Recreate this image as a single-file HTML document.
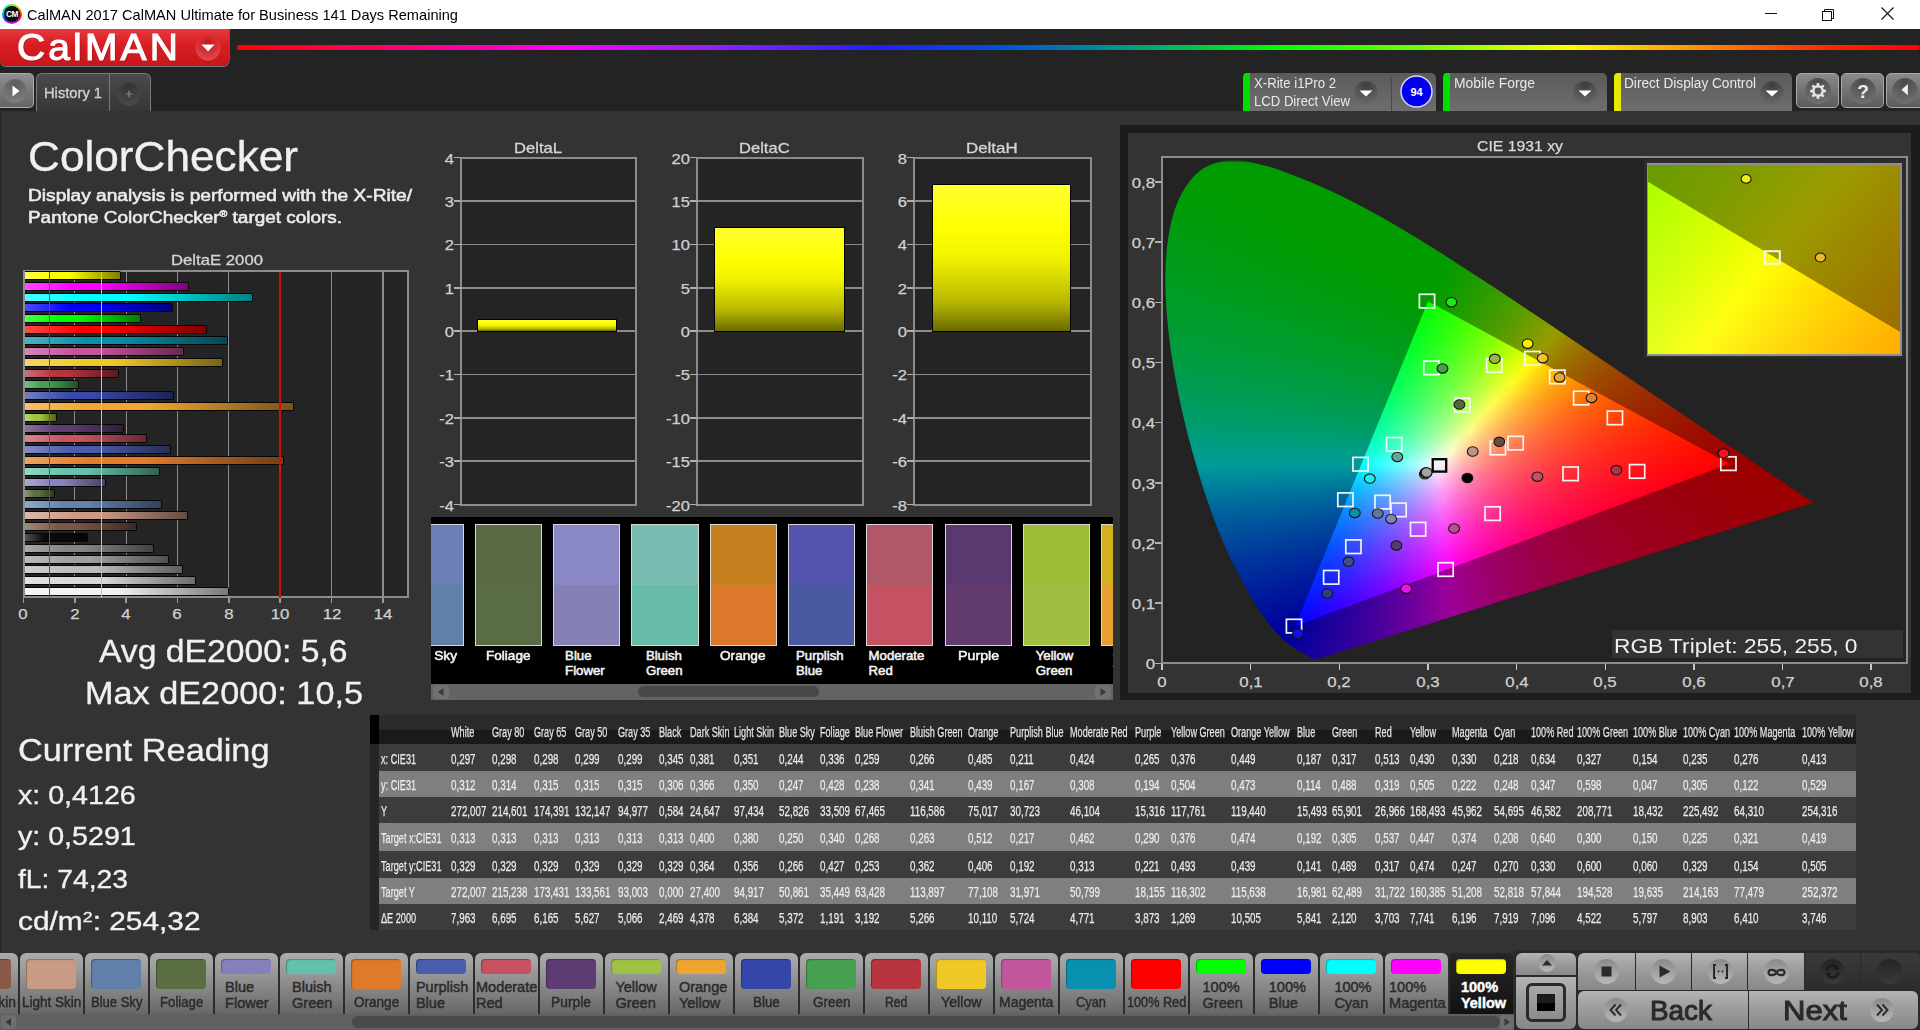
<!DOCTYPE html>
<html><head><meta charset="utf-8"><title>CalMAN</title>
<style>
html,body{margin:0;padding:0;width:1920px;height:1030px;overflow:hidden;background:#333;}
body{position:relative;font-family:"Liberation Sans", sans-serif;}
.a{position:absolute;}
.cs i{position:absolute;left:0;width:745px;display:block;}
.t{position:absolute;white-space:nowrap;line-height:1;transform-origin:0 0;}
</style></head><body>
<div class="a" style="left:0px;top:0px;width:1920px;height:29px;background:#fff"></div>
<div class="a" style="left:2px;top:4px;width:20px;height:20px;border-radius:50%;background:conic-gradient(#60f040 0deg,#ffd000 50deg,#ff2020 95deg,#ff10a0 140deg,#9020ff 190deg,#2040ff 230deg,#00c0ff 275deg,#00f080 320deg,#60f040 360deg)"></div>
<div class="a" style="left:4px;top:6px;width:16px;height:16px;border-radius:50%;background:#0c0c0c"></div>
<svg class="a" style="left:2px;top:4px" width="20" height="20"><text x="10" y="13.3" font-family="Liberation Sans" font-weight="bold" font-size="8.3" fill="#fff" text-anchor="middle" letter-spacing="-0.5">CM</text></svg>
<div class="t" id="title" style="left:27.00px;top:7.25px;font-size:15px;color:#000;transform:scaleX(0.9736);">CalMAN 2017 CalMAN Ultimate for Business 141 Days Remaining</div>
<div class="a" style="left:1765px;top:13px;width:12px;height:1px;background:#111"></div>
<svg class="a" style="left:1818px;top:5px" width="20" height="20"><path d="M6.5 6.5 V4.5 H15.5 V13.5 H13.5" fill="none" stroke="#111" stroke-width="1"/><rect x="4.5" y="6.5" width="9" height="9" fill="none" stroke="#111" stroke-width="1"/></svg>
<svg class="a" style="left:1879px;top:5px" width="18" height="18"><path d="M2.5 2.5 L14.5 14.5 M14.5 2.5 L2.5 14.5" stroke="#111" stroke-width="1.1"/></svg>
<div class="a" style="left:0px;top:29px;width:1920px;height:82px;background:#232323"></div>
<div class="a" style="left:0px;top:29px;width:229px;height:37px;background:linear-gradient(#e43a3e,#d81d22 45%,#c8161b);border-radius:0 0 6px 6px;box-shadow:0 1px 0 #7a7a7a, 1px 0 0 #5a5a5a"></div>
<div class="t" id="logo" style="left:17.00px;top:28.62px;font-size:37.5px;color:#fff;transform:scaleX(1.0405);letter-spacing:3px;-webkit-text-stroke:1.1px #fff;text-shadow:1px 1px 1px rgba(0,0,0,.3)">CalMAN</div>
<svg class="a" style="left:194px;top:34px" width="28" height="28"><defs><radialGradient id="ddg" cx=".5" cy=".3" r=".7"><stop offset="0" stop-color="#c8141a"/><stop offset="1" stop-color="#e04a4e"/></radialGradient></defs><circle cx="14" cy="14" r="12.5" fill="url(#ddg)"/><path d="M7.5 10.5 H20.5 L14 17.5 Z" fill="#fff"/></svg>
<div class="a" style="left:237px;top:45px;width:1683px;height:5px;background:linear-gradient(90deg,#ff0000 0px,#ff0080 180px,#ff00ff 330px,#9020ff 480px,#2020ff 640px,#0050e0 760px,#00a080 900px,#00ff00 1040px,#80ff00 1200px,#ffff00 1330px,#ff9000 1460px,#ff3000 1580px,#ff0000 1683px);border-radius:2px"></div>
<div class="a" style="left:0px;top:72.5px;width:34px;height:35px;background:linear-gradient(#8e8e8e,#646464);border:1.5px solid #acacac;border-left:none;border-radius:0 5px 5px 0;box-sizing:border-box"></div>
<svg class="a" style="left:2px;top:78px" width="26" height="26"><defs><radialGradient id="pbg" cx=".5" cy=".2" r=".8"><stop offset="0" stop-color="#5c5c5c"/><stop offset="1" stop-color="#7e7e7e"/></radialGradient></defs><circle cx="13" cy="13" r="12" fill="url(#pbg)"/><path d="M10.5 7.5 L17.5 13 L10.5 18.5 Z" fill="#fff"/></svg>
<div class="a" style="left:36px;top:73px;width:115px;height:38px;background:linear-gradient(#4a4a4a,#363636);border:1.3px solid #7a7a7a;border-bottom:none;border-radius:6px 6px 0 0;box-sizing:border-box"></div>
<div class="a" style="left:109px;top:74px;width:1.3px;height:37px;background:#7a7a7a"></div>
<div class="t" id="hist" style="left:44.00px;top:85.60px;font-size:14px;color:#cfcfcf;transform:scaleX(1.0501);-webkit-text-stroke:0.35px #cfcfcf">History 1</div>
<svg class="a" style="left:117px;top:82px" width="24" height="24"><defs><radialGradient id="plg" cx=".5" cy=".2" r=".8"><stop offset="0" stop-color="#333"/><stop offset="1" stop-color="#4a4a4a"/></radialGradient></defs><circle cx="12" cy="12" r="11.5" fill="url(#plg)"/><path d="M12 8.5 V15.5 M8.5 12 H15.5" stroke="#8a8a8a" stroke-width="1.2"/></svg>
<div class="a" style="left:1243px;top:73px;width:193px;height:38px;background:linear-gradient(#5a5a5a,#6e6e6e);border-radius:5px 5px 0 0"></div><div class="a" style="left:1243px;top:73px;width:7px;height:38px;background:#00dd00;border-radius:4px 0 0 0"></div>
<div class="t" id="xr1" style="left:1254.00px;top:76.10px;font-size:14px;color:#e8e8e8;transform:scaleX(0.9408);">X-Rite i1Pro 2</div>
<div class="t" id="xr2" style="left:1254.00px;top:93.60px;font-size:14px;color:#e8e8e8;transform:scaleX(0.9372);">LCD Direct View</div>
<div class="a" style="left:1391px;top:77px;width:1px;height:34px;background:#4a4a4a"></div>
<svg class="a" style="left:1400px;top:75px" width="34" height="34"><circle cx="16.5" cy="16.5" r="15.5" fill="#0000ee" stroke="#d8d8f8" stroke-width="1.5"/><text x="16.5" y="20.5" font-family="Liberation Sans" font-weight="bold" font-size="11" fill="#fff" text-anchor="middle">94</text></svg>
<div class="a" style="left:1443px;top:73px;width:164px;height:38px;background:linear-gradient(#5a5a5a,#6e6e6e);border-radius:5px 5px 0 0"></div><div class="a" style="left:1443px;top:73px;width:7px;height:38px;background:#00dd00;border-radius:4px 0 0 0"></div>
<div class="t" id="mf" style="left:1454.00px;top:76.10px;font-size:14px;color:#e8e8e8;transform:scaleX(0.9914);">Mobile Forge</div>
<div class="a" style="left:1614px;top:73px;width:178px;height:38px;background:linear-gradient(#5a5a5a,#6e6e6e);border-radius:5px 5px 0 0"></div><div class="a" style="left:1614px;top:73px;width:7px;height:38px;background:#e8e800;border-radius:4px 0 0 0"></div>
<div class="t" id="ddc" style="left:1624.00px;top:76.10px;font-size:14px;color:#e8e8e8;transform:scaleX(0.9751);">Direct Display Control</div>
<svg class="a" style="left:1353px;top:80px" width="26" height="26"><defs><radialGradient id="ddr1366" cx=".5" cy=".15" r=".85"><stop offset="0" stop-color="#3e3e3e"/><stop offset="1" stop-color="#6a6a6a"/></radialGradient></defs><circle cx="13" cy="13" r="12" fill="url(#ddr1366)"/><path d="M6.5 10.5 H19.5 L13 16.5 Z" fill="#fff"/></svg>
<svg class="a" style="left:1572px;top:80px" width="26" height="26"><defs><radialGradient id="ddr1585" cx=".5" cy=".15" r=".85"><stop offset="0" stop-color="#3e3e3e"/><stop offset="1" stop-color="#6a6a6a"/></radialGradient></defs><circle cx="13" cy="13" r="12" fill="url(#ddr1585)"/><path d="M6.5 10.5 H19.5 L13 16.5 Z" fill="#fff"/></svg>
<svg class="a" style="left:1759px;top:80px" width="26" height="26"><defs><radialGradient id="ddr1772" cx=".5" cy=".15" r=".85"><stop offset="0" stop-color="#3e3e3e"/><stop offset="1" stop-color="#6a6a6a"/></radialGradient></defs><circle cx="13" cy="13" r="12" fill="url(#ddr1772)"/><path d="M6.5 10.5 H19.5 L13 16.5 Z" fill="#fff"/></svg>
<div class="a" style="left:1796px;top:73px;width:43px;height:35px;background:linear-gradient(#8a8a8a,#5c5c5c);border:1.5px solid #a8a8a8;border-radius:5px;box-sizing:border-box"></div><svg class="a" style="left:1803px;top:76px" width="30" height="30"><defs><radialGradient id="sb1796" cx=".5" cy=".15" r=".85"><stop offset="0" stop-color="#4a4a4a"/><stop offset="1" stop-color="#707070"/></radialGradient></defs><circle cx="15" cy="15" r="13" fill="url(#sb1796)"/><g transform="translate(15 15)" fill="#e4e4e4"><circle r="4.7" fill="none" stroke="#e4e4e4" stroke-width="2.6"/><rect x="-1.35" y="-7.9" width="2.7" height="3.2" transform="rotate(0)"/><rect x="-1.35" y="-7.9" width="2.7" height="3.2" transform="rotate(45)"/><rect x="-1.35" y="-7.9" width="2.7" height="3.2" transform="rotate(90)"/><rect x="-1.35" y="-7.9" width="2.7" height="3.2" transform="rotate(135)"/><rect x="-1.35" y="-7.9" width="2.7" height="3.2" transform="rotate(180)"/><rect x="-1.35" y="-7.9" width="2.7" height="3.2" transform="rotate(225)"/><rect x="-1.35" y="-7.9" width="2.7" height="3.2" transform="rotate(270)"/><rect x="-1.35" y="-7.9" width="2.7" height="3.2" transform="rotate(315)"/></g></svg>
<div class="a" style="left:1841px;top:73px;width:43px;height:35px;background:linear-gradient(#8a8a8a,#5c5c5c);border:1.5px solid #a8a8a8;border-radius:5px;box-sizing:border-box"></div><svg class="a" style="left:1848px;top:76px" width="30" height="30"><defs><radialGradient id="sb1841" cx=".5" cy=".15" r=".85"><stop offset="0" stop-color="#4a4a4a"/><stop offset="1" stop-color="#707070"/></radialGradient></defs><circle cx="15" cy="15" r="13" fill="url(#sb1841)"/><text x="15" y="21.5" font-family="Liberation Sans" font-weight="bold" font-size="19" fill="#eee" text-anchor="middle">?</text></svg>
<div class="a" style="left:1886px;top:73px;width:43px;height:35px;background:linear-gradient(#8a8a8a,#5c5c5c);border:1.5px solid #a8a8a8;border-radius:5px;box-sizing:border-box"></div><svg class="a" style="left:1889.5px;top:76px" width="30" height="30"><defs><radialGradient id="sb1886" cx=".5" cy=".15" r=".85"><stop offset="0" stop-color="#4a4a4a"/><stop offset="1" stop-color="#707070"/></radialGradient></defs><circle cx="15" cy="15" r="13" fill="url(#sb1886)"/><path d="M17.9 8 V19.4 L11.5 13.7 Z" fill="#f0f0f0"/></svg>
<div class="a" style="left:0px;top:111px;width:1920px;height:842px;background:#333"></div>
<div class="a" style="left:0px;top:111px;width:1px;height:842px;background:#262626"></div>
<div class="t" id="cc" style="left:28.00px;top:136.00px;font-size:42px;color:#f0f0f0;transform:scaleX(1.0515);-webkit-text-stroke:0.35px #f0f0f0">ColorChecker</div>
<div class="t" id="d1" style="left:28.00px;top:188.00px;font-size:16px;color:#ececec;transform:scaleX(1.1962);-webkit-text-stroke:0.55px #ececec">Display analysis is performed with the X-Rite/</div>
<div class="t" id="d2" style="left:28.00px;top:209.80px;font-size:16px;color:#ececec;transform:scaleX(1.1829);-webkit-text-stroke:0.55px #ececec">Pantone ColorChecker<sup style="font-size:9px;vertical-align:6px">&reg;</sup> target colors.</div>
<div class="t" id="de" style="left:171.00px;top:252.68px;font-size:14.5px;color:#d4d4d4;transform:scaleX(1.1527);-webkit-text-stroke:0.3px #d4d4d4">DeltaE 2000</div>
<div class="a" style="left:23.4px;top:269.5px;width:386.1px;height:328.0px;background:#242424;border:2px solid #8c8c8c;box-sizing:border-box"></div>
<div class="a" style="left:74.16px;top:269.5px;width:1.2px;height:328.0px;background:#8c8c8c"></div>
<div class="a" style="left:125.52px;top:269.5px;width:1.2px;height:328.0px;background:#8c8c8c"></div>
<div class="a" style="left:176.88px;top:269.5px;width:1.2px;height:328.0px;background:#8c8c8c"></div>
<div class="a" style="left:228.24px;top:269.5px;width:1.2px;height:328.0px;background:#8c8c8c"></div>
<div class="a" style="left:330.96px;top:269.5px;width:1.2px;height:328.0px;background:#8c8c8c"></div>
<div class="a" style="left:382.32px;top:269.5px;width:1.2px;height:328.0px;background:#8c8c8c"></div>
<div class="a" style="left:25.4px;top:270.70px;width:95.20px;height:9px;background:linear-gradient(90deg,#ffff4c 0px,#ffff00 29px,#ffff00 43px,#7f7f00 100%);border:1.5px solid #060606;border-left:none;box-sizing:border-box;border-radius:0 2px 2px 0"></div>
<div class="a" style="left:25.4px;top:281.62px;width:163.61px;height:9px;background:linear-gradient(90deg,#ff4cff 0px,#ff00ff 49px,#ff00ff 74px,#7f007f 100%);border:1.5px solid #060606;border-left:none;box-sizing:border-box;border-radius:0 2px 2px 0"></div>
<div class="a" style="left:25.4px;top:292.53px;width:227.63px;height:9px;background:linear-gradient(90deg,#4cffff 0px,#00ffff 60px,#00ffff 103px,#007f7f 100%);border:1.5px solid #060606;border-left:none;box-sizing:border-box;border-radius:0 2px 2px 0"></div>
<div class="a" style="left:25.4px;top:303.45px;width:147.87px;height:9px;background:linear-gradient(90deg,#4c4cff 0px,#0000ff 45px,#0000ff 67px,#00007f 100%);border:1.5px solid #060606;border-left:none;box-sizing:border-box;border-radius:0 2px 2px 0"></div>
<div class="a" style="left:25.4px;top:314.37px;width:115.12px;height:9px;background:linear-gradient(90deg,#4cff4c 0px,#00ff00 35px,#00ff00 52px,#007f00 100%);border:1.5px solid #060606;border-left:none;box-sizing:border-box;border-radius:0 2px 2px 0"></div>
<div class="a" style="left:25.4px;top:325.28px;width:181.23px;height:9px;background:linear-gradient(90deg,#ff4c4c 0px,#ff0000 55px,#ff0000 82px,#7f0000 100%);border:1.5px solid #060606;border-left:none;box-sizing:border-box;border-radius:0 2px 2px 0"></div>
<div class="a" style="left:25.4px;top:336.20px;width:202.36px;height:9px;background:linear-gradient(90deg,#53afc3 0px,#0a8eaa 60px,#0a8eaa 92px,#054755 100%);border:1.5px solid #060606;border-left:none;box-sizing:border-box;border-radius:0 2px 2px 0"></div>
<div class="a" style="left:25.4px;top:347.12px;width:158.11px;height:9px;background:linear-gradient(90deg,#d488b9 0px,#c2569c 48px,#c2569c 72px,#612b4e 100%);border:1.5px solid #060606;border-left:none;box-sizing:border-box;border-radius:0 2px 2px 0"></div>
<div class="a" style="left:25.4px;top:358.04px;width:197.79px;height:9px;background:linear-gradient(90deg,#f4d868 0px,#f0c828 60px,#f0c828 89px,#786414 100%);border:1.5px solid #060606;border-left:none;box-sizing:border-box;border-radius:0 2px 2px 0"></div>
<div class="a" style="left:25.4px;top:368.95px;width:94.09px;height:9px;background:linear-gradient(90deg,#cb7077 0px,#b5343e 29px,#b5343e 43px,#5a1a1f 100%);border:1.5px solid #060606;border-left:none;box-sizing:border-box;border-radius:0 2px 2px 0"></div>
<div class="a" style="left:25.4px;top:379.87px;width:53.44px;height:9px;background:linear-gradient(90deg,#7cbc84 0px,#45a050 16px,#45a050 24px,#225028 100%);border:1.5px solid #060606;border-left:none;box-sizing:border-box;border-radius:0 2px 2px 0"></div>
<div class="a" style="left:25.4px;top:390.79px;width:149.00px;height:9px;background:linear-gradient(90deg,#737ec0 0px,#3848a6 45px,#3848a6 67px,#1c2453 100%);border:1.5px solid #060606;border-left:none;box-sizing:border-box;border-radius:0 2px 2px 0"></div>
<div class="a" style="left:25.4px;top:401.70px;width:268.77px;height:9px;background:linear-gradient(90deg,#f5c06e 0px,#f2a630 60px,#f2a630 121px,#795318 100%);border:1.5px solid #060606;border-left:none;box-sizing:border-box;border-radius:0 2px 2px 0"></div>
<div class="a" style="left:25.4px;top:412.62px;width:31.59px;height:9px;background:linear-gradient(90deg,#bdd477 0px,#a2c23e 10px,#a2c23e 15px,#51611f 100%);border:1.5px solid #060606;border-left:none;box-sizing:border-box;border-radius:0 2px 2px 0"></div>
<div class="a" style="left:25.4px;top:423.54px;width:98.46px;height:9px;background:linear-gradient(90deg,#8f769c 0px,#5f3c72 30px,#5f3c72 45px,#2f1e39 100%);border:1.5px solid #060606;border-left:none;box-sizing:border-box;border-radius:0 2px 2px 0"></div>
<div class="a" style="left:25.4px;top:434.45px;width:121.52px;height:9px;background:linear-gradient(90deg,#db8591 0px,#cc5262 37px,#cc5262 55px,#662931 100%);border:1.5px solid #060606;border-left:none;box-sizing:border-box;border-radius:0 2px 2px 0"></div>
<div class="a" style="left:25.4px;top:445.37px;width:145.99px;height:9px;background:linear-gradient(90deg,#828cc6 0px,#4d5cae 44px,#4d5cae 66px,#262e57 100%);border:1.5px solid #060606;border-left:none;box-sizing:border-box;border-radius:0 2px 2px 0"></div>
<div class="a" style="left:25.4px;top:456.29px;width:258.62px;height:9px;background:linear-gradient(90deg,#eca369 0px,#e57c2a 60px,#e57c2a 117px,#723e15 100%);border:1.5px solid #060606;border-left:none;box-sizing:border-box;border-radius:0 2px 2px 0"></div>
<div class="a" style="left:25.4px;top:467.21px;width:134.23px;height:9px;background:linear-gradient(90deg,#93d4c3 0px,#66c2aa 41px,#66c2aa 61px,#336155 100%);border:1.5px solid #060606;border-left:none;box-sizing:border-box;border-radius:0 2px 2px 0"></div>
<div class="a" style="left:25.4px;top:478.12px;width:80.97px;height:9px;background:linear-gradient(90deg,#aba9d2 0px,#8885c0 25px,#8885c0 37px,#444260 100%);border:1.5px solid #060606;border-left:none;box-sizing:border-box;border-radius:0 2px 2px 0"></div>
<div class="a" style="left:25.4px;top:489.04px;width:29.58px;height:9px;background:linear-gradient(90deg,#8c9a7c 0px,#5b7045 9px,#5b7045 14px,#2d3822 100%);border:1.5px solid #060606;border-left:none;box-sizing:border-box;border-radius:0 2px 2px 0"></div>
<div class="a" style="left:25.4px;top:499.96px;width:136.95px;height:9px;background:linear-gradient(90deg,#91a7c7 0px,#6282b0 41px,#6282b0 62px,#314158 100%);border:1.5px solid #060606;border-left:none;box-sizing:border-box;border-radius:0 2px 2px 0"></div>
<div class="a" style="left:25.4px;top:510.87px;width:162.94px;height:9px;background:linear-gradient(90deg,#dbb9aa 0px,#cc9b86 49px,#cc9b86 74px,#664d43 100%);border:1.5px solid #060606;border-left:none;box-sizing:border-box;border-radius:0 2px 2px 0"></div>
<div class="a" style="left:25.4px;top:521.79px;width:111.43px;height:9px;background:linear-gradient(90deg,#a4887d 0px,#7d5546 34px,#7d5546 51px,#3e2a23 100%);border:1.5px solid #060606;border-left:none;box-sizing:border-box;border-radius:0 2px 2px 0"></div>
<div class="a" style="left:25.4px;top:532.71px;width:62.40px;height:9px;background:linear-gradient(90deg,#535353 0px,#0a0a0a 19px,#0a0a0a 29px,#050505 100%);border:1.5px solid #060606;border-left:none;box-sizing:border-box;border-radius:0 2px 2px 0"></div>
<div class="a" style="left:25.4px;top:543.62px;width:129.09px;height:9px;background:linear-gradient(90deg,#a9a9a9 0px,#858585 39px,#858585 59px,#424242 100%);border:1.5px solid #060606;border-left:none;box-sizing:border-box;border-radius:0 2px 2px 0"></div>
<div class="a" style="left:25.4px;top:554.54px;width:143.50px;height:9px;background:linear-gradient(90deg,#bcbcbc 0px,#a0a0a0 43px,#a0a0a0 65px,#505050 100%);border:1.5px solid #060606;border-left:none;box-sizing:border-box;border-radius:0 2px 2px 0"></div>
<div class="a" style="left:25.4px;top:565.46px;width:157.32px;height:9px;background:linear-gradient(90deg,#d0d0d0 0px,#bdbdbd 47px,#bdbdbd 71px,#5e5e5e 100%);border:1.5px solid #060606;border-left:none;box-sizing:border-box;border-radius:0 2px 2px 0"></div>
<div class="a" style="left:25.4px;top:576.38px;width:170.93px;height:9px;background:linear-gradient(90deg,#e3e3e3 0px,#d8d8d8 52px,#d8d8d8 77px,#6c6c6c 100%);border:1.5px solid #060606;border-left:none;box-sizing:border-box;border-radius:0 2px 2px 0"></div>
<div class="a" style="left:25.4px;top:587.29px;width:203.49px;height:9px;background:linear-gradient(90deg,#f5f5f5 0px,#f2f2f2 60px,#f2f2f2 92px,#797979 100%);border:1.5px solid #060606;border-left:none;box-sizing:border-box;border-radius:0 2px 2px 0"></div>
<div class="a" style="left:48.88px;top:271.5px;width:1.6px;height:326.0px;background:#0a8a0a"></div>
<div class="a" style="left:100.64px;top:271.5px;width:1.6px;height:326.0px;background:#d8d800"></div>
<div class="a" style="left:279.20px;top:271.5px;width:2px;height:326.0px;background:#d01010"></div>
<div class="a" style="left:22.65px;top:597.5px;width:1.5px;height:5px;background:#9a9a9a"></div>
<div class="t" id="t12" style="left:23.40px;top:607.10px;font-size:14px;color:#d0d0d0;transform:scaleX(1.2) translateX(-50%);-webkit-text-stroke:0.25px #d0d0d0">0</div>
<div class="a" style="left:74.01px;top:597.5px;width:1.5px;height:5px;background:#9a9a9a"></div>
<div class="t" id="t13" style="left:74.76px;top:607.10px;font-size:14px;color:#d0d0d0;transform:scaleX(1.2) translateX(-50%);-webkit-text-stroke:0.25px #d0d0d0">2</div>
<div class="a" style="left:125.37px;top:597.5px;width:1.5px;height:5px;background:#9a9a9a"></div>
<div class="t" id="t14" style="left:126.12px;top:607.10px;font-size:14px;color:#d0d0d0;transform:scaleX(1.2) translateX(-50%);-webkit-text-stroke:0.25px #d0d0d0">4</div>
<div class="a" style="left:176.73px;top:597.5px;width:1.5px;height:5px;background:#9a9a9a"></div>
<div class="t" id="t15" style="left:177.48px;top:607.10px;font-size:14px;color:#d0d0d0;transform:scaleX(1.2) translateX(-50%);-webkit-text-stroke:0.25px #d0d0d0">6</div>
<div class="a" style="left:228.09px;top:597.5px;width:1.5px;height:5px;background:#9a9a9a"></div>
<div class="t" id="t16" style="left:228.84px;top:607.10px;font-size:14px;color:#d0d0d0;transform:scaleX(1.2) translateX(-50%);-webkit-text-stroke:0.25px #d0d0d0">8</div>
<div class="a" style="left:279.45px;top:597.5px;width:1.5px;height:5px;background:#9a9a9a"></div>
<div class="t" id="t17" style="left:280.20px;top:607.10px;font-size:14px;color:#d0d0d0;transform:scaleX(1.2) translateX(-50%);-webkit-text-stroke:0.25px #d0d0d0">10</div>
<div class="a" style="left:330.81px;top:597.5px;width:1.5px;height:5px;background:#9a9a9a"></div>
<div class="t" id="t18" style="left:331.56px;top:607.10px;font-size:14px;color:#d0d0d0;transform:scaleX(1.2) translateX(-50%);-webkit-text-stroke:0.25px #d0d0d0">12</div>
<div class="a" style="left:382.17px;top:597.5px;width:1.5px;height:5px;background:#9a9a9a"></div>
<div class="t" id="t19" style="left:382.92px;top:607.10px;font-size:14px;color:#d0d0d0;transform:scaleX(1.2) translateX(-50%);-webkit-text-stroke:0.25px #d0d0d0">14</div>
<div class="t" id="avg" style="left:99.40px;top:635.40px;font-size:32px;color:#f0f0f0;transform:scaleX(1.0532);-webkit-text-stroke:0.35px #f0f0f0">Avg dE2000: 5,6</div>
<div class="t" id="max" style="left:85.00px;top:677.30px;font-size:32px;color:#f0f0f0;transform:scaleX(1.0703);-webkit-text-stroke:0.35px #f0f0f0">Max dE2000: 10,5</div>
<div class="t" id="cr" style="left:17.50px;top:733.60px;font-size:32px;color:#f0f0f0;transform:scaleX(1.0711);-webkit-text-stroke:0.35px #f0f0f0">Current Reading</div>
<div class="t" id="crx" style="left:17.50px;top:783.15px;font-size:25px;color:#f0f0f0;transform:scaleX(1.1443);-webkit-text-stroke:0.35px #f0f0f0">x: 0,4126</div>
<div class="t" id="cry" style="left:17.50px;top:824.45px;font-size:25px;color:#f0f0f0;transform:scaleX(1.1443);-webkit-text-stroke:0.35px #f0f0f0">y: 0,5291</div>
<div class="t" id="crf" style="left:17.50px;top:866.75px;font-size:25px;color:#f0f0f0;transform:scaleX(1.1304);-webkit-text-stroke:0.35px #f0f0f0">fL: 74,23</div>
<div class="t" id="crc" style="left:17.50px;top:908.75px;font-size:25px;color:#f0f0f0;transform:scaleX(1.1937);-webkit-text-stroke:0.35px #f0f0f0">cd/m<span style="font-size:15px;vertical-align:8px">2</span>: 254,32</div>
<div class="t" id="hDeltaL" style="left:513.70px;top:140.68px;font-size:14.5px;color:#d4d4d4;transform:scaleX(1.1450);-webkit-text-stroke:0.3px #d4d4d4">DeltaL</div>
<div class="a" style="left:459.8px;top:156.7px;width:176.8px;height:348.9px;background:#242424;border:2px solid #8c8c8c;box-sizing:border-box"></div>
<div class="a" style="left:460.8px;top:200.31px;width:174.8px;height:1.5px;background:#8c8c8c"></div>
<div class="a" style="left:460.8px;top:243.68px;width:174.8px;height:1.5px;background:#8c8c8c"></div>
<div class="a" style="left:460.8px;top:287.04px;width:174.8px;height:1.5px;background:#8c8c8c"></div>
<div class="a" style="left:460.8px;top:330.40px;width:174.8px;height:1.5px;background:#8c8c8c"></div>
<div class="a" style="left:460.8px;top:373.76px;width:174.8px;height:1.5px;background:#8c8c8c"></div>
<div class="a" style="left:460.8px;top:417.12px;width:174.8px;height:1.5px;background:#8c8c8c"></div>
<div class="a" style="left:460.8px;top:460.49px;width:174.8px;height:1.5px;background:#8c8c8c"></div>
<div class="a" style="left:453.8px;top:156.95px;width:7px;height:1.5px;background:#b0b0b0"></div>
<div class="t" id="t28" style="left:453.80px;top:151.60px;font-size:14px;color:#d0d0d0;transform:scaleX(1.18) translateX(-100%);-webkit-text-stroke:0.25px #d0d0d0">4</div>
<div class="a" style="left:453.8px;top:200.31px;width:7px;height:1.5px;background:#b0b0b0"></div>
<div class="t" id="t29" style="left:453.80px;top:194.96px;font-size:14px;color:#d0d0d0;transform:scaleX(1.18) translateX(-100%);-webkit-text-stroke:0.25px #d0d0d0">3</div>
<div class="a" style="left:453.8px;top:243.68px;width:7px;height:1.5px;background:#b0b0b0"></div>
<div class="t" id="t30" style="left:453.80px;top:238.33px;font-size:14px;color:#d0d0d0;transform:scaleX(1.18) translateX(-100%);-webkit-text-stroke:0.25px #d0d0d0">2</div>
<div class="a" style="left:453.8px;top:287.04px;width:7px;height:1.5px;background:#b0b0b0"></div>
<div class="t" id="t31" style="left:453.80px;top:281.69px;font-size:14px;color:#d0d0d0;transform:scaleX(1.18) translateX(-100%);-webkit-text-stroke:0.25px #d0d0d0">1</div>
<div class="a" style="left:453.8px;top:330.40px;width:7px;height:1.5px;background:#b0b0b0"></div>
<div class="t" id="t32" style="left:453.80px;top:325.05px;font-size:14px;color:#d0d0d0;transform:scaleX(1.18) translateX(-100%);-webkit-text-stroke:0.25px #d0d0d0">0</div>
<div class="a" style="left:453.8px;top:373.76px;width:7px;height:1.5px;background:#b0b0b0"></div>
<div class="t" id="t33" style="left:453.80px;top:368.41px;font-size:14px;color:#d0d0d0;transform:scaleX(1.18) translateX(-100%);-webkit-text-stroke:0.25px #d0d0d0">-1</div>
<div class="a" style="left:453.8px;top:417.12px;width:7px;height:1.5px;background:#b0b0b0"></div>
<div class="t" id="t34" style="left:453.80px;top:411.78px;font-size:14px;color:#d0d0d0;transform:scaleX(1.18) translateX(-100%);-webkit-text-stroke:0.25px #d0d0d0">-2</div>
<div class="a" style="left:453.8px;top:460.49px;width:7px;height:1.5px;background:#b0b0b0"></div>
<div class="t" id="t35" style="left:453.80px;top:455.14px;font-size:14px;color:#d0d0d0;transform:scaleX(1.18) translateX(-100%);-webkit-text-stroke:0.25px #d0d0d0">-3</div>
<div class="a" style="left:453.8px;top:503.85px;width:7px;height:1.5px;background:#b0b0b0"></div>
<div class="t" id="t36" style="left:453.80px;top:498.50px;font-size:14px;color:#d0d0d0;transform:scaleX(1.18) translateX(-100%);-webkit-text-stroke:0.25px #d0d0d0">-4</div>
<div class="a" style="left:477.0px;top:319.3px;width:140.0px;height:12.8px;background:linear-gradient(#ffff30,#ffff00 30%,#f2f200 50%,#b8b800 80%,#6a6a00);border:1px solid #000;box-sizing:border-box"></div>
<div class="t" id="hDeltaC" style="left:738.50px;top:140.68px;font-size:14.5px;color:#d4d4d4;transform:scaleX(1.1415);-webkit-text-stroke:0.3px #d4d4d4">DeltaC</div>
<div class="a" style="left:695.6px;top:156.7px;width:168.4px;height:348.9px;background:#242424;border:2px solid #8c8c8c;box-sizing:border-box"></div>
<div class="a" style="left:696.6px;top:200.31px;width:166.4px;height:1.5px;background:#8c8c8c"></div>
<div class="a" style="left:696.6px;top:243.68px;width:166.4px;height:1.5px;background:#8c8c8c"></div>
<div class="a" style="left:696.6px;top:287.04px;width:166.4px;height:1.5px;background:#8c8c8c"></div>
<div class="a" style="left:696.6px;top:330.40px;width:166.4px;height:1.5px;background:#8c8c8c"></div>
<div class="a" style="left:696.6px;top:373.76px;width:166.4px;height:1.5px;background:#8c8c8c"></div>
<div class="a" style="left:696.6px;top:417.12px;width:166.4px;height:1.5px;background:#8c8c8c"></div>
<div class="a" style="left:696.6px;top:460.49px;width:166.4px;height:1.5px;background:#8c8c8c"></div>
<div class="a" style="left:689.6px;top:156.95px;width:7px;height:1.5px;background:#b0b0b0"></div>
<div class="t" id="t38" style="left:689.60px;top:151.60px;font-size:14px;color:#d0d0d0;transform:scaleX(1.18) translateX(-100%);-webkit-text-stroke:0.25px #d0d0d0">20</div>
<div class="a" style="left:689.6px;top:200.31px;width:7px;height:1.5px;background:#b0b0b0"></div>
<div class="t" id="t39" style="left:689.60px;top:194.96px;font-size:14px;color:#d0d0d0;transform:scaleX(1.18) translateX(-100%);-webkit-text-stroke:0.25px #d0d0d0">15</div>
<div class="a" style="left:689.6px;top:243.68px;width:7px;height:1.5px;background:#b0b0b0"></div>
<div class="t" id="t40" style="left:689.60px;top:238.33px;font-size:14px;color:#d0d0d0;transform:scaleX(1.18) translateX(-100%);-webkit-text-stroke:0.25px #d0d0d0">10</div>
<div class="a" style="left:689.6px;top:287.04px;width:7px;height:1.5px;background:#b0b0b0"></div>
<div class="t" id="t41" style="left:689.60px;top:281.69px;font-size:14px;color:#d0d0d0;transform:scaleX(1.18) translateX(-100%);-webkit-text-stroke:0.25px #d0d0d0">5</div>
<div class="a" style="left:689.6px;top:330.40px;width:7px;height:1.5px;background:#b0b0b0"></div>
<div class="t" id="t42" style="left:689.60px;top:325.05px;font-size:14px;color:#d0d0d0;transform:scaleX(1.18) translateX(-100%);-webkit-text-stroke:0.25px #d0d0d0">0</div>
<div class="a" style="left:689.6px;top:373.76px;width:7px;height:1.5px;background:#b0b0b0"></div>
<div class="t" id="t43" style="left:689.60px;top:368.41px;font-size:14px;color:#d0d0d0;transform:scaleX(1.18) translateX(-100%);-webkit-text-stroke:0.25px #d0d0d0">-5</div>
<div class="a" style="left:689.6px;top:417.12px;width:7px;height:1.5px;background:#b0b0b0"></div>
<div class="t" id="t44" style="left:689.60px;top:411.78px;font-size:14px;color:#d0d0d0;transform:scaleX(1.18) translateX(-100%);-webkit-text-stroke:0.25px #d0d0d0">-10</div>
<div class="a" style="left:689.6px;top:460.49px;width:7px;height:1.5px;background:#b0b0b0"></div>
<div class="t" id="t45" style="left:689.60px;top:455.14px;font-size:14px;color:#d0d0d0;transform:scaleX(1.18) translateX(-100%);-webkit-text-stroke:0.25px #d0d0d0">-15</div>
<div class="a" style="left:689.6px;top:503.85px;width:7px;height:1.5px;background:#b0b0b0"></div>
<div class="t" id="t46" style="left:689.60px;top:498.50px;font-size:14px;color:#d0d0d0;transform:scaleX(1.18) translateX(-100%);-webkit-text-stroke:0.25px #d0d0d0">-20</div>
<div class="a" style="left:714.0px;top:226.8px;width:131.4px;height:105.3px;background:linear-gradient(#ffff30,#ffff00 30%,#f2f200 50%,#b8b800 80%,#6a6a00);border:1px solid #000;box-sizing:border-box"></div>
<div class="t" id="hDeltaH" style="left:965.50px;top:140.68px;font-size:14.5px;color:#d4d4d4;transform:scaleX(1.1640);-webkit-text-stroke:0.3px #d4d4d4">DeltaH</div>
<div class="a" style="left:913.4px;top:156.7px;width:178.6px;height:348.9px;background:#242424;border:2px solid #8c8c8c;box-sizing:border-box"></div>
<div class="a" style="left:914.4px;top:200.31px;width:176.6px;height:1.5px;background:#8c8c8c"></div>
<div class="a" style="left:914.4px;top:243.68px;width:176.6px;height:1.5px;background:#8c8c8c"></div>
<div class="a" style="left:914.4px;top:287.04px;width:176.6px;height:1.5px;background:#8c8c8c"></div>
<div class="a" style="left:914.4px;top:330.40px;width:176.6px;height:1.5px;background:#8c8c8c"></div>
<div class="a" style="left:914.4px;top:373.76px;width:176.6px;height:1.5px;background:#8c8c8c"></div>
<div class="a" style="left:914.4px;top:417.12px;width:176.6px;height:1.5px;background:#8c8c8c"></div>
<div class="a" style="left:914.4px;top:460.49px;width:176.6px;height:1.5px;background:#8c8c8c"></div>
<div class="a" style="left:907.4px;top:156.95px;width:7px;height:1.5px;background:#b0b0b0"></div>
<div class="t" id="t48" style="left:907.40px;top:151.60px;font-size:14px;color:#d0d0d0;transform:scaleX(1.18) translateX(-100%);-webkit-text-stroke:0.25px #d0d0d0">8</div>
<div class="a" style="left:907.4px;top:200.31px;width:7px;height:1.5px;background:#b0b0b0"></div>
<div class="t" id="t49" style="left:907.40px;top:194.96px;font-size:14px;color:#d0d0d0;transform:scaleX(1.18) translateX(-100%);-webkit-text-stroke:0.25px #d0d0d0">6</div>
<div class="a" style="left:907.4px;top:243.68px;width:7px;height:1.5px;background:#b0b0b0"></div>
<div class="t" id="t50" style="left:907.40px;top:238.33px;font-size:14px;color:#d0d0d0;transform:scaleX(1.18) translateX(-100%);-webkit-text-stroke:0.25px #d0d0d0">4</div>
<div class="a" style="left:907.4px;top:287.04px;width:7px;height:1.5px;background:#b0b0b0"></div>
<div class="t" id="t51" style="left:907.40px;top:281.69px;font-size:14px;color:#d0d0d0;transform:scaleX(1.18) translateX(-100%);-webkit-text-stroke:0.25px #d0d0d0">2</div>
<div class="a" style="left:907.4px;top:330.40px;width:7px;height:1.5px;background:#b0b0b0"></div>
<div class="t" id="t52" style="left:907.40px;top:325.05px;font-size:14px;color:#d0d0d0;transform:scaleX(1.18) translateX(-100%);-webkit-text-stroke:0.25px #d0d0d0">0</div>
<div class="a" style="left:907.4px;top:373.76px;width:7px;height:1.5px;background:#b0b0b0"></div>
<div class="t" id="t53" style="left:907.40px;top:368.41px;font-size:14px;color:#d0d0d0;transform:scaleX(1.18) translateX(-100%);-webkit-text-stroke:0.25px #d0d0d0">-2</div>
<div class="a" style="left:907.4px;top:417.12px;width:7px;height:1.5px;background:#b0b0b0"></div>
<div class="t" id="t54" style="left:907.40px;top:411.78px;font-size:14px;color:#d0d0d0;transform:scaleX(1.18) translateX(-100%);-webkit-text-stroke:0.25px #d0d0d0">-4</div>
<div class="a" style="left:907.4px;top:460.49px;width:7px;height:1.5px;background:#b0b0b0"></div>
<div class="t" id="t55" style="left:907.40px;top:455.14px;font-size:14px;color:#d0d0d0;transform:scaleX(1.18) translateX(-100%);-webkit-text-stroke:0.25px #d0d0d0">-6</div>
<div class="a" style="left:907.4px;top:503.85px;width:7px;height:1.5px;background:#b0b0b0"></div>
<div class="t" id="t56" style="left:907.40px;top:498.50px;font-size:14px;color:#d0d0d0;transform:scaleX(1.18) translateX(-100%);-webkit-text-stroke:0.25px #d0d0d0">-8</div>
<div class="a" style="left:931.9px;top:184.0px;width:138.7px;height:148.1px;background:linear-gradient(#ffff30,#ffff00 30%,#f2f200 50%,#b8b800 80%,#6a6a00);border:1px solid #000;box-sizing:border-box"></div>
<div class="a" style="left:431px;top:517.3px;width:682px;height:166.5px;background:#000;overflow:hidden"><div class="a" style="left:-34.6px;top:6.5px;width:67.3px;height:122px;border:1.5px solid #d8d8d8;box-sizing:border-box;background:linear-gradient(#6a80b4 50%,#6080a8 50%)"></div>
<div class="t" id="swl0" style="left:-28.00px;top:131.48px;font-size:13.2px;color:#f4f4f4;transform:scaleX(1.0375);-webkit-text-stroke:0.55px #f4f4f4">Blue Sky</div>
<div class="a" style="left:43.7px;top:6.5px;width:67.3px;height:122px;border:1.5px solid #d8d8d8;box-sizing:border-box;background:linear-gradient(#5a6a44 50%,#5a6c44 50%)"></div>
<div class="t" id="swl1" style="left:55.05px;top:131.48px;font-size:13.2px;color:#f4f4f4;transform:scaleX(1.0285);-webkit-text-stroke:0.55px #f4f4f4">Foliage</div>
<div class="a" style="left:122.0px;top:6.5px;width:67.3px;height:122px;border:1.5px solid #d8d8d8;box-sizing:border-box;background:linear-gradient(#8a88c4 50%,#8580b4 50%)"></div>
<div class="t" id="t59" style="left:134.10px;top:131.48px;font-size:13.2px;color:#f4f4f4;-webkit-text-stroke:0.55px #f4f4f4">Blue</div>
<div class="t" id="t60" style="left:134.10px;top:146.48px;font-size:13.2px;color:#f4f4f4;-webkit-text-stroke:0.55px #f4f4f4">Flower</div>
<div class="a" style="left:200.3px;top:6.5px;width:67.3px;height:122px;border:1.5px solid #d8d8d8;box-sizing:border-box;background:linear-gradient(#78bcb2 50%,#66bca8 50%)"></div>
<div class="t" id="t61" style="left:214.90px;top:131.48px;font-size:13.2px;color:#f4f4f4;-webkit-text-stroke:0.55px #f4f4f4">Bluish</div>
<div class="t" id="t62" style="left:214.90px;top:146.48px;font-size:13.2px;color:#f4f4f4;-webkit-text-stroke:0.55px #f4f4f4">Green</div>
<div class="a" style="left:278.6px;top:6.5px;width:67.3px;height:122px;border:1.5px solid #d8d8d8;box-sizing:border-box;background:linear-gradient(#c4801e 50%,#dc782c 50%)"></div>
<div class="t" id="swl4" style="left:289.45px;top:131.48px;font-size:13.2px;color:#f4f4f4;transform:scaleX(1.0341);-webkit-text-stroke:0.55px #f4f4f4">Orange</div>
<div class="a" style="left:356.9px;top:6.5px;width:67.3px;height:122px;border:1.5px solid #d8d8d8;box-sizing:border-box;background:linear-gradient(#5254b0 50%,#4a5aa2 50%)"></div>
<div class="t" id="t64" style="left:365.00px;top:131.48px;font-size:13.2px;color:#f4f4f4;-webkit-text-stroke:0.55px #f4f4f4">Purplish</div>
<div class="t" id="t65" style="left:365.00px;top:146.48px;font-size:13.2px;color:#f4f4f4;-webkit-text-stroke:0.55px #f4f4f4">Blue</div>
<div class="a" style="left:435.2px;top:6.5px;width:67.3px;height:122px;border:1.5px solid #d8d8d8;box-sizing:border-box;background:linear-gradient(#b05868 50%,#c45262 50%)"></div>
<div class="t" id="t66" style="left:437.60px;top:131.48px;font-size:13.2px;color:#f4f4f4;-webkit-text-stroke:0.55px #f4f4f4">Moderate</div>
<div class="t" id="t67" style="left:437.60px;top:146.48px;font-size:13.2px;color:#f4f4f4;-webkit-text-stroke:0.55px #f4f4f4">Red</div>
<div class="a" style="left:513.5px;top:6.5px;width:67.3px;height:122px;border:1.5px solid #d8d8d8;box-sizing:border-box;background:linear-gradient(#5a3870 50%,#623c6e 50%)"></div>
<div class="t" id="swl7" style="left:526.50px;top:131.48px;font-size:13.2px;color:#f4f4f4;transform:scaleX(1.0807);-webkit-text-stroke:0.55px #f4f4f4">Purple</div>
<div class="a" style="left:591.8px;top:6.5px;width:67.3px;height:122px;border:1.5px solid #d8d8d8;box-sizing:border-box;background:linear-gradient(#9cbc38 50%,#a0be40 50%)"></div>
<div class="t" id="t69" style="left:604.75px;top:131.48px;font-size:13.2px;color:#f4f4f4;-webkit-text-stroke:0.55px #f4f4f4">Yellow</div>
<div class="t" id="t70" style="left:604.75px;top:146.48px;font-size:13.2px;color:#f4f4f4;-webkit-text-stroke:0.55px #f4f4f4">Green</div>
<div class="a" style="left:670.1px;top:6.5px;width:67.3px;height:122px;border:1.5px solid #d8d8d8;box-sizing:border-box;background:linear-gradient(#d4b020 50%,#e8a030 50%)"></div>
<div class="t" id="t71" style="left:681.70px;top:131.48px;font-size:13.2px;color:#f4f4f4;-webkit-text-stroke:0.55px #f4f4f4">Orange</div>
<div class="t" id="t72" style="left:681.70px;top:146.48px;font-size:13.2px;color:#f4f4f4;-webkit-text-stroke:0.55px #f4f4f4">Yellow</div></div>
<div class="a" style="left:431px;top:683.5px;width:682px;height:16.5px;background:#636363"></div>
<div class="a" style="left:433px;top:685px;width:16px;height:14px;background:#707070;border-radius:3px"></div>
<svg class="a" style="left:433px;top:685px" width="16" height="14"><path d="M10.5 3 V11 L5 7 Z" fill="#3a3a3a"/></svg>
<div class="a" style="left:638px;top:686px;width:181px;height:11px;background:#484848;border-radius:5.5px"></div>
<div class="a" style="left:1095px;top:685px;width:16px;height:14px;background:#707070;border-radius:3px"></div>
<svg class="a" style="left:1095px;top:685px" width="16" height="14"><path d="M5.5 3 V11 L11 7 Z" fill="#3a3a3a"/></svg>
<div class="a" style="left:1120px;top:125px;width:800px;height:575px;background:#1c1c1c"></div>
<div class="a" style="left:1128px;top:132.5px;width:783px;height:560.5px;background:#333"></div>
<div class="t" id="ciet" style="left:1476.60px;top:139.18px;font-size:14.5px;color:#d8d8d8;transform:scaleX(1.0886);-webkit-text-stroke:0.25px #d8d8d8">CIE 1931 xy</div>
<div class="a" style="left:1161px;top:156.3px;width:747px;height:508.2px;background:#232323;border:2px solid #8c8c8c;box-sizing:border-box"></div>
<div class="a cs" style="left:1162px;top:158px;width:745px;height:505px;filter:blur(1px);clip-path:path('M154.3 501.4C154.3 501.4 154.2 501.4 154.1 501.5C154.0 501.5 153.8 501.5 153.6 501.5C153.5 501.5 153.3 501.5 153.0 501.5C152.7 501.5 152.3 501.4 152.0 501.3C151.6 501.2 151.3 501.1 151.0 500.9C150.6 500.7 150.2 500.5 149.7 500.2C149.2 500.0 148.6 499.6 148.0 499.2C147.3 498.8 146.6 498.4 145.7 497.8C144.9 497.3 144.0 496.8 142.8 496.1C141.7 495.4 140.3 494.6 138.8 493.7C137.3 492.9 135.7 491.9 133.9 490.7C132.0 489.5 130.0 488.3 127.7 486.5C125.4 484.8 123.1 483.2 120.1 480.4C117.2 477.6 113.8 474.3 110.0 469.6C106.2 464.9 102.0 459.7 97.2 452.2C92.3 444.7 87.0 436.0 80.9 424.5C74.9 413.1 67.7 399.9 60.9 383.6C54.1 367.3 46.9 348.1 40.2 326.9C33.6 305.6 26.3 280.5 20.8 256.0C15.3 231.6 10.2 204.7 7.3 180.4C4.4 156.1 2.6 131.6 3.5 110.3C4.3 89.1 7.2 68.7 12.3 52.9C17.5 37.2 25.6 24.1 34.5 15.7C43.4 7.4 54.7 4.0 65.9 2.6C77.0 1.2 89.4 4.4 101.2 7.2C113.1 10.0 125.5 14.9 137.1 19.4C148.8 23.9 159.9 28.9 171.0 34.0C182.1 39.2 192.8 44.7 203.6 50.5C214.3 56.2 225.0 62.3 235.6 68.5C246.3 74.7 256.8 81.2 267.4 87.8C277.9 94.3 288.5 101.1 299.0 107.9C309.6 114.7 320.2 121.6 330.8 128.6C341.3 135.5 351.8 142.6 362.3 149.6C372.8 156.6 383.4 163.6 393.7 170.6C404.1 177.5 414.4 184.5 424.5 191.3C434.6 198.2 444.6 205.0 454.4 211.6C464.1 218.2 473.7 224.7 483.0 230.9C492.3 237.2 501.4 243.3 509.9 249.1C518.5 254.9 526.8 260.6 534.5 265.8C542.2 271.0 549.2 275.7 555.9 280.2C562.6 284.8 568.9 289.1 574.7 292.9C580.4 296.8 585.6 300.2 590.3 303.4C595.0 306.6 599.1 309.4 602.9 312.0C606.7 314.6 610.0 316.8 613.0 318.9C616.1 320.9 618.7 322.6 621.1 324.3C623.5 325.9 625.6 327.3 627.6 328.7C629.6 330.0 631.4 331.2 633.0 332.3C634.6 333.5 635.7 334.2 637.4 335.4C639.2 336.5 642.0 338.4 643.6 339.5C645.3 340.6 646.1 341.2 647.2 341.9C648.3 342.7 649.5 343.5 650.2 344.0C650.9 344.4 651.2 344.6 651.3 344.7Z')"><i style="top:3px;height:3px;background:linear-gradient(90deg,#009c00 58px,#009c00 71px,#009c00 83px)"></i><i style="top:6px;height:3px;background:linear-gradient(90deg,#009c00 51px,#009c00 65px,#009c00 78px,#009c00 92px,#009c00 105px)"></i><i style="top:9px;height:3px;background:linear-gradient(90deg,#009c00 44px,#009c00 58px,#009c00 72px,#009c00 86px,#009c00 100px,#009c00 114px)"></i><i style="top:12px;height:3px;background:linear-gradient(90deg,#009c00 37px,#009c00 51px,#009c00 65px,#009c00 80px,#009c00 94px,#009c00 108px,#009c00 123px)"></i><i style="top:15px;height:3px;background:linear-gradient(90deg,#009c00 31px,#009c00 45px,#009c00 60px,#009c00 74px,#009c00 88px,#009c00 103px,#009c00 117px,#009c00 132px)"></i><i style="top:18px;height:3px;background:linear-gradient(90deg,#009c01 29px,#009c00 43px,#009c00 57px,#009c00 71px,#009c00 85px,#009c00 99px,#009c00 113px,#009c00 126px,#009c00 140px)"></i><i style="top:21px;height:3px;background:linear-gradient(90deg,#009c02 27px,#009c00 41px,#009c00 54px,#009c00 67px,#009c00 81px,#009c00 94px,#009c00 107px,#009c00 121px,#009c00 134px,#009c00 147px)"></i><i style="top:24px;height:3px;background:linear-gradient(90deg,#009c03 26px,#009c01 40px,#009c00 54px,#009c00 69px,#009c00 83px,#009c00 97px,#009c00 111px,#009c00 126px,#009c00 140px,#009c00 154px)"></i><i style="top:27px;height:3px;background:linear-gradient(90deg,#009c03 24px,#009c02 38px,#009c00 51px,#009c00 65px,#009c00 79px,#009c00 93px,#009c00 106px,#009c00 120px,#009c00 134px,#009c00 147px,#009c00 161px)"></i><i style="top:30px;height:3px;background:linear-gradient(90deg,#009c04 22px,#009c03 37px,#009c01 51px,#009c00 66px,#009c00 81px,#009c00 95px,#009c00 110px,#009c00 124px,#009c00 139px,#009c00 154px,#009c00 168px)"></i><i style="top:33px;height:3px;background:linear-gradient(90deg,#009c05 20px,#009c04 34px,#009c02 48px,#009c00 62px,#009c00 77px,#009c00 91px,#009c00 105px,#009c00 119px,#009c00 133px,#009c00 147px,#009c00 161px,#009c00 175px)"></i><i style="top:36px;height:3px;background:linear-gradient(90deg,#009c06 19px,#009c05 32px,#009c03 46px,#009c01 59px,#009c00 73px,#009c00 86px,#009c00 100px,#009c00 113px,#009c00 127px,#009c00 140px,#009c00 154px,#009c00 167px,#009c00 181px)"></i><i style="top:39px;height:3px;background:linear-gradient(90deg,#009c07 17px,#009c05 31px,#009c04 45px,#009c02 59px,#009c00 73px,#009c00 88px,#009c00 102px,#009c00 116px,#009c00 130px,#009c00 144px,#009c00 158px,#009c00 173px,#009c00 187px)"></i><i style="top:42px;height:3px;background:linear-gradient(90deg,#009c08 15px,#009c06 29px,#009c05 42px,#009c03 56px,#009c01 70px,#009c00 83px,#009c00 97px,#009c00 111px,#009c00 124px,#009c00 138px,#009c00 152px,#009c00 165px,#009c00 179px,#009c00 193px)"></i><i style="top:45px;height:3px;background:linear-gradient(90deg,#009c09 13px,#009c07 27px,#009c06 42px,#009c04 56px,#009c02 70px,#009c00 85px,#009c00 99px,#009c00 113px,#009c00 127px,#009c00 142px,#009c00 156px,#009c00 170px,#009c00 184px,#009c00 199px)"></i><i style="top:48px;height:3px;background:linear-gradient(90deg,#009c0a 11px,#009c08 25px,#009c07 39px,#009c05 53px,#009c03 67px,#009c02 80px,#009c00 94px,#009c00 108px,#009c00 122px,#009c00 136px,#009c00 149px,#009c00 163px,#009c00 177px,#009c00 191px,#009c00 205px)"></i><i style="top:51px;height:3px;background:linear-gradient(90deg,#009c0b 10px,#009c09 24px,#009c08 38px,#009c06 53px,#009c04 67px,#009c02 81px,#009c00 96px,#009c00 110px,#009c00 124px,#009c00 139px,#009c00 153px,#009c00 167px,#009c00 182px,#009c00 196px,#009c00 210px)"></i><i style="top:54px;height:3px;background:linear-gradient(90deg,#009c0c 9px,#009c0a 23px,#009c09 36px,#009c07 50px,#009c05 64px,#009c03 78px,#009c02 92px,#009c00 105px,#009c00 119px,#009c00 133px,#009c00 147px,#009c00 160px,#009c00 174px,#009c00 188px,#009c00 202px,#009c00 216px)"></i><i style="top:57px;height:3px;background:linear-gradient(90deg,#009c0d 8px,#009c0b 23px,#009c09 37px,#009c08 51px,#009c06 65px,#009c04 79px,#009c02 93px,#009c00 108px,#009c00 122px,#009c00 136px,#009c00 150px,#009c00 164px,#009c00 178px,#009c00 193px,#009c00 207px,#009c00 221px)"></i><i style="top:60px;height:3px;background:linear-gradient(90deg,#009c0d 8px,#009c0c 22px,#009c0a 35px,#009c09 49px,#009c07 63px,#009c05 76px,#009c03 90px,#009c01 103px,#009c00 117px,#009c00 131px,#009c00 144px,#009c00 158px,#009c00 172px,#009c00 185px,#009c00 199px,#009c00 213px,#009c00 226px)"></i><i style="top:63px;height:3px;background:linear-gradient(90deg,#009c0e 8px,#009c0d 22px,#009c0b 36px,#009c09 50px,#009c08 64px,#009c06 78px,#009c04 92px,#009c02 106px,#009c00 120px,#009c00 134px,#009c00 148px,#009c00 162px,#009c00 176px,#009c00 190px,#009c00 204px,#009c00 218px,#009c00 232px)"></i><i style="top:66px;height:3px;background:linear-gradient(90deg,#009c0f 7px,#009c0e 21px,#009c0c 36px,#009c0a 50px,#009c08 65px,#009c06 79px,#009c04 93px,#009c02 108px,#009c00 122px,#009c00 136px,#009c00 151px,#009c00 165px,#009c00 179px,#009c00 194px,#009c00 208px,#009c00 222px,#009c00 237px)"></i><i style="top:69px;height:3px;background:linear-gradient(90deg,#009c10 7px,#009c0e 20px,#009c0d 34px,#009c0b 48px,#009c09 62px,#009c08 76px,#009c06 90px,#009c04 103px,#009c02 117px,#009c00 131px,#009c00 145px,#009c00 159px,#009c00 173px,#009c00 187px,#009c00 200px,#009c00 214px,#009c00 228px,#009c00 242px)"></i><i style="top:72px;height:3px;background:linear-gradient(90deg,#009c11 6px,#009c0f 20px,#009c0e 34px,#009c0c 49px,#009c0a 63px,#009c08 77px,#009c06 91px,#009c04 105px,#009c02 119px,#009c00 134px,#009c00 148px,#009c00 162px,#009c00 176px,#009c00 190px,#009c00 204px,#009c00 219px,#009c00 233px,#009c00 247px)"></i><i style="top:75px;height:3px;background:linear-gradient(90deg,#009c12 6px,#009c10 19px,#009c0f 33px,#009c0d 47px,#009c0b 60px,#009c09 74px,#009c08 88px,#009c06 101px,#009c04 115px,#009c02 129px,#009c00 142px,#009c00 156px,#009c00 170px,#009c00 183px,#009c00 197px,#009c00 211px,#009c00 224px,#009c00 238px,#009c00 252px)"></i><i style="top:78px;height:3px;background:linear-gradient(90deg,#009c13 5px,#009c11 19px,#009c0f 33px,#009c0e 47px,#009c0c 61px,#009c0a 75px,#009c08 89px,#009c06 103px,#009c04 117px,#009c02 131px,#009c00 145px,#009c00 159px,#009c00 173px,#009c00 187px,#009c00 201px,#009c00 215px,#009c00 229px,#009c00 243px,#009c00 257px)"></i><i style="top:81px;height:3px;background:linear-gradient(90deg,#009c14 5px,#009c12 19px,#009c10 33px,#009c0f 48px,#009c0d 62px,#009c0b 76px,#009c09 90px,#009c07 105px,#009c05 119px,#009c03 133px,#009c01 147px,#009c00 162px,#009c00 176px,#009c00 190px,#009c00 205px,#009c00 219px,#009c00 233px,#009c00 247px,#009c00 262px)"></i><i style="top:84px;height:3px;background:linear-gradient(90deg,#009c15 4px,#009c13 18px,#009c11 32px,#009c10 46px,#009c0e 60px,#009c0c 73px,#009c0a 87px,#009c08 101px,#009c07 115px,#009c05 129px,#009c02 142px,#009c00 156px,#009c00 170px,#009c00 184px,#009c00 198px,#009c00 211px,#009c00 225px,#009c00 239px,#009c00 253px,#009c00 267px)"></i><i style="top:87px;height:3px;background:linear-gradient(90deg,#009c16 4px,#009c14 18px,#009c12 32px,#009c11 46px,#009c0f 60px,#009c0d 74px,#009c0b 88px,#009c09 102px,#009c07 117px,#009c05 131px,#009c03 145px,#009c01 159px,#009c00 173px,#009c00 187px,#009c00 201px,#009c00 215px,#009c00 229px,#009c00 243px,#009c00 257px,#009c00 272px)"></i><i style="top:90px;height:3px;background:linear-gradient(90deg,#009c17 3px,#009c15 18px,#009c13 32px,#009c11 46px,#009c10 61px,#009c0e 75px,#009c0c 90px,#009c0a 104px,#009c08 118px,#009c06 133px,#009c04 147px,#009c01 161px,#009c00 176px,#009c00 190px,#009c00 204px,#009c00 219px,#009c00 233px,#009c00 248px,#009c00 262px,#009c00 276px)"></i><i style="top:93px;height:3px;background:linear-gradient(90deg,#009c18 3px,#009c16 17px,#009c14 31px,#009c13 45px,#009c11 59px,#009c0f 72px,#009c0d 86px,#009c0b 100px,#009c09 114px,#009c07 128px,#009c05 142px,#009c03 156px,#009c01 170px,#009c00 184px,#009c00 198px,#009c00 211px,#009c00 225px,#009c00 239px,#009c00 253px,#009c00 267px,#009c00 281px)"></i><i style="top:96px;height:3px;background:linear-gradient(90deg,#009c19 2px,#009c17 17px,#009c15 31px,#009c13 45px,#009c12 59px,#009c10 73px,#009c0e 87px,#009c0c 102px,#009c0a 116px,#009c08 130px,#009c06 144px,#009c04 158px,#009c01 172px,#009c00 187px,#009c00 201px,#009c00 215px,#009c00 229px,#009c00 243px,#009c00 257px,#009c00 272px,#019c00 286px)"></i><i style="top:99px;height:3px;background:linear-gradient(90deg,#009c1a 2px,#009c18 16px,#009c16 29px,#009c15 43px,#009c13 57px,#009c11 71px,#009c0f 84px,#009c0d 98px,#009c0b 112px,#009c09 126px,#009c07 139px,#009c05 153px,#009c03 167px,#009c01 181px,#009c00 194px,#009c00 208px,#009c00 222px,#009c00 235px,#009c00 249px,#009c00 263px,#009c00 277px,#059c00 290px)"></i><i style="top:102px;height:3px;background:linear-gradient(90deg,#009c1b 2px,#009c19 15px,#009c17 29px,#009c16 43px,#009c14 57px,#009c12 71px,#009c10 85px,#009c0e 99px,#009c0c 113px,#009c0a 127px,#009c08 141px,#009c06 155px,#009c04 169px,#009c01 183px,#009c00 197px,#009c00 211px,#009c00 225px,#009c00 239px,#009c00 253px,#009c00 267px,#009c00 281px,#099c00 295px)"></i><i style="top:105px;height:3px;background:linear-gradient(90deg,#009c1c 1px,#009c1a 15px,#009c18 30px,#009c16 44px,#009c15 58px,#009c13 72px,#009c11 86px,#009c0f 101px,#009c0d 115px,#009c0b 129px,#009c09 143px,#009c07 158px,#009c04 172px,#009c02 186px,#009c00 200px,#009c00 214px,#009c00 229px,#009c00 243px,#009c00 257px,#009c00 271px,#039c00 286px,#0e9c00 300px)"></i><i style="top:108px;height:3px;background:linear-gradient(90deg,#009c1d 1px,#009c1b 14px,#009c19 28px,#009c18 42px,#009c16 56px,#009c14 70px,#009c12 83px,#009c10 97px,#009c0e 111px,#009c0c 125px,#009c0a 139px,#009c08 153px,#009c06 166px,#009c04 180px,#009c02 194px,#009c00 208px,#009c00 222px,#009c00 235px,#009c00 249px,#009c00 263px,#009c00 277px,#089c00 291px,#129c00 305px)"></i><i style="top:111px;height:3px;background:linear-gradient(90deg,#009c1e 1px,#009c1c 15px,#009c1a 29px,#009c19 43px,#009c17 57px,#009c15 71px,#009c13 85px,#009c11 99px,#009c0f 113px,#009c0d 127px,#009c0b 141px,#009c09 155px,#009c07 169px,#009c04 183px,#009c02 197px,#009c00 211px,#009c00 225px,#009c00 239px,#009c00 253px,#009c00 267px,#029c00 281px,#0c9c00 295px,#179c00 309px)"></i><i style="top:114px;height:3px;background:linear-gradient(90deg,#009c1f 1px,#009c1d 15px,#009c1b 29px,#009c1a 43px,#009c18 58px,#009c16 72px,#009c14 86px,#009c12 100px,#009c10 115px,#009c0e 129px,#009c0c 143px,#009c0a 157px,#009c07 171px,#009c05 186px,#009c03 200px,#009c00 214px,#009c00 228px,#009c00 243px,#009c00 257px,#009c00 271px,#069c00 285px,#109c00 299px,#1b9c00 314px)"></i><i style="top:117px;height:3px;background:linear-gradient(90deg,#009c20 1px,#009c1e 15px,#009c1c 29px,#009c1b 42px,#009c19 56px,#009c17 70px,#009c15 84px,#009c13 98px,#009c11 111px,#009c0f 125px,#009c0d 139px,#009c0b 153px,#009c09 167px,#009c07 180px,#009c05 194px,#009c02 208px,#009c00 222px,#009c00 236px,#009c00 249px,#009c00 263px,#019c00 277px,#0b9c00 291px,#159c00 305px,#209c00 318px)"></i><i style="top:120px;height:3px;background:linear-gradient(90deg,#009c21 1px,#009c1f 15px,#009c1d 29px,#009c1c 43px,#009c1a 57px,#009c18 71px,#009c16 85px,#009c14 99px,#009c12 113px,#009c10 127px,#009c0e 141px,#009c0c 155px,#009c0a 169px,#009c07 183px,#009c05 197px,#009c03 211px,#009c00 225px,#009c00 239px,#009c00 253px,#009c00 267px,#049c00 281px,#0f9c00 295px,#1a9c00 309px,#259c00 323px)"></i><i style="top:123px;height:3px;background:linear-gradient(90deg,#009c22 1px,#009c20 15px,#009c1e 30px,#009c1d 44px,#009c1b 58px,#009c19 72px,#009c17 86px,#009c15 101px,#009c13 115px,#009c11 129px,#009c0f 143px,#009c0d 157px,#009c0a 171px,#009c08 186px,#009c06 200px,#009c03 214px,#009c01 228px,#009c00 242px,#009c00 257px,#009c00 271px,#089c00 285px,#139c00 299px,#1f9c00 313px,#2b9c00 328px)"></i><i style="top:126px;height:3px;background:linear-gradient(90deg,#009c23 1px,#009c21 15px,#009c20 29px,#009c1e 43px,#009c1c 57px,#009c1a 70px,#009c18 84px,#009c17 98px,#009c15 112px,#009c13 125px,#009c11 139px,#009c0e 153px,#009c0c 167px,#009c0a 181px,#009c08 194px,#009c05 208px,#009c03 222px,#009c00 236px,#009c00 249px,#009c00 263px,#039c00 277px,#0e9c00 291px,#199c00 305px,#249c00 318px,#309c00 332px)"></i><i style="top:129px;height:3px;background:linear-gradient(90deg,#009c24 2px,#009c22 16px,#009c21 29px,#009c1f 43px,#009c1d 57px,#009c1b 71px,#009c19 85px,#009c18 99px,#009c16 113px,#009c13 127px,#009c11 141px,#009c0f 155px,#009c0d 169px,#009c0b 183px,#009c08 197px,#009c06 211px,#009c03 225px,#009c01 239px,#009c00 253px,#009c00 267px,#079c00 281px,#129c00 295px,#1e9c00 309px,#2a9c00 323px,#369c00 337px)"></i><i style="top:132px;height:3px;background:linear-gradient(90deg,#009c25 2px,#009c23 16px,#009c22 30px,#009c20 44px,#009c1e 58px,#009c1c 72px,#009c1a 87px,#009c18 101px,#009c16 115px,#009c14 129px,#009c12 143px,#009c10 157px,#009c0e 171px,#009c0b 186px,#009c09 200px,#009c06 214px,#009c04 228px,#009c01 242px,#009c00 256px,#009c00 270px,#0b9c00 285px,#179c00 299px,#239c00 313px,#2f9c00 327px,#3c9c00 341px)"></i><i style="top:135px;height:3px;background:linear-gradient(90deg,#009c26 2px,#009c24 16px,#009c23 29px,#009c21 43px,#009c1f 57px,#009c1e 71px,#009c1c 84px,#009c1a 98px,#009c18 112px,#009c16 126px,#009c14 139px,#009c12 153px,#009c10 167px,#009c0d 181px,#009c0b 194px,#009c09 208px,#009c06 222px,#009c03 236px,#009c01 249px,#009c00 263px,#069c00 277px,#119c00 291px,#1d9c00 304px,#299c00 318px,#359c00 332px,#429c00 346px)"></i><i style="top:138px;height:3px;background:linear-gradient(90deg,#009c27 2px,#009c26 16px,#009c24 30px,#009c22 44px,#009c20 58px,#009c1f 72px,#009c1d 86px,#009c1b 100px,#009c19 113px,#009c17 127px,#009c15 141px,#009c13 155px,#009c10 169px,#009c0e 183px,#009c0c 197px,#009c09 211px,#009c07 225px,#009c04 239px,#009c01 253px,#009c00 267px,#0a9c00 281px,#169c00 294px,#219c00 308px,#2e9c00 322px,#3b9c00 336px,#489c00 350px)"></i><i style="top:141px;height:3px;background:linear-gradient(90deg,#009c28 2px,#009c27 16px,#009c25 30px,#009c23 45px,#009c22 59px,#009c20 73px,#009c1e 87px,#009c1c 101px,#009c1a 115px,#009c18 129px,#009c16 143px,#009c14 157px,#009c11 171px,#009c0f 186px,#009c0c 200px,#009c0a 214px,#009c07 228px,#009c05 242px,#009c02 256px,#039c00 270px,#0e9c00 284px,#1a9c00 298px,#269c00 312px,#339c00 326px,#409c00 341px,#4e9c00 355px)"></i><i style="top:144px;height:3px;background:linear-gradient(90deg,#009c2a 2px,#009c28 17px,#009c26 31px,#009c24 45px,#009c23 59px,#009c21 74px,#009c1f 88px,#009c1d 102px,#009c1b 117px,#009c19 131px,#009c17 145px,#009c14 159px,#009c12 174px,#009c10 188px,#009c0d 202px,#009c0b 216px,#009c08 231px,#009c05 245px,#009c02 259px,#009c01 265px,#049c00 270px,#079c00 274px,#129c00 288px,#1f9c00 302px,#2b9c00 316px,#399c00 331px,#479c00 345px,#559c00 359px)"></i><i style="top:147px;height:3px;background:linear-gradient(90deg,#009c2b 3px,#009c29 16px,#009c27 30px,#009c26 44px,#009c24 58px,#009c22 72px,#009c20 86px,#009c1f 100px,#009c1d 114px,#009c1b 128px,#009c18 141px,#009c16 155px,#009c14 169px,#009c12 183px,#009c0f 197px,#009c0d 211px,#009c0a 225px,#009c08 239px,#009c05 253px,#009c02 264px,#029c02 266px,#099c00 276px,#0d9c00 280px,#199c00 294px,#259c00 308px,#329c00 322px,#409c00 336px,#4e9c00 350px,#5c9c00 364px)"></i><i style="top:150px;height:3px;background:linear-gradient(90deg,#009c2c 3px,#009c2a 17px,#009c29 31px,#009c27 45px,#009c25 59px,#009c23 73px,#009c21 87px,#009c20 101px,#009c1e 115px,#009c1c 129px,#009c19 143px,#009c17 157px,#009c15 171px,#009c13 185px,#009c10 200px,#009c0e 214px,#009c0b 228px,#009c08 242px,#009c05 256px,#009c04 263px,#069c02 270px,#0f9c00 281px,#129c00 284px,#1e9c00 298px,#2b9c00 312px,#389c00 326px,#469c00 340px,#549c00 354px,#639c00 368px)"></i><i style="top:153px;height:3px;background:linear-gradient(90deg,#009c2d 3px,#009c2c 17px,#009c2a 31px,#009c28 46px,#009c26 60px,#009c25 74px,#009c23 88px,#009c21 102px,#009c1f 117px,#009c1d 131px,#009c1a 145px,#009c18 159px,#009c16 174px,#009c13 188px,#009c11 202px,#009c0e 216px,#009c0c 230px,#009c09 245px,#009c06 259px,#009c05 261px,#159c00 287px,#169c00 287px,#229c00 302px,#309c00 316px,#3e9c00 330px,#4c9c00 344px,#5b9c00 358px,#6b9c00 373px)"></i><i style="top:156px;height:3px;background:linear-gradient(90deg,#009c2e 3px,#009c2d 17px,#009c2b 31px,#009c2a 45px,#009c28 58px,#009c26 72px,#009c24 86px,#009c22 100px,#009c20 114px,#009c1e 128px,#009c1c 142px,#009c1a 155px,#009c18 169px,#009c16 183px,#009c13 197px,#009c11 211px,#009c0e 225px,#009c0b 239px,#009c09 252px,#009c07 260px,#059c06 266px,#1c9c00 292px,#1d9c00 294px,#2a9c00 308px,#379c00 322px,#459c00 336px,#549c00 349px,#639c00 363px,#739c00 377px)"></i><i style="top:159px;height:3px;background:linear-gradient(90deg,#009c30 3px,#009c2e 17px,#009c2c 31px,#009c2b 45px,#009c29 59px,#009c27 73px,#009c25 87px,#009c23 101px,#009c21 115px,#009c1f 129px,#009c1d 143px,#009c1b 157px,#009c19 171px,#009c16 185px,#009c14 199px,#009c12 213px,#009c0f 227px,#009c0c 241px,#009c09 255px,#009c09 259px,#229c00 298px,#229c00 298px,#2f9c00 312px,#3d9c00 326px,#4b9c00 340px,#5a9c00 354px,#6a9c00 368px,#7b9c00 382px)"></i><i style="top:162px;height:3px;background:linear-gradient(90deg,#009c31 3px,#009c2f 18px,#009c2e 32px,#009c2c 46px,#009c2a 60px,#009c28 74px,#009c27 88px,#009c25 103px,#009c23 117px,#009c21 131px,#009c1e 145px,#009c1c 159px,#009c1a 173px,#009c17 188px,#009c15 202px,#009c12 216px,#009c10 230px,#009c0d 244px,#009c0a 258px,#019c0a 259px,#279c01 301px,#299c00 303px,#349c00 315px,#439c00 329px,#529c00 344px,#629c00 358px,#729c00 372px,#849c00 386px)"></i><i style="top:165px;height:3px;background:linear-gradient(90deg,#009c32 4px,#009c31 17px,#009c2f 31px,#009c2d 45px,#009c2c 59px,#009c2a 73px,#009c28 86px,#009c26 100px,#009c24 114px,#009c22 128px,#009c20 142px,#009c1e 156px,#009c1c 169px,#009c1a 183px,#009c17 197px,#009c15 211px,#009c12 225px,#009c0f 239px,#009c0d 252px,#009c0c 256px,#2f9c00 308px,#309c00 309px,#3c9c00 321px,#4b9c00 335px,#5a9c00 349px,#6a9c00 363px,#7b9c00 377px,#8d9c00 391px)"></i><i style="top:168px;height:3px;background:linear-gradient(90deg,#009c34 4px,#009c32 18px,#009c30 32px,#009c2f 46px,#009c2d 60px,#009c2b 74px,#009c29 88px,#009c28 102px,#009c26 116px,#009c24 129px,#009c21 143px,#009c1f 157px,#009c1d 171px,#009c1b 185px,#009c18 199px,#009c16 213px,#009c13 227px,#009c10 241px,#009c0e 255px,#009c0d 255px,#349c01 311px,#379c00 315px,#429c00 325px,#519c00 339px,#619c00 353px,#729c00 367px,#849c00 381px,#969c00 395px)"></i><i style="top:171px;height:3px;background:linear-gradient(90deg,#009c35 4px,#009c33 18px,#009c32 32px,#009c30 46px,#009c2e 60px,#009c2d 75px,#009c2b 89px,#009c29 103px,#009c27 117px,#009c25 131px,#009c23 145px,#009c20 159px,#009c1e 173px,#009c1c 188px,#009c19 202px,#009c17 216px,#009c14 230px,#009c11 244px,#009c0f 254px,#049c0e 258px,#399c01 315px,#3f9c00 320px,#489c00 329px,#589c00 343px,#699c00 357px,#7a9c00 371px,#8c9c00 385px,#9c9700 400px)"></i><i style="top:174px;height:3px;background:linear-gradient(90deg,#009c36 4px,#009c35 18px,#009c33 32px,#009c32 45px,#009c30 59px,#009c2e 73px,#009c2c 87px,#009c2b 101px,#009c29 114px,#009c27 128px,#009c25 142px,#009c22 156px,#009c20 170px,#009c1e 183px,#009c1c 197px,#009c19 211px,#009c17 225px,#009c14 238px,#009c11 252px,#009c11 253px,#429c01 321px,#479c00 326px,#519c00 335px,#619c00 349px,#729c00 363px,#849c00 376px,#969c00 390px,#9c8e00 404px)"></i><i style="top:177px;height:3px;background:linear-gradient(90deg,#009c38 4px,#009c36 18px,#009c35 32px,#009c33 46px,#009c31 60px,#009c30 74px,#009c2e 88px,#009c2c 102px,#009c2a 116px,#009c28 130px,#009c26 144px,#009c24 158px,#009c21 171px,#009c1f 185px,#009c1d 199px,#009c1a 213px,#009c18 227px,#009c15 241px,#009c13 252px,#039c12 255px,#489c02 325px,#509c00 331px,#589c00 339px,#699c00 353px,#7a9c00 367px,#8d9c00 381px,#9c9700 395px,#9c8600 408px)"></i><i style="top:180px;height:3px;background:linear-gradient(90deg,#009c39 4px,#009c38 19px,#009c36 33px,#009c34 47px,#009c33 61px,#009c31 75px,#009c2f 89px,#009c2d 103px,#009c2b 117px,#009c29 131px,#009c27 145px,#009c25 159px,#009c23 173px,#009c20 188px,#009c1e 202px,#009c1b 216px,#009c19 230px,#009c16 244px,#009c15 250px,#079c13 258px,#589c00 337px,#5f9c00 342px,#719c00 357px,#839c00 371px,#969c00 385px,#9c8e00 399px,#9c7e00 413px)"></i><i style="top:183px;height:3px;background:linear-gradient(90deg,#009c3b 5px,#009c39 19px,#009c37 33px,#009c36 48px,#009c34 62px,#009c32 76px,#009c30 90px,#009c2f 105px,#009c2d 119px,#009c2b 133px,#009c28 147px,#009c26 161px,#009c24 176px,#009c21 190px,#009c1f 204px,#009c1c 218px,#009c1a 233px,#009c17 247px,#009c16 249px,#629c00 342px,#669c00 346px,#799c00 360px,#8c9c00 375px,#9c9700 389px,#9c8500 403px,#9c7700 417px)"></i><i style="top:186px;height:3px;background:linear-gradient(90deg,#009c3c 6px,#009c3b 19px,#009c39 33px,#009c37 47px,#009c36 61px,#009c34 75px,#009c32 89px,#009c30 103px,#009c2e 117px,#009c2c 130px,#009c2a 144px,#009c28 158px,#009c26 172px,#009c24 186px,#009c21 200px,#009c1f 214px,#009c1c 228px,#009c1a 241px,#009c18 248px,#079c17 255px,#6b9c00 348px,#719c00 352px,#849c00 366px,#979c00 380px,#9c8d00 394px,#9c7d00 408px,#9c7000 422px)"></i><i style="top:189px;height:3px;background:linear-gradient(90deg,#009c3e 6px,#009c3c 20px,#009c3a 34px,#009c39 48px,#009c37 62px,#009c35 76px,#009c34 90px,#009c32 104px,#009c30 118px,#009c2e 132px,#009c2c 146px,#009c2a 160px,#009c27 174px,#009c25 188px,#009c23 202px,#009c20 216px,#009c1d 230px,#009c1b 244px,#009c1a 247px,#769c00 353px,#799c00 356px,#8d9c00 370px,#9c9600 384px,#9c8400 398px,#9c7600 412px,#9c6900 426px)"></i><i style="top:192px;height:3px;background:linear-gradient(90deg,#009c3f 7px,#009c3e 21px,#009c3c 35px,#009c3a 49px,#009c39 63px,#009c37 77px,#009c35 91px,#009c33 106px,#009c31 120px,#009c2f 134px,#009c2d 148px,#009c2b 162px,#009c29 176px,#009c26 190px,#009c24 205px,#009c21 219px,#009c1f 233px,#009c1c 245px,#019c1c 247px,#819c00 359px,#829c00 360px,#969c00 374px,#9c8d00 388px,#9c7d00 402px,#9c6f00 417px,#9c6300 431px)"></i><i style="top:195px;height:3px;background:linear-gradient(90deg,#009c41 7px,#009c3f 21px,#009c3e 35px,#009c3c 49px,#009c3a 62px,#009c39 76px,#009c37 90px,#009c35 104px,#009c33 118px,#009c31 131px,#009c2f 145px,#009c2d 159px,#009c2b 173px,#009c29 187px,#009c26 200px,#009c24 214px,#009c21 228px,#009c1f 242px,#009c1e 244px,#8c9c00 365px,#8e9c00 366px,#9c9500 380px,#9c8300 394px,#9c7400 407px,#9c6800 421px,#9c5e00 435px)"></i><i style="top:198px;height:3px;background:linear-gradient(90deg,#009c42 8px,#009c41 22px,#009c3f 36px,#009c3e 49px,#009c3c 63px,#009c3a 77px,#009c39 91px,#009c37 105px,#009c35 119px,#009c33 133px,#009c31 147px,#009c2f 161px,#009c2c 175px,#009c2a 189px,#009c28 203px,#009c25 217px,#009c23 231px,#009c20 243px,#019c20 245px,#989c00 370px,#989c00 370px,#9c8c00 384px,#9c7b00 398px,#9c6e00 412px,#9c6200 426px,#9c5800 440px)"></i><i style="top:201px;height:3px;background:linear-gradient(90deg,#009c44 8px,#009c42 22px,#009c41 36px,#009c3f 50px,#009c3e 64px,#009c3c 79px,#009c3a 93px,#009c38 107px,#009c36 121px,#009c34 135px,#009c32 149px,#009c30 163px,#009c2e 177px,#009c2c 191px,#009c29 205px,#009c27 219px,#009c24 233px,#009c22 242px,#059c21 247px,#9c9601 374px,#9c9300 376px,#9c8300 388px,#9c7400 402px,#9c6700 416px,#9c5c00 430px,#9c5300 444px)"></i><i style="top:204px;height:3px;background:linear-gradient(90deg,#009c45 9px,#009c44 23px,#009c42 37px,#009c41 51px,#009c3f 65px,#009c3d 80px,#009c3c 94px,#009c3a 108px,#009c38 122px,#009c36 136px,#009c34 151px,#009c32 165px,#009c2f 179px,#009c2d 193px,#009c2b 207px,#009c28 221px,#009c25 236px,#009c24 241px,#9c8d01 377px,#9c8800 381px,#9c7c00 392px,#9c6d00 406px,#9c6100 420px,#9c5700 434px,#9c4e00 448px)"></i><i style="top:207px;height:3px;background:linear-gradient(90deg,#009c47 9px,#009c46 23px,#009c44 37px,#009c43 51px,#009c41 65px,#009c3f 79px,#009c3e 92px,#009c3c 106px,#009c3a 120px,#009c38 134px,#009c36 148px,#009c34 162px,#009c32 176px,#009c30 189px,#009c2d 203px,#009c2b 217px,#009c28 231px,#009c27 239px,#069c26 245px,#9c8101 384px,#9c7e00 387px,#9c7200 397px,#9c6600 411px,#9c5b00 425px,#9c5200 439px,#9c4a00 453px)"></i><i style="top:210px;height:3px;background:linear-gradient(90deg,#009c49 10px,#009c47 24px,#009c46 38px,#009c44 52px,#009c43 66px,#009c41 80px,#009c3f 94px,#009c3e 108px,#009c3c 122px,#009c3a 136px,#009c38 150px,#009c36 164px,#009c34 178px,#009c31 192px,#009c2f 206px,#009c2c 220px,#009c2a 234px,#009c29 238px,#9c7a01 387px,#9c7400 392px,#9c6c00 401px,#9c6000 415px,#9c5600 429px,#9c4d00 443px,#9c4600 457px)"></i><i style="top:213px;height:3px;background:linear-gradient(90deg,#009c4b 10px,#009c49 24px,#009c48 39px,#009c46 53px,#009c45 67px,#009c43 81px,#009c41 95px,#009c3f 109px,#009c3e 123px,#009c3c 137px,#009c3a 151px,#009c37 166px,#009c35 180px,#009c33 194px,#009c31 208px,#009c2e 222px,#009c2b 236px,#009c2b 237px,#9c7302 391px,#9c6c00 398px,#9c6500 405px,#9c5a00 419px,#9c5100 433px,#9c4900 448px,#9c4100 462px)"></i><i style="top:216px;height:3px;background:linear-gradient(90deg,#009c4c 11px,#009c4b 25px,#009c4a 39px,#009c48 52px,#009c47 66px,#009c45 80px,#009c43 94px,#009c42 107px,#009c40 121px,#009c3e 135px,#009c3c 149px,#009c3a 163px,#009c38 176px,#009c36 190px,#009c33 204px,#009c31 218px,#009c2e 232px,#009c2e 236px,#9c6a02 397px,#9c6400 404px,#9c5e00 411px,#9c5400 425px,#9c4c00 439px,#9c4400 452px,#9c3e00 466px)"></i><i style="top:219px;height:3px;background:linear-gradient(90deg,#009c4e 11px,#009c4d 25px,#009c4b 39px,#009c4a 53px,#009c48 67px,#009c47 81px,#009c45 95px,#009c43 109px,#009c42 123px,#009c40 137px,#009c3e 151px,#009c3c 164px,#009c3a 178px,#009c37 192px,#009c35 206px,#009c33 220px,#009c30 234px,#009c30 234px,#9c5d00 409px,#9c5900 415px,#9c4f00 429px,#9c4700 443px,#9c4000 457px,#9c3a00 471px)"></i><i style="top:222px;height:3px;background:linear-gradient(90deg,#009c50 12px,#009c4f 26px,#009c4d 40px,#009c4c 54px,#009c4a 68px,#009c49 82px,#009c47 96px,#009c45 110px,#009c43 124px,#009c42 138px,#009c40 152px,#009c3e 166px,#009c3b 180px,#009c39 194px,#009c37 208px,#009c34 222px,#009c32 233px,#039c32 236px,#9c5600 415px,#9c5300 419px,#9c4b00 433px,#9c4300 447px,#9c3c00 461px,#9c3600 475px)"></i><i style="top:225px;height:3px;background:linear-gradient(90deg,#009c52 13px,#009c51 27px,#009c4f 41px,#009c4e 55px,#009c4c 69px,#009c4b 83px,#009c49 97px,#009c47 112px,#009c45 126px,#009c44 140px,#009c42 154px,#009c40 168px,#009c3d 182px,#009c3b 196px,#009c39 211px,#009c36 225px,#009c35 232px,#079c34 239px,#9c5000 420px,#9c4f00 423px,#9c4600 437px,#9c3f00 451px,#9c3900 465px,#9c3300 479px)"></i><i style="top:228px;height:3px;background:linear-gradient(90deg,#009c54 13px,#009c53 27px,#009c51 41px,#009c50 55px,#009c4e 68px,#009c4d 82px,#009c4b 96px,#009c4a 110px,#009c48 124px,#009c46 138px,#009c44 152px,#009c42 165px,#009c40 179px,#009c3e 193px,#009c3c 207px,#009c39 221px,#009c38 231px,#049c37 235px,#9c4a00 426px,#9c4900 428px,#9c4100 442px,#9c3b00 456px,#9c3500 470px,#9c3000 484px)"></i><i style="top:231px;height:3px;background:linear-gradient(90deg,#009c56 14px,#009c55 28px,#009c53 42px,#009c52 55px,#009c50 69px,#009c4f 83px,#009c4d 97px,#009c4c 111px,#009c4a 125px,#009c48 139px,#009c46 153px,#009c44 167px,#009c42 181px,#009c40 195px,#009c3e 209px,#009c3b 223px,#009c3a 229px,#089c39 237px,#9c4500 431px,#9c4500 432px,#9c3d00 446px,#9c3700 460px,#9c3200 474px,#9c2d00 488px)"></i><i style="top:234px;height:3px;background:linear-gradient(90deg,#009c58 14px,#009c57 28px,#009c55 42px,#009c54 56px,#009c52 70px,#009c51 85px,#009c4f 99px,#009c4e 113px,#009c4c 127px,#009c4a 141px,#009c48 155px,#009c46 169px,#009c44 183px,#009c42 197px,#009c40 211px,#009c3e 225px,#009c3d 228px,#9c4000 436px,#9c4000 437px,#9c3a00 451px,#9c3400 465px,#9c2e00 479px,#9c2a00 493px)"></i><i style="top:237px;height:3px;background:linear-gradient(90deg,#009c5a 15px,#009c59 29px,#009c57 43px,#009c56 57px,#009c55 71px,#009c53 86px,#009c52 100px,#009c50 114px,#009c4e 128px,#009c4c 142px,#009c4b 157px,#009c49 171px,#009c47 185px,#009c44 199px,#009c42 213px,#009c40 227px,#019c40 228px,#9c3c00 440px,#9c3b00 443px,#9c3600 455px,#9c3000 469px,#9c2b00 483px,#9c2700 497px)"></i><i style="top:240px;height:3px;background:linear-gradient(90deg,#009c5c 15px,#009c5b 29px,#009c5a 43px,#009c58 57px,#009c57 71px,#009c56 85px,#009c54 99px,#009c53 113px,#009c51 126px,#009c4f 140px,#009c4d 154px,#009c4c 168px,#009c4a 182px,#009c48 196px,#009c45 210px,#009c43 224px,#009c43 226px,#9c3800 446px,#9c3700 448px,#9c3200 460px,#9c2d00 474px,#9c2800 488px,#9c2400 502px)"></i><i style="top:243px;height:3px;background:linear-gradient(90deg,#009c5e 16px,#009c5d 30px,#009c5c 44px,#009c5b 58px,#009c59 72px,#009c58 86px,#009c56 100px,#009c55 114px,#009c53 128px,#009c52 142px,#009c50 156px,#009c4e 170px,#009c4c 184px,#009c4a 198px,#009c48 212px,#009c46 225px,#029c45 226px,#9c3401 450px,#9c3300 454px,#9c2f00 464px,#9c2a00 478px,#9c2600 492px,#9c2200 506px)"></i><i style="top:246px;height:3px;background:linear-gradient(90deg,#009c61 16px,#009c5f 30px,#009c5e 45px,#009c5d 59px,#009c5c 73px,#009c5a 87px,#009c59 101px,#009c57 115px,#009c56 129px,#009c54 143px,#009c52 158px,#009c50 172px,#009c4e 186px,#009c4c 200px,#009c4a 214px,#009c49 223px,#069c48 228px,#9c3101 454px,#9c2f00 459px,#9c2c00 468px,#9c2700 482px,#9c2300 496px,#9c1f00 511px)"></i><i style="top:249px;height:3px;background:linear-gradient(90deg,#009c63 17px,#009c62 31px,#009c61 45px,#009c5f 58px,#009c5e 72px,#009c5d 86px,#009c5b 100px,#009c5a 114px,#009c58 128px,#009c57 141px,#009c55 155px,#009c53 169px,#009c52 183px,#009c50 197px,#009c4e 211px,#009c4c 222px,#039c4b 224px,#9c2d01 460px,#9c2b00 465px,#9c2800 473px,#9c2400 487px,#9c2000 501px,#9c1d00 515px)"></i><i style="top:252px;height:3px;background:linear-gradient(90deg,#009c65 17px,#009c64 31px,#009c63 45px,#009c62 59px,#009c61 73px,#009c5f 87px,#009c5e 101px,#009c5c 115px,#009c5b 129px,#009c59 143px,#009c58 157px,#009c56 171px,#009c54 185px,#009c52 199px,#009c50 213px,#009c4f 221px,#079c4e 227px,#9c2a01 464px,#9c2800 470px,#9c2600 478px,#9c2200 492px,#9c1e00 505px,#9c1a00 519px)"></i><i style="top:255px;height:3px;background:linear-gradient(90deg,#009c68 18px,#009c67 32px,#009c65 46px,#009c64 60px,#009c63 74px,#009c62 88px,#009c60 102px,#009c5f 116px,#009c5e 130px,#009c5c 144px,#009c5a 158px,#009c59 173px,#009c57 187px,#009c55 201px,#009c53 215px,#009c52 220px,#9c2500 476px,#9c2300 482px,#9c1f00 496px,#9c1b00 510px,#9c1800 524px)"></i><i style="top:258px;height:3px;background:linear-gradient(90deg,#009c6a 19px,#009c69 33px,#009c68 47px,#009c67 61px,#009c66 75px,#009c64 90px,#009c63 104px,#009c62 118px,#009c60 132px,#009c5f 146px,#009c5d 160px,#009c5c 174px,#009c5a 189px,#009c58 203px,#009c56 217px,#009c56 218px,#9c2200 481px,#9c2000 486px,#9c1d00 500px,#9c1900 514px,#9c1600 528px)"></i><i style="top:261px;height:3px;background:linear-gradient(90deg,#009c6d 20px,#009c6c 33px,#009c6b 47px,#009c6a 61px,#009c68 75px,#009c67 89px,#009c66 103px,#009c65 117px,#009c63 131px,#009c62 144px,#009c61 158px,#009c5f 172px,#009c5d 186px,#009c5c 200px,#009c5a 214px,#009c59 217px,#9c1f00 487px,#9c1e00 491px,#9c1a00 505px,#9c1700 519px,#9c1400 533px)"></i><i style="top:264px;height:3px;background:linear-gradient(90deg,#009c6f 20px,#009c6e 34px,#009c6d 48px,#009c6c 62px,#009c6b 76px,#009c6a 90px,#009c69 104px,#009c68 118px,#009c66 132px,#009c65 146px,#009c63 160px,#009c62 174px,#009c60 188px,#009c5f 202px,#009c5d 216px,#009c5d 216px,#9c1c00 493px,#9c1b00 495px,#9c1800 509px,#9c1500 523px,#9c1200 537px)"></i><i style="top:267px;height:3px;background:linear-gradient(90deg,#009c72 21px,#009c71 35px,#009c70 49px,#009c6f 63px,#009c6e 77px,#009c6d 92px,#009c6c 106px,#009c6b 120px,#009c69 134px,#009c68 148px,#009c67 162px,#009c65 176px,#009c64 190px,#009c62 204px,#009c61 215px,#049c60 218px,#9c1900 498px,#9c1900 499px,#9c1600 513px,#9c1300 527px,#9c1000 542px)"></i><i style="top:270px;height:3px;background:linear-gradient(90deg,#009c75 22px,#009c74 36px,#009c73 50px,#009c72 65px,#009c71 79px,#009c70 93px,#009c6f 107px,#009c6e 121px,#009c6c 135px,#009c6b 150px,#009c6a 164px,#009c68 178px,#009c67 192px,#009c65 206px,#009c64 214px,#099c64 220px,#9c1700 503px,#9c1700 504px,#9c1400 518px,#9c1100 532px,#9c0e00 546px)"></i><i style="top:273px;height:3px;background:linear-gradient(90deg,#009c77 23px,#009c77 37px,#009c76 51px,#009c75 65px,#009c74 78px,#009c73 92px,#009c72 106px,#009c71 120px,#009c70 134px,#009c6f 148px,#009c6d 162px,#009c6c 176px,#009c6b 189px,#009c69 203px,#009c68 212px,#079c68 217px,#9c1400 509px,#9c1400 509px,#9c1100 523px,#9c0f00 537px,#9c0d00 550px)"></i><i style="top:276px;height:3px;background:linear-gradient(90deg,#009c7a 24px,#009c79 38px,#009c79 52px,#009c78 66px,#009c77 80px,#009c76 94px,#009c75 108px,#009c74 122px,#009c73 136px,#009c72 150px,#009c71 163px,#009c70 177px,#009c6e 191px,#009c6d 205px,#009c6c 211px,#9c1200 513px,#9c1200 515px,#9c0f00 527px,#9c0d00 541px,#9c0b00 555px)"></i><i style="top:279px;height:3px;background:linear-gradient(90deg,#009c7d 25px,#009c7d 39px,#009c7c 53px,#009c7b 67px,#009c7a 81px,#009c79 95px,#009c79 109px,#009c78 123px,#009c77 137px,#009c76 151px,#009c75 165px,#009c73 179px,#009c72 193px,#009c71 207px,#009c71 210px,#9c1000 517px,#9c1000 520px,#9c0e00 531px,#9c0b00 545px,#9c0900 559px)"></i><i style="top:282px;height:3px;background:linear-gradient(90deg,#009c80 25px,#009c80 40px,#009c7f 54px,#009c7e 68px,#009c7e 82px,#009c7d 96px,#009c7c 110px,#009c7b 125px,#009c7a 139px,#009c79 153px,#009c78 167px,#009c77 181px,#009c76 195px,#009c75 209px,#019c75 210px,#9c0e01 521px,#9c0d00 526px,#9c0c00 535px,#9c0a00 550px,#9c0800 564px)"></i><i style="top:285px;height:3px;background:linear-gradient(90deg,#009c83 26px,#009c83 40px,#009c82 54px,#009c82 68px,#009c81 82px,#009c80 96px,#009c80 110px,#009c7f 123px,#009c7e 137px,#009c7d 151px,#009c7c 165px,#009c7b 179px,#009c7a 193px,#009c79 207px,#009c79 207px,#9c0c01 526px,#9c0b00 532px,#9c0a00 540px,#9c0800 554px,#9c0600 568px)"></i><i style="top:288px;height:3px;background:linear-gradient(90deg,#009c87 27px,#009c86 41px,#009c86 55px,#009c85 69px,#009c85 83px,#009c84 97px,#009c83 111px,#009c83 125px,#009c82 139px,#009c81 153px,#009c80 167px,#009c80 181px,#009c7f 195px,#009c7e 206px,#049c7e 209px,#9c0a01 531px,#9c0900 537px,#9c0800 545px,#9c0600 559px,#9c0400 573px)"></i><i style="top:291px;height:3px;background:linear-gradient(90deg,#009c8a 28px,#009c8a 42px,#009c89 56px,#009c89 70px,#009c88 84px,#009c88 98px,#009c87 112px,#009c87 126px,#009c86 140px,#009c85 155px,#009c85 169px,#009c84 183px,#009c83 197px,#009c83 205px,#099c82 211px,#9c0901 535px,#9c0800 543px,#9c0700 549px,#9c0500 563px,#9c0300 577px)"></i><i style="top:294px;height:3px;background:linear-gradient(90deg,#009c8d 29px,#009c8d 43px,#009c8d 57px,#009c8c 71px,#009c8c 85px,#009c8c 100px,#009c8b 114px,#009c8b 128px,#009c8a 142px,#009c8a 156px,#009c89 170px,#009c89 185px,#009c88 199px,#009c88 204px,#9c0600 548px,#9c0500 553px,#9c0300 567px,#9c0200 581px)"></i><i style="top:297px;height:3px;background:linear-gradient(90deg,#009c91 29px,#009c91 43px,#009c90 57px,#009c90 71px,#009c90 85px,#009c90 99px,#009c8f 113px,#009c8f 127px,#009c8f 141px,#009c8e 155px,#009c8e 169px,#009c8d 183px,#009c8d 196px,#009c8d 202px,#0c9c8d 210px,#9c0400 554px,#9c0300 558px,#9c0200 572px,#9c0000 586px)"></i><i style="top:300px;height:3px;background:linear-gradient(90deg,#009c95 30px,#009c94 44px,#009c94 58px,#009c94 72px,#009c94 86px,#009c94 100px,#009c94 114px,#009c93 128px,#009c93 142px,#009c93 156px,#009c93 170px,#009c92 184px,#009c92 198px,#009c92 201px,#9c0200 559px,#9c0200 562px,#9c0000 576px,#9c0000 590px)"></i><i style="top:303px;height:3px;background:linear-gradient(90deg,#009c98 31px,#009c98 45px,#009c98 59px,#009c98 73px,#009c98 87px,#009c98 102px,#009c98 116px,#009c98 130px,#009c98 144px,#009c98 158px,#009c98 172px,#009c98 186px,#009c98 200px,#009c98 200px,#9c0100 565px,#9c0000 567px,#9c0000 581px,#9c0000 595px)"></i><i style="top:306px;height:3px;background:linear-gradient(90deg,#009b9c 32px,#009b9c 46px,#009b9c 60px,#009b9c 73px,#009b9c 87px,#009a9c 101px,#009a9c 115px,#009a9c 129px,#009a9c 143px,#009a9c 156px,#009a9c 170px,#009a9c 184px,#009a9c 198px,#009a9c 199px,#9c0101 558px,#9c0001 563px,#9c0000 572px,#9c0000 585px,#9c0000 599px)"></i><i style="top:309px;height:3px;background:linear-gradient(90deg,#00979c 33px,#00979c 47px,#00979c 61px,#00969c 75px,#00969c 88px,#00969c 102px,#00969c 116px,#00969c 130px,#00959c 144px,#00959c 158px,#00959c 172px,#00949c 186px,#00949c 198px,#04949c 200px,#9c0103 548px,#9c0002 555px,#9c0002 562px,#9c0000 576px,#9c0000 590px,#9c0000 604px)"></i><i style="top:312px;height:3px;background:linear-gradient(90deg,#00939c 34px,#00939c 48px,#00929c 62px,#00929c 76px,#00929c 90px,#00929c 104px,#00919c 118px,#00919c 132px,#00909c 146px,#00909c 160px,#00909c 174px,#008f9c 188px,#008f9c 196px,#088f9c 202px,#9c0004 547px,#9c0003 552px,#9c0002 566px,#9c0000 580px,#9c0000 594px,#9c0000 608px)"></i><i style="top:315px;height:3px;background:linear-gradient(90deg,#008f9c 34px,#008f9c 49px,#008f9c 63px,#008e9c 77px,#008e9c 91px,#008d9c 105px,#008d9c 119px,#008c9c 133px,#008c9c 147px,#008b9c 161px,#008b9c 175px,#008a9c 190px,#008a9c 195px,#9c0006 539px,#9c0005 542px,#9c0004 556px,#9c0002 570px,#9c0000 584px,#9c0000 598px,#9c0000 613px)"></i><i style="top:318px;height:3px;background:linear-gradient(90deg,#008c9c 35px,#008b9c 49px,#008b9c 63px,#008a9c 77px,#008a9c 91px,#00899c 104px,#00889c 118px,#00889c 132px,#00879c 146px,#00879c 160px,#00869c 174px,#00859c 188px,#00859c 194px,#0b849c 201px,#9c0008 531px,#9c0007 534px,#9c0005 548px,#9c0004 562px,#9c0002 575px,#9c0000 589px,#9c0000 603px,#9c0000 617px)"></i><i style="top:321px;height:3px;background:linear-gradient(90deg,#00889c 36px,#00879c 50px,#00879c 64px,#00869c 78px,#00869c 92px,#00859c 106px,#00849c 120px,#00839c 134px,#00839c 148px,#00829c 161px,#00819c 175px,#00809c 189px,#00809c 193px,#9c000a 523px,#9c0009 524px,#9c0007 538px,#9c0005 552px,#9c0004 566px,#9c0002 580px,#9c0000 594px,#9c0000 608px,#9c0000 621px)"></i><i style="top:324px;height:3px;background:linear-gradient(90deg,#00849c 37px,#00849c 51px,#00839c 65px,#00829c 79px,#00829c 93px,#00819c 107px,#00809c 121px,#007f9c 135px,#007e9c 149px,#007d9c 163px,#007c9c 177px,#007b9c 191px,#007b9c 191px,#9c000c 514px,#9c000b 515px,#9c0009 528px,#9c0007 542px,#9c0006 556px,#9c0004 570px,#9c0002 584px,#9c0001 598px,#9c0000 612px,#9c0000 626px)"></i><i style="top:327px;height:3px;background:linear-gradient(90deg,#00819c 38px,#00809c 52px,#007f9c 66px,#007f9c 80px,#007e9c 94px,#007d9c 108px,#007c9c 122px,#007b9c 137px,#007a9c 151px,#00799c 165px,#00789c 179px,#00779c 190px,#04769c 193px,#9c000e 503px,#9c000e 507px,#9c000c 517px,#9c000a 532px,#9c0007 546px,#9c0006 560px,#9c0004 574px,#9c0002 588px,#9c0001 602px,#9c0000 616px,#9c0000 630px)"></i><i style="top:330px;height:3px;background:linear-gradient(90deg,#007d9c 39px,#007d9c 53px,#007c9c 67px,#007b9c 81px,#007a9c 94px,#00799c 108px,#00789c 122px,#00779c 136px,#00769c 150px,#00759c 164px,#00739c 177px,#00729c 189px,#03729c 191px,#9c0010 496px,#9c0010 499px,#9c000e 510px,#9c000b 524px,#9c0009 538px,#9c0007 552px,#9c0005 565px,#9c0004 579px,#9c0002 593px,#9c0001 607px,#9c0000 621px,#9c0000 635px)"></i><i style="top:333px;height:3px;background:linear-gradient(90deg,#007a9c 40px,#00799c 54px,#00789c 68px,#00779c 82px,#00769c 96px,#00759c 110px,#00749c 124px,#00739c 138px,#00729c 151px,#00709c 165px,#006f9c 179px,#006e9c 188px,#086d9c 193px,#9c0113 486px,#9c0012 491px,#9c0010 500px,#9c000e 514px,#9c000b 528px,#9c0009 542px,#9c0007 556px,#9c0006 570px,#9c0004 583px,#9c0002 597px,#9c0001 611px,#9c0000 625px,#9c0000 639px)"></i><i style="top:336px;height:3px;background:linear-gradient(90deg,#00769c 41px,#00769c 55px,#00759c 69px,#00749c 83px,#00729c 97px,#00719c 111px,#00709c 125px,#006f9c 139px,#006d9c 153px,#006c9c 167px,#006a9c 181px,#006a9c 187px,#9c0116 475px,#9c0014 483px,#9c0013 490px,#9c0010 504px,#9c000e 518px,#9c000b 532px,#9c0009 546px,#9c0007 560px,#9c0006 574px,#9c0004 588px,#9c0002 602px,#9c0001 616px,#9c0000 630px,#9c0000 644px)"></i><i style="top:339px;height:3px;background:linear-gradient(90deg,#00739c 42px,#00729c 56px,#00719c 70px,#00709c 84px,#006f9c 99px,#006d9c 113px,#006c9c 127px,#006b9c 141px,#00699c 155px,#00689c 169px,#00669c 183px,#00669c 185px,#9c0017 475px,#9c0016 479px,#9c0013 493px,#9c0010 507px,#9c000e 521px,#9c000b 535px,#9c0009 549px,#9c0008 564px,#9c0006 578px,#9c0004 592px,#9c0003 606px,#9c0001 620px,#9c0000 634px,#9c0000 648px)"></i><i style="top:342px;height:3px;background:linear-gradient(90deg,#00709c 43px,#006f9c 57px,#006e9c 71px,#006c9c 85px,#006b9c 99px,#006a9c 113px,#00699c 126px,#00679c 140px,#00669c 154px,#00649c 168px,#00629c 182px,#00629c 184px,#9c011b 459px,#9c0019 467px,#9c0018 473px,#9c0015 486px,#9c0012 500px,#9c0010 514px,#9c000d 528px,#9c000b 542px,#9c0009 556px,#9c0007 569px,#9c0006 583px,#9c0004 597px,#9c0003 611px,#9c0001 625px,#9c0000 639px,#9c0000 653px)"></i><i style="top:345px;height:3px;background:linear-gradient(90deg,#006d9c 44px,#006b9c 58px,#006a9c 73px,#00699c 87px,#00689c 101px,#00669c 115px,#00659c 129px,#00639c 143px,#00619c 157px,#00609c 171px,#005e9c 183px,#035e9c 185px,#9c011e 452px,#9c001c 459px,#9c001a 466px,#9c0017 480px,#9c0014 494px,#9c0011 508px,#9c000f 522px,#9c000d 536px,#9c000a 550px,#9c0009 564px,#9c0007 578px,#9c0005 593px,#9c0004 607px,#9c0002 621px,#9c0001 635px,#9c0000 649px)"></i><i style="top:348px;height:3px;background:linear-gradient(90deg,#00699c 45px,#00689c 60px,#00679c 74px,#00669c 88px,#00649c 102px,#00639c 116px,#00619c 130px,#005f9c 144px,#005e9c 159px,#005c9c 173px,#005a9c 182px,#075a9c 187px,#9c001f 451px,#9c001d 455px,#9c001a 470px,#9c0017 484px,#9c0014 498px,#9c0011 512px,#9c000f 526px,#9c000d 540px,#9c000b 554px,#9c0009 569px,#9c0007 583px,#9c0005 597px,#9c0004 611px,#9c0002 625px,#9c0001 639px)"></i><i style="top:351px;height:3px;background:linear-gradient(90deg,#00669c 47px,#00659c 60px,#00649c 74px,#00629c 88px,#00619c 102px,#005f9c 116px,#005e9c 130px,#005c9c 144px,#005a9c 158px,#00589c 172px,#00579c 180px,#06569c 185px,#9c0124 435px,#9c0022 443px,#9c0020 449px,#9c001c 463px,#9c0019 477px,#9c0016 491px,#9c0013 505px,#9c0011 519px,#9c000e 533px,#9c000c 546px,#9c000a 560px,#9c0008 574px,#9c0007 588px,#9c0005 602px,#9c0004 616px,#9c0002 630px)"></i><i style="top:354px;height:3px;background:linear-gradient(90deg,#00639c 48px,#00629c 62px,#00609c 76px,#005f9c 90px,#005d9c 104px,#005c9c 117px,#005a9c 131px,#00589c 145px,#00569c 159px,#00549c 173px,#00539c 179px,#9c0025 435px,#9c0023 439px,#9c0020 453px,#9c001c 467px,#9c0019 481px,#9c0016 495px,#9c0013 509px,#9c0011 522px,#9c000e 536px,#9c000c 550px,#9c000a 564px,#9c0008 578px,#9c0007 592px,#9c0005 606px,#9c0004 620px)"></i><i style="top:357px;height:3px;background:linear-gradient(90deg,#00609c 49px,#005f9c 63px,#005d9c 77px,#005c9c 91px,#005a9c 105px,#00589c 119px,#00579c 133px,#00559c 147px,#00539c 161px,#00519c 175px,#00509c 178px,#9c0028 427px,#9c0027 428px,#9c0023 442px,#9c001f 456px,#9c001c 470px,#9c0019 484px,#9c0016 498px,#9c0013 512px,#9c0011 526px,#9c000e 540px,#9c000c 555px,#9c000a 569px,#9c0009 583px,#9c0007 597px,#9c0005 611px)"></i><i style="top:360px;height:3px;background:linear-gradient(90deg,#005d9c 50px,#005c9c 64px,#005a9c 78px,#00599c 92px,#00579c 106px,#00559c 121px,#00539c 135px,#00519c 149px,#004f9c 163px,#004d9c 177px,#004d9c 177px,#9c002c 417px,#9c002b 418px,#9c0027 432px,#9c0023 446px,#9c001f 460px,#9c001c 474px,#9c0018 488px,#9c0016 502px,#9c0013 516px,#9c0011 530px,#9c000e 545px,#9c000c 559px,#9c000a 573px,#9c0008 587px,#9c0007 601px)"></i><i style="top:363px;height:3px;background:linear-gradient(90deg,#005a9c 51px,#00599c 65px,#00579c 79px,#00569c 93px,#00549c 106px,#00529c 120px,#00509c 134px,#004e9c 148px,#004c9c 162px,#004a9c 175px,#004a9c 176px,#9c002f 410px,#9c002f 411px,#9c002a 425px,#9c0025 439px,#9c0022 453px,#9c001e 467px,#9c001b 481px,#9c0018 495px,#9c0015 508px,#9c0012 522px,#9c0010 536px,#9c000e 550px,#9c000c 564px,#9c000a 578px,#9c0008 592px)"></i><i style="top:366px;height:3px;background:linear-gradient(90deg,#00579c 52px,#00569c 66px,#00549c 80px,#00529c 94px,#00519c 108px,#004f9c 122px,#004d9c 136px,#004b9c 150px,#00489c 164px,#00479c 174px,#04469c 178px,#9c0034 401px,#9c0033 402px,#9c002e 415px,#9c0029 429px,#9c0025 443px,#9c0021 457px,#9c001e 471px,#9c001b 484px,#9c0018 498px,#9c0015 512px,#9c0012 526px,#9c0010 540px,#9c000e 554px,#9c000c 568px,#9c000a 582px)"></i><i style="top:369px;height:3px;background:linear-gradient(90deg,#00549c 53px,#00539c 67px,#00519c 81px,#004f9c 95px,#004d9c 109px,#004b9c 123px,#00499c 137px,#00479c 151px,#00459c 165px,#00449c 173px,#07429c 179px,#9c0139 390px,#9c0037 394px,#9c0033 404px,#9c002e 418px,#9c0029 432px,#9c0025 446px,#9c0021 460px,#9c001d 474px,#9c001a 488px,#9c0017 502px,#9c0015 516px,#9c0012 531px,#9c0010 545px,#9c000e 559px,#9c000c 573px)"></i><i style="top:372px;height:3px;background:linear-gradient(90deg,#00529c 54px,#00509c 68px,#004e9c 82px,#004c9c 97px,#004a9c 111px,#00489c 125px,#00469c 139px,#00449c 153px,#00419c 167px,#00419c 172px,#9c013f 379px,#9c003c 386px,#9c0038 393px,#9c0032 408px,#9c002d 422px,#9c0029 436px,#9c0024 450px,#9c0021 464px,#9c001d 478px,#9c001a 492px,#9c0017 507px,#9c0015 521px,#9c0012 535px,#9c0010 549px,#9c000e 563px)"></i><i style="top:375px;height:3px;background:linear-gradient(90deg,#004f9c 55px,#004d9c 69px,#004b9c 83px,#00499c 97px,#00479c 111px,#00459c 125px,#00439c 138px,#00419c 152px,#003f9c 166px,#003e9c 171px,#9c0143 374px,#9c0040 378px,#9c003c 387px,#9c0036 401px,#9c0030 415px,#9c002b 429px,#9c0027 443px,#9c0023 457px,#9c0020 471px,#9c001c 484px,#9c0019 498px,#9c0017 512px,#9c0014 526px,#9c0012 540px,#9c0010 554px)"></i><i style="top:378px;height:3px;background:linear-gradient(90deg,#004c9c 56px,#004a9c 70px,#00489c 84px,#00479c 98px,#00449c 112px,#00429c 126px,#00409c 140px,#003e9c 154px,#003b9c 168px,#003b9c 169px,#9c0249 363px,#9c0045 370px,#9c0042 377px,#9c003b 391px,#9c0035 405px,#9c0030 419px,#9c002b 433px,#9c0027 447px,#9c0023 460px,#9c001f 474px,#9c001c 488px,#9c0019 502px,#9c0017 516px,#9c0014 530px,#9c0012 544px)"></i><i style="top:381px;height:3px;background:linear-gradient(90deg,#00499c 57px,#00489c 72px,#00469c 86px,#00449c 100px,#00429c 114px,#003f9c 128px,#003d9c 142px,#003b9c 156px,#00389c 168px,#02389c 170px,#9c004a 362px,#9c0048 366px,#9c0041 380px,#9c003a 394px,#9c0034 408px,#9c002f 422px,#9c002a 436px,#9c0026 450px,#9c0022 464px,#9c001f 478px,#9c001c 492px,#9c0019 506px,#9c0016 521px,#9c0014 535px)"></i><i style="top:384px;height:3px;background:linear-gradient(90deg,#00479c 59px,#00459c 73px,#00439c 87px,#00419c 101px,#003f9c 115px,#003c9c 129px,#003a9c 144px,#00379c 158px,#00369c 167px,#05359c 172px,#9c0050 354px,#9c004f 356px,#9c0047 370px,#9c0040 384px,#9c0039 398px,#9c0034 412px,#9c002e 426px,#9c002a 440px,#9c0026 454px,#9c0022 469px,#9c001f 483px,#9c001c 497px,#9c0019 511px,#9c0016 525px)"></i><i style="top:387px;height:3px;background:linear-gradient(90deg,#00449c 60px,#00429c 74px,#00409c 88px,#003e9c 102px,#003c9c 115px,#003a9c 129px,#00379c 143px,#00359c 157px,#00339c 166px,#05329c 171px,#9c0056 346px,#9c0054 350px,#9c004b 364px,#9c0043 378px,#9c003d 391px,#9c0037 405px,#9c0032 419px,#9c002d 433px,#9c0029 447px,#9c0025 460px,#9c0021 474px,#9c001e 488px,#9c001b 502px,#9c0018 516px)"></i><i style="top:390px;height:3px;background:linear-gradient(90deg,#00419c 62px,#003f9c 76px,#003d9c 90px,#003b9c 103px,#00399c 117px,#00379c 131px,#00349c 145px,#00329c 159px,#00319c 164px,#9c005d 338px,#9c005c 339px,#9c0052 353px,#9c004a 367px,#9c0042 381px,#9c003c 395px,#9c0036 409px,#9c0031 423px,#9c002c 437px,#9c0028 450px,#9c0024 464px,#9c0021 478px,#9c001e 492px,#9c001b 506px)"></i><i style="top:393px;height:3px;background:linear-gradient(90deg,#003f9c 63px,#003d9c 77px,#003b9c 91px,#00389c 105px,#00369c 119px,#00349c 133px,#00319c 147px,#002f9c 161px,#002e9c 163px,#9c0065 329px,#9c0064 330px,#9c005a 343px,#9c0051 357px,#9c0049 371px,#9c0041 385px,#9c003b 399px,#9c0035 413px,#9c0030 427px,#9c002c 441px,#9c0028 455px,#9c0024 469px,#9c0021 483px,#9c001d 496px)"></i><i style="top:396px;height:3px;background:linear-gradient(90deg,#003c9c 65px,#003a9c 79px,#00389c 93px,#00369c 107px,#00339c 121px,#00319c 135px,#002e9c 149px,#002c9c 162px,#012b9c 163px,#9c0170 318px,#9c006c 322px,#9c0063 332px,#9c0058 346px,#9c004f 360px,#9c0047 374px,#9c0040 388px,#9c003a 403px,#9c0035 417px,#9c0030 431px,#9c002b 445px,#9c0027 459px,#9c0023 473px,#9c0020 487px)"></i><i style="top:399px;height:3px;background:linear-gradient(90deg,#003a9c 66px,#00379c 80px,#00359c 95px,#00339c 109px,#00309c 123px,#002e9c 137px,#002b9c 151px,#00299c 161px,#05289c 165px,#9c027c 307px,#9c0074 314px,#9c006d 321px,#9c0061 336px,#9c0057 350px,#9c004e 364px,#9c0046 378px,#9c003f 392px,#9c0039 407px,#9c0034 421px,#9c002f 435px,#9c002a 449px,#9c0027 463px,#9c0023 477px)"></i><i style="top:402px;height:3px;background:linear-gradient(90deg,#00379c 68px,#00359c 81px,#00339c 95px,#00309c 109px,#002e9c 123px,#002b9c 137px,#00299c 150px,#00279c 159px,#05269c 164px,#9c0182 302px,#9c007e 306px,#9c0073 316px,#9c0066 330px,#9c005c 344px,#9c0052 358px,#9c004a 371px,#9c0043 385px,#9c003d 399px,#9c0037 413px,#9c0032 427px,#9c002e 440px,#9c002a 454px,#9c0026 468px)"></i><i style="top:405px;height:3px;background:linear-gradient(90deg,#00349c 69px,#00329c 83px,#00309c 97px,#002e9c 111px,#002b9c 125px,#00299c 139px,#00269c 153px,#00259c 158px,#9c0291 292px,#9c0088 298px,#9c007f 305px,#9c0070 319px,#9c0064 333px,#9c005a 347px,#9c0051 361px,#9c0049 375px,#9c0042 389px,#9c003c 403px,#9c0036 417px,#9c0032 431px,#9c002d 445px,#9c0029 458px)"></i><i style="top:408px;height:3px;background:linear-gradient(90deg,#00329c 71px,#00309c 85px,#002d9c 99px,#002b9c 113px,#00299c 127px,#00269c 141px,#00239c 155px,#00239c 157px,#9c0093 290px,#9c008d 295px,#9c007c 309px,#9c006e 323px,#9c0062 337px,#9c0058 351px,#9c004f 365px,#9c0048 379px,#9c0041 393px,#9c003b 407px,#9c0036 421px,#9c0031 435px,#9c002c 449px)"></i><i style="top:411px;height:3px;background:linear-gradient(90deg,#00309c 72px,#002d9c 86px,#002b9c 100px,#00289c 114px,#00269c 129px,#00239c 143px,#00219c 156px,#01209c 157px,#98009c 282px,#9b009c 284px,#9c0089 298px,#9c0079 312px,#9c006b 326px,#9c0060 340px,#9c0056 355px,#9c004e 369px,#9c0046 383px,#9c0040 397px,#9c003a 411px,#9c0035 425px,#9c0030 439px)"></i><i style="top:414px;height:3px;background:linear-gradient(90deg,#002d9c 74px,#002b9c 88px,#00289c 102px,#00269c 116px,#00239c 131px,#00209c 145px,#001e9c 155px,#041e9c 159px,#8a009c 273px,#8c009c 274px,#9c0098 287px,#9c0085 302px,#9c0076 316px,#9c0069 330px,#9c005e 344px,#9c0054 359px,#9c004c 373px,#9c0045 387px,#9c003e 401px,#9c0039 416px,#9c0034 430px)"></i><i style="top:417px;height:3px;background:linear-gradient(90deg,#002b9c 75px,#00289c 89px,#00269c 103px,#00249c 116px,#00219c 130px,#001e9c 144px,#001c9c 153px,#041b9c 158px,#80009c 266px,#83009c 268px,#97009c 282px,#9c008c 296px,#9c007c 310px,#9c006f 324px,#9c0063 337px,#9c005a 351px,#9c0051 365px,#9c0049 379px,#9c0043 393px,#9c003d 407px,#9c0038 420px)"></i><i style="top:420px;height:3px;background:linear-gradient(90deg,#00289c 76px,#00269c 90px,#00249c 104px,#00219c 118px,#001e9c 132px,#001c9c 146px,#001a9c 152px,#07199c 160px,#75009c 258px,#75009c 258px,#88009c 271px,#9c009b 285px,#9c0089 299px,#9c0079 313px,#9c006c 327px,#9c0061 341px,#9c0058 355px,#9c004f 369px,#9c0048 383px,#9c0042 397px,#9c003c 411px)"></i><i style="top:423px;height:3px;background:linear-gradient(90deg,#00269c 78px,#00249c 92px,#00219c 106px,#001f9c 120px,#001c9c 134px,#00199c 148px,#00189c 151px,#67019c 247px,#6b009c 250px,#79009c 261px,#8c009c 275px,#9c0097 289px,#9c0085 303px,#9c0076 317px,#9c006a 331px,#9c005f 345px,#9c0056 359px,#9c004e 373px,#9c0047 387px,#9c0040 401px)"></i><i style="top:426px;height:3px;background:linear-gradient(90deg,#00249c 80px,#00219c 94px,#001f9c 108px,#001c9c 122px,#00199c 136px,#00179c 150px,#01169c 151px,#5a029c 236px,#61009c 242px,#6b009c 250px,#7e009c 264px,#91009c 278px,#9c0092 292px,#9c0081 307px,#9c0073 321px,#9c0067 335px,#9c005d 349px,#9c0054 363px,#9c004c 378px,#9c0045 392px)"></i><i style="top:429px;height:3px;background:linear-gradient(90deg,#00219c 81px,#001f9c 96px,#001c9c 110px,#001a9c 124px,#00179c 139px,#00159c 148px,#04149c 153px,#58009c 234px,#5e009c 239px,#70009c 253px,#82009c 268px,#96009c 282px,#9c008e 296px,#9c007d 311px,#9c0070 325px,#9c0064 339px,#9c005a 354px,#9c0052 368px,#9c004a 382px)"></i><i style="top:432px;height:3px;background:linear-gradient(90deg,#001f9c 83px,#001d9c 97px,#001a9c 111px,#00179c 125px,#00159c 138px,#00139c 147px,#04129c 152px,#4a019c 221px,#4f009c 226px,#59009c 235px,#6a009c 249px,#7c009c 262px,#8e009c 276px,#9c0096 290px,#9c0085 304px,#9c0077 318px,#9c006b 331px,#9c0061 345px,#9c0058 359px,#9c0050 373px)"></i><i style="top:435px;height:3px;background:linear-gradient(90deg,#001d9c 85px,#001a9c 99px,#00189c 113px,#00159c 127px,#00129c 141px,#00119c 146px,#3e029c 210px,#47009c 218px,#4d009c 224px,#5d009c 238px,#6e009c 252px,#80009c 266px,#93009c 280px,#9c0092 294px,#9c0081 308px,#9c0074 321px,#9c0068 335px,#9c005e 349px,#9c0056 363px)"></i><i style="top:438px;height:3px;background:linear-gradient(90deg,#001b9c 87px,#00189c 101px,#00159c 115px,#00139c 129px,#00109c 143px,#000f9c 145px,#3f009c 210px,#42009c 213px,#51009c 227px,#62009c 241px,#73009c 255px,#85009c 269px,#97009c 283px,#9c008d 298px,#9c007e 312px,#9c0071 326px,#9c0066 340px,#9c005c 354px)"></i><i style="top:441px;height:3px;background:linear-gradient(90deg,#00189c 88px,#00169c 103px,#00139c 117px,#00109c 131px,#000e9c 144px,#020d9c 145px,#37009c 202px,#37009c 202px,#46009c 216px,#56009c 231px,#66009c 245px,#77009c 259px,#89009c 273px,#9c009b 287px,#9c0089 302px,#9c007a 316px,#9c006e 330px,#9c0063 344px)"></i><i style="top:444px;height:3px;background:linear-gradient(90deg,#00169c 90px,#00139c 105px,#00119c 119px,#000e9c 133px,#000c9c 142px,#050b9c 148px,#2c019c 191px,#2f009c 194px,#3b009c 205px,#4a009c 220px,#5a009c 234px,#6b009c 248px,#7c009c 263px,#8f009c 277px,#9c0095 292px,#9c0085 306px,#9c0076 320px,#9c006b 335px)"></i><i style="top:447px;height:3px;background:linear-gradient(90deg,#00149c 92px,#00119c 106px,#000f9c 119px,#000c9c 133px,#000a9c 141px,#05099c 147px,#28009c 186px,#2a009c 188px,#38009c 202px,#46009c 215px,#55009c 229px,#64009c 243px,#75009c 257px,#86009c 270px,#97009c 284px,#9c008e 298px,#9c007f 311px,#9c0073 325px)"></i><i style="top:450px;height:3px;background:linear-gradient(90deg,#00129c 94px,#000f9c 108px,#000c9c 122px,#000a9c 135px,#00099c 140px,#21009c 177px,#21009c 178px,#2e009c 191px,#3c009c 205px,#4a009c 219px,#59009c 232px,#69009c 246px,#79009c 260px,#8a009c 274px,#9c009b 288px,#9c008a 302px,#9c007c 316px)"></i><i style="top:453px;height:3px;background:linear-gradient(90deg,#00109c 96px,#000d9c 110px,#000a9c 124px,#00079c 138px,#00079c 139px,#17019c 166px,#1b009c 170px,#24009c 180px,#32009c 194px,#3f009c 208px,#4e009c 222px,#5d009c 236px,#6d009c 250px,#7e009c 264px,#8f009c 278px,#9c0096 292px,#9c0086 306px)"></i><i style="top:456px;height:3px;background:linear-gradient(90deg,#000d9c 98px,#000b9c 112px,#00089c 126px,#00059c 137px,#03059c 141px,#0f029c 155px,#15009c 162px,#1b009c 169px,#28009c 183px,#35009c 197px,#44009c 212px,#52009c 226px,#62009c 240px,#72009c 254px,#83009c 268px,#95009c 282px,#9c0090 297px)"></i><i style="top:459px;height:3px;background:linear-gradient(90deg,#000b9c 100px,#00089c 115px,#00059c 129px,#00049c 136px,#06029c 143px,#0f009c 154px,#12009c 158px,#1f009c 172px,#2c009c 187px,#3a009c 201px,#48009c 215px,#57009c 230px,#67009c 244px,#77009c 258px,#88009c 273px,#9b009c 287px)"></i><i style="top:462px;height:3px;background:linear-gradient(90deg,#00099c 103px,#00069c 116px,#00049c 129px,#00029c 135px,#06019c 143px,#09009c 146px,#12009c 156px,#1d009c 170px,#2a009c 183px,#36009c 197px,#43009c 210px,#51009c 224px,#5f009c 237px,#6e009c 251px,#7e009c 264px,#8e009c 278px)"></i><i style="top:465px;height:3px;background:linear-gradient(90deg,#00079c 105px,#00049c 118px,#00019c 132px,#00019c 134px,#03009c 138px,#0a009c 146px,#15009c 159px,#21009c 173px,#2d009c 186px,#3a009c 200px,#47009c 214px,#55009c 227px,#64009c 241px,#73009c 254px,#83009c 268px)"></i><i style="top:468px;height:3px;background:linear-gradient(90deg,#00059c 107px,#00029c 121px,#02009c 134px,#0d009c 148px,#18009c 162px,#24009c 176px,#31009c 190px,#3e009c 203px,#4b009c 217px,#59009c 231px,#68009c 245px,#78009c 259px)"></i><i style="top:471px;height:3px;background:linear-gradient(90deg,#00029c 110px,#00009c 124px,#05009c 138px,#10009c 152px,#1c009c 165px,#28009c 179px,#35009c 193px,#42009c 207px,#50009c 221px,#5e009c 235px,#6d009c 249px)"></i><i style="top:474px;height:3px;background:linear-gradient(90deg,#00009c 113px,#00009c 127px,#08009c 141px,#14009c 155px,#20009c 169px,#2c009c 183px,#39009c 197px,#46009c 211px,#54009c 225px,#63009c 239px)"></i><i style="top:477px;height:3px;background:linear-gradient(90deg,#00009c 115px,#01009c 130px,#0c009c 144px,#18009c 158px,#24009c 173px,#30009c 187px,#3d009c 201px,#4b009c 216px,#59009c 230px)"></i><i style="top:480px;height:3px;background:linear-gradient(90deg,#00009c 118px,#04009c 133px,#10009c 148px,#1b009c 162px,#28009c 177px,#35009c 191px,#42009c 206px,#50009c 220px)"></i><i style="top:483px;height:3px;background:linear-gradient(90deg,#00009c 122px,#08009c 137px,#14009c 152px,#20009c 167px,#2d009c 181px,#3a009c 196px,#47009c 211px)"></i><i style="top:486px;height:3px;background:linear-gradient(90deg,#01009c 126px,#0c009c 141px,#18009c 156px,#25009c 171px,#32009c 186px,#3f009c 201px)"></i><i style="top:489px;height:3px;background:linear-gradient(90deg,#05009c 131px,#11009c 146px,#1d009c 161px,#2a009c 177px,#37009c 192px)"></i><i style="top:492px;height:3px;background:linear-gradient(90deg,#09009c 135px,#16009c 151px,#22009c 167px,#2f009c 182px)"></i><i style="top:495px;height:3px;background:linear-gradient(90deg,#0e009c 141px,#1b009c 157px,#28009c 173px)"></i><i style="top:498px;height:3px;background:linear-gradient(90deg,#13009c 145px,#21009c 163px)"></i></div>
<div class="a cs" style="left:1162px;top:158px;width:745px;height:505px;filter:blur(1px);clip-path:path('M567.4 305.8 L266.0 143.3 L133.0 468.3Z')"><i style="top:144px;height:3px;background:linear-gradient(90deg,#00ff03 262px,#0aff00 273px)"></i><i style="top:147px;height:3px;background:linear-gradient(90deg,#00ff05 261px,#08ff02 270px,#14ff00 279px)"></i><i style="top:150px;height:3px;background:linear-gradient(90deg,#00ff08 260px,#0cff03 272px,#1dff00 284px)"></i><i style="top:153px;height:3px;background:linear-gradient(90deg,#00ff0a 258px,#0aff06 269px,#18ff03 279px,#27ff00 290px)"></i><i style="top:156px;height:3px;background:linear-gradient(90deg,#00ff0d 257px,#0dff08 270px,#1fff04 283px,#32ff00 295px)"></i><i style="top:159px;height:3px;background:linear-gradient(90deg,#00ff0f 256px,#0bff0b 267px,#1bff07 278px,#2bff03 290px,#3cff00 301px)"></i><i style="top:162px;height:3px;background:linear-gradient(90deg,#00ff12 255px,#0aff0e 265px,#19ff0b 275px,#28ff07 286px,#38ff03 296px,#48ff00 306px)"></i><i style="top:165px;height:3px;background:linear-gradient(90deg,#00ff14 253px,#0cff10 265px,#1dff0c 277px,#2eff08 289px,#41ff03 300px,#53ff00 312px)"></i><i style="top:168px;height:3px;background:linear-gradient(90deg,#00ff17 252px,#0bff13 263px,#1bff10 274px,#2bff0c 285px,#3cff07 296px,#4eff03 307px,#60ff00 318px)"></i><i style="top:171px;height:3px;background:linear-gradient(90deg,#00ff1a 251px,#0aff16 261px,#19ff13 272px,#29ff0f 282px,#39ff0b 292px,#4aff07 303px,#5bff03 313px,#6cff00 323px)"></i><i style="top:174px;height:3px;background:linear-gradient(90deg,#00ff1d 250px,#0cff19 261px,#1dff15 272px,#2eff11 284px,#40ff0d 295px,#53ff08 306px,#66ff03 317px,#7aff00 329px)"></i><i style="top:177px;height:3px;background:linear-gradient(90deg,#00ff20 249px,#0bff1c 259px,#1bff18 270px,#2cff14 281px,#3dff10 291px,#4fff0c 302px,#61ff08 313px,#74ff03 324px,#88ff00 334px)"></i><i style="top:180px;height:3px;background:linear-gradient(90deg,#00ff23 247px,#0dff1f 259px,#1eff1b 270px,#30ff16 282px,#43ff12 294px,#57ff0d 305px,#6bff09 317px,#81ff04 328px,#97ff00 340px)"></i><i style="top:183px;height:3px;background:linear-gradient(90deg,#00ff26 246px,#0cff22 257px,#1dff1e 268px,#2eff1a 279px,#40ff16 290px,#53ff12 301px,#67ff0d 312px,#7bff08 323px,#90ff04 334px,#a6ff00 345px)"></i><i style="top:186px;height:3px;background:linear-gradient(90deg,#00ff29 245px,#0bff25 255px,#1cff21 266px,#2dff1e 277px,#3eff1a 287px,#51ff16 298px,#63ff11 309px,#77ff0d 319px,#8bff08 330px,#a0ff04 340px,#b6ff00 351px)"></i><i style="top:189px;height:3px;background:linear-gradient(90deg,#00ff2c 244px,#0dff28 255px,#1eff24 266px,#31ff20 278px,#44ff1c 289px,#58ff17 300px,#6cff13 311px,#82ff0e 323px,#98ff09 334px,#afff04 345px,#c8ff00 356px)"></i><i style="top:192px;height:3px;background:linear-gradient(90deg,#00ff2f 242px,#0cff2b 253px,#1dff28 264px,#2fff24 275px,#42ff20 286px,#55ff1c 297px,#69ff17 308px,#7eff13 319px,#93ff0e 329px,#aaff09 340px,#c1ff04 351px,#daff00 362px)"></i><i style="top:195px;height:3px;background:linear-gradient(90deg,#00ff32 241px,#0dff2f 253px,#20ff2b 264px,#33ff26 276px,#47ff22 287px,#5cff1e 299px,#71ff19 310px,#88ff14 322px,#9fff0f 333px,#b8ff0a 345px,#d2ff04 356px,#edff00 368px)"></i><i style="top:198px;height:3px;background:linear-gradient(90deg,#00ff36 240px,#0dff32 251px,#1fff2e 262px,#31ff2a 273px,#45ff26 284px,#59ff22 295px,#6eff1d 307px,#84ff19 318px,#9bff14 329px,#b3ff0f 340px,#cbff0a 351px,#e5ff04 362px,#fffd00 373px)"></i><i style="top:201px;height:3px;background:linear-gradient(90deg,#00ff39 239px,#0cff36 250px,#1eff32 260px,#30ff2e 271px,#43ff2a 282px,#57ff26 293px,#6cff22 303px,#81ff1d 314px,#97ff19 325px,#aeff14 336px,#c7ff0f 346px,#e0ff0a 357px,#faff04 368px,#ffea00 379px)"></i><i style="top:204px;height:3px;background:linear-gradient(90deg,#00ff3d 238px,#0dff39 249px,#20ff35 260px,#34ff31 271px,#48ff2d 283px,#5dff29 294px,#73ff24 305px,#8aff20 317px,#a2ff1b 328px,#bbff15 339px,#d6ff10 350px,#f1ff0a 362px,#fff104 373px,#ffd800 384px)"></i><i style="top:207px;height:3px;background:linear-gradient(90deg,#00ff40 236px,#0dff3d 247px,#1fff39 258px,#33ff35 269px,#46ff31 280px,#5bff2d 291px,#71ff29 302px,#87ff24 313px,#9fff20 324px,#b7ff1b 335px,#d1ff15 346px,#ecff10 357px,#fff60a 368px,#ffde04 379px,#ffc800 390px)"></i><i style="top:210px;height:3px;background:linear-gradient(90deg,#00ff44 235px,#0dff41 246px,#1fff3d 256px,#32ff39 267px,#45ff35 278px,#5aff31 289px,#6fff2d 299px,#85ff29 310px,#9cff24 321px,#b4ff20 331px,#cdff1b 342px,#e8ff16 353px,#fffb10 363px,#ffe209 374px,#ffcc04 385px,#ffba00 395px)"></i><i style="top:213px;height:3px;background:linear-gradient(90deg,#00ff48 234px,#0eff44 245px,#21ff41 256px,#35ff3d 267px,#4aff39 278px,#5fff34 290px,#76ff30 301px,#8eff2c 312px,#a6ff27 323px,#c0ff22 334px,#dbff1d 345px,#f8ff17 356px,#ffea10 368px,#ffd209 379px,#ffbe04 390px,#ffac00 401px)"></i><i style="top:216px;height:3px;background:linear-gradient(90deg,#00ff4c 233px,#0dff48 243px,#20ff45 254px,#34ff41 265px,#48ff3d 276px,#5eff39 287px,#74ff35 298px,#8bff30 309px,#a4ff2c 320px,#bdff27 330px,#d8ff22 341px,#f4ff1d 352px,#ffee16 363px,#ffd60f 374px,#ffc109 385px,#ffb003 396px,#ffa000 407px)"></i><i style="top:219px;height:3px;background:linear-gradient(90deg,#00ff50 231px,#0eff4c 243px,#22ff48 254px,#37ff45 265px,#4dff41 277px,#63ff3c 288px,#7bff38 299px,#94ff33 310px,#aeff2f 322px,#c9ff2a 333px,#e6ff24 344px,#fffa1e 356px,#ffdf16 367px,#ffc80f 378px,#ffb409 390px,#ffa303 401px,#ff9500 412px)"></i><i style="top:222px;height:3px;background:linear-gradient(90deg,#00ff54 230px,#0eff50 241px,#22ff4d 252px,#36ff49 263px,#4cff45 274px,#62ff41 285px,#79ff3d 296px,#92ff38 307px,#abff34 318px,#c6ff2f 329px,#e2ff2a 340px,#fffe24 352px,#ffe21c 363px,#ffcb14 374px,#ffb70e 385px,#ffa608 396px,#ff9703 407px,#ff8a00 418px)"></i><i style="top:225px;height:3px;background:linear-gradient(90deg,#00ff58 229px,#0eff55 240px,#21ff51 251px,#36ff4e 261px,#4bff4a 272px,#61ff46 283px,#78ff42 294px,#90ff3e 305px,#a9ff39 315px,#c4ff34 326px,#e0ff30 337px,#fdff2a 348px,#ffe521 358px,#ffce19 369px,#ffba13 380px,#ffa90d 391px,#ff9907 402px,#ff8c03 412px,#ff8000 423px)"></i><i style="top:228px;height:3px;background:linear-gradient(90deg,#00ff5c 228px,#0eff59 239px,#23ff55 250px,#38ff52 261px,#4fff4e 272px,#66ff4a 284px,#7fff45 295px,#98ff41 306px,#b3ff3c 317px,#d0ff38 328px,#edff33 339px,#fff22b 351px,#ffd721 362px,#ffc119 373px,#ffae13 384px,#ff9e0d 395px,#ff8f08 406px,#ff8203 418px,#ff7700 429px)"></i><i style="top:231px;height:3px;background:linear-gradient(90deg,#00ff60 226px,#0eff5d 237px,#23ff5a 248px,#38ff56 259px,#4eff53 270px,#65ff4f 281px,#7dff4b 292px,#97ff46 303px,#b1ff42 314px,#cdff3d 325px,#ebff38 336px,#fff531 347px,#ffda27 358px,#ffc31f 369px,#ffb018 380px,#ff9f11 391px,#ff910c 402px,#ff8407 413px,#ff7903 423px,#ff6f00 434px)"></i><i style="top:234px;height:3px;background:linear-gradient(90deg,#00ff65 225px,#0eff62 236px,#22ff5e 247px,#37ff5b 257px,#4dff58 268px,#64ff54 279px,#7cff50 290px,#96ff4c 300px,#b0ff48 311px,#ccff43 322px,#e9ff3e 333px,#fff738 343px,#ffdc2d 354px,#ffc524 365px,#ffb21c 376px,#ffa116 386px,#ff9210 397px,#ff860b 408px,#ff7a07 418px,#ff7003 429px,#ff6700 440px)"></i><i style="top:237px;height:3px;background:linear-gradient(90deg,#00ff69 224px,#0fff66 235px,#24ff63 246px,#3aff60 257px,#51ff5c 268px,#6aff58 279px,#83ff54 290px,#9eff50 302px,#baff4b 313px,#d7ff47 324px,#f6ff42 335px,#ffe938 346px,#ffcf2d 357px,#ffb924 368px,#ffa71d 379px,#ff9716 390px,#ff8910 401px,#ff7d0b 412px,#ff7207 423px,#ff6803 434px,#ff5f00 446px)"></i><i style="top:240px;height:3px;background:linear-gradient(90deg,#00ff6e 223px,#0fff6b 234px,#24ff68 245px,#3aff65 255px,#51ff61 266px,#69ff5d 277px,#82ff5a 288px,#9dff56 299px,#b8ff51 310px,#d6ff4d 321px,#f5ff48 332px,#ffeb3e 342px,#ffd133 353px,#ffbb29 364px,#ffa821 375px,#ff981b 386px,#ff8a15 397px,#ff7e0f 408px,#ff730b 418px,#ff6906 429px,#ff6003 440px,#ff5800 451px)"></i><i style="top:243px;height:3px;background:linear-gradient(90deg,#00ff73 222px,#10ff70 233px,#26ff6d 244px,#3dff69 255px,#55ff66 266px,#6eff62 278px,#89ff5e 289px,#a5ff5a 300px,#c2ff56 311px,#e1ff51 322px,#fffc4b 334px,#ffde3e 345px,#ffc533 356px,#ffb029 367px,#ff9e21 378px,#ff8f1b 389px,#ff8115 401px,#ff760f 412px,#ff6b0b 423px,#ff6206 434px,#ff5903 445px,#ff5200 457px)"></i><i style="top:246px;height:3px;background:linear-gradient(90deg,#00ff78 220px,#0fff75 231px,#25ff72 242px,#3cff6f 253px,#54ff6b 264px,#6dff68 275px,#88ff64 286px,#a4ff60 297px,#c1ff5c 308px,#e0ff58 319px,#fffd52 330px,#ffdf44 341px,#ffc639 352px,#ffb12f 363px,#ff9f26 374px,#ff901f 385px,#ff8219 396px,#ff7613 407px,#ff6c0e 418px,#ff620a 429px,#ff5a06 440px,#ff5202 451px,#ff4b00 462px)"></i><i style="top:249px;height:3px;background:linear-gradient(90deg,#00ff7d 219px,#0fff7a 230px,#25ff77 241px,#3cff74 252px,#54ff71 262px,#6dff6e 273px,#87ff6a 284px,#a3ff66 295px,#c0ff62 306px,#dfff5e 316px,#fffe59 327px,#ffe04b 338px,#ffc73e 349px,#ffb234 360px,#ffa02b 370px,#ff9124 381px,#ff831d 392px,#ff7717 403px,#ff6c12 414px,#ff630e 425px,#ff5b09 435px,#ff5306 446px,#ff4c02 457px,#ff4500 468px)"></i><i style="top:252px;height:3px;background:linear-gradient(90deg,#00ff82 218px,#10ff80 229px,#27ff7d 240px,#3fff79 251px,#58ff76 262px,#72ff73 273px,#8eff6f 285px,#abff6b 296px,#caff67 307px,#ebff63 318px,#fff159 329px,#ffd44b 340px,#ffbc3e 351px,#ffa834 362px,#ff972b 373px,#ff8824 384px,#ff7b1d 396px,#ff7017 407px,#ff6512 418px,#ff5c0e 429px,#ff5409 440px,#ff4d06 451px,#ff4602 462px,#ff4000 473px)"></i><i style="top:255px;height:3px;background:linear-gradient(90deg,#00ff88 217px,#10ff85 228px,#27ff82 239px,#3eff7f 249px,#58ff7c 260px,#72ff79 271px,#8eff75 282px,#abff72 293px,#caff6e 304px,#eaff6a 315px,#fff260 326px,#ffd551 337px,#ffbd44 348px,#ffa93a 359px,#ff9730 370px,#ff8928 381px,#ff7b22 391px,#ff701b 402px,#ff6616 413px,#ff5d11 424px,#ff540d 435px,#ff4d09 446px,#ff4605 457px,#ff4002 468px,#ff3b00 479px)"></i><i style="top:258px;height:3px;background:linear-gradient(90deg,#00ff8d 215px,#11ff8b 227px,#28ff88 238px,#41ff85 249px,#5cff82 260px,#77ff7e 271px,#94ff7b 283px,#b3ff77 294px,#d4ff73 305px,#f6ff6f 316px,#ffe660 328px,#ffca51 339px,#ffb344 350px,#ff9f3a 361px,#ff8f30 372px,#ff8028 384px,#ff7422 395px,#ff691b 406px,#ff5f16 417px,#ff5611 428px,#ff4e0d 440px,#ff4709 451px,#ff4105 462px,#ff3b02 473px,#ff3600 484px)"></i><i style="top:261px;height:3px;background:linear-gradient(90deg,#00ff93 214px,#11ff90 225px,#28ff8e 236px,#41ff8b 247px,#5bff88 258px,#77ff85 269px,#94ff82 280px,#b3ff7e 291px,#d3ff7a 302px,#f6ff77 314px,#ffe667 325px,#ffca57 336px,#ffb34a 347px,#ffa03f 358px,#ff8f35 369px,#ff812d 380px,#ff7426 391px,#ff6920 402px,#ff5f1a 413px,#ff5715 424px,#ff4f10 435px,#ff480c 446px,#ff4109 457px,#ff3b05 468px,#ff3602 479px,#ff3100 490px)"></i><i style="top:264px;height:3px;background:linear-gradient(90deg,#00ff99 213px,#10ff96 224px,#28ff94 235px,#41ff91 246px,#5bff8e 256px,#77ff8c 267px,#94ff88 278px,#b3ff85 289px,#d3ff82 300px,#f6ff7e 311px,#ffe76e 322px,#ffcb5e 333px,#ffb350 343px,#ffa044 354px,#ff8f3a 365px,#ff8132 376px,#ff742a 387px,#ff6924 398px,#ff5f1e 409px,#ff5719 420px,#ff4f14 430px,#ff4810 441px,#ff410c 452px,#ff3b08 463px,#ff3605 474px,#ff3102 485px,#ff2c00 496px)"></i><i style="top:267px;height:3px;background:linear-gradient(90deg,#00ff9f 212px,#11ff9d 223px,#2aff9a 234px,#44ff97 245px,#5fff95 256px,#7cff92 267px,#9bff8f 279px,#bbff8c 290px,#deff88 301px,#fffc83 312px,#ffdb6e 323px,#ffc05e 334px,#ffaa50 345px,#ff9744 356px,#ff873a 368px,#ff7932 379px,#ff6d2a 390px,#ff6324 401px,#ff591e 412px,#ff5119 423px,#ff4914 434px,#ff4210 446px,#ff3c0c 457px,#ff3608 468px,#ff3105 479px,#ff2c02 490px,#ff2800 501px)"></i><i style="top:270px;height:3px;background:linear-gradient(90deg,#00ffa5 211px,#11ffa3 221px,#2affa1 232px,#44ff9e 243px,#5fff9c 254px,#7cff99 265px,#9bff96 276px,#bbff93 287px,#deff90 298px,#fffc8b 309px,#ffdb75 320px,#ffc064 331px,#ffaa56 342px,#ff974a 353px,#ff873f 364px,#ff7936 375px,#ff6d2f 386px,#ff6228 397px,#ff5922 408px,#ff511c 419px,#ff4917 430px,#ff4213 441px,#ff3c0f 452px,#ff360b 463px,#ff3108 474px,#ff2c05 485px,#ff2802 496px,#ff2400 507px)"></i><i style="top:273px;height:3px;background:linear-gradient(90deg,#00ffac 209px,#11ffaa 220px,#2affa7 231px,#44ffa5 242px,#5fffa3 253px,#7cffa0 263px,#9bff9e 274px,#bbff9b 285px,#deff98 296px,#fffc93 307px,#ffdb7c 318px,#ffc06b 328px,#ffaa5c 339px,#ff974f 350px,#ff8744 361px,#ff793b 372px,#ff6d33 382px,#ff622c 393px,#ff5925 404px,#ff5020 415px,#ff491b 426px,#ff4216 437px,#ff3c12 447px,#ff360e 458px,#ff310b 469px,#ff2c08 480px,#ff2805 491px,#ff2402 501px,#ff2000 512px)"></i><i style="top:276px;height:3px;background:linear-gradient(90deg,#00ffb2 208px,#12ffb0 219px,#2cffae 230px,#47ffac 241px,#64ffaa 252px,#82ffa7 263px,#a2ffa5 274px,#c4ffa2 286px,#e9ff9f 297px,#ffef93 308px,#ffd07c 319px,#ffb66a 330px,#ffa15c 341px,#ff8f4f 352px,#ff7f44 363px,#ff723b 374px,#ff6633 385px,#ff5c2c 396px,#ff5325 407px,#ff4b20 418px,#ff441b 429px,#ff3d16 440px,#ff3712 451px,#ff320e 463px,#ff2d0b 474px,#ff2808 485px,#ff2405 496px,#ff2002 507px,#ff1c00 518px)"></i><i style="top:279px;height:3px;background:linear-gradient(90deg,#00ffb9 207px,#12ffb7 218px,#2cffb5 229px,#47ffb3 240px,#64ffb1 251px,#82ffaf 261px,#a3ffad 272px,#c5ffaa 283px,#e9ffa8 294px,#ffef9a 305px,#ffcf84 316px,#ffb571 327px,#ffa061 338px,#ff8e54 349px,#ff7f49 360px,#ff7140 371px,#ff6637 382px,#ff5c30 392px,#ff5329 403px,#ff4a23 414px,#ff431e 425px,#ff3d19 436px,#ff3715 447px,#ff3111 458px,#ff2c0e 469px,#ff280a 480px,#ff2307 491px,#ff2004 502px,#ff1c02 513px,#ff1900 523px)"></i><i style="top:282px;height:3px;background:linear-gradient(90deg,#00ffc0 206px,#13ffbe 217px,#2effbd 228px,#4affbb 239px,#68ffb9 250px,#88ffb7 261px,#aaffb5 273px,#ceffb2 284px,#f5ffb0 295px,#ffe39a 306px,#ffc583 317px,#ffac71 328px,#ff9861 339px,#ff8654 351px,#ff7749 362px,#ff6b40 373px,#ff6037 384px,#ff5630 395px,#ff4d29 406px,#ff4523 417px,#ff3e1e 429px,#ff3819 440px,#ff3215 451px,#ff2d11 462px,#ff280e 473px,#ff240a 484px,#ff2007 496px,#ff1c04 507px,#ff1802 518px,#ff1500 529px)"></i><i style="top:285px;height:3px;background:linear-gradient(90deg,#00ffc7 204px,#13ffc6 215px,#2effc4 226px,#4affc3 237px,#68ffc1 248px,#88ffbf 259px,#abffbd 270px,#cfffbb 281px,#f6ffb9 292px,#ffe2a2 303px,#ffc48b 314px,#ffab77 325px,#ff9767 336px,#ff865a 347px,#ff774e 358px,#ff6a44 369px,#ff5f3c 380px,#ff5534 391px,#ff4d2d 402px,#ff4527 414px,#ff3e22 425px,#ff371d 436px,#ff3218 447px,#ff2d14 458px,#ff2810 469px,#ff230d 480px,#ff1f0a 491px,#ff1c07 502px,#ff1804 513px,#ff1502 524px,#ff1200 535px)"></i><i style="top:288px;height:3px;background:linear-gradient(90deg,#00ffcf 203px,#13ffce 214px,#2effcc 225px,#4affcb 236px,#69ffc9 247px,#89ffc8 258px,#abffc6 268px,#d0ffc4 279px,#f7ffc2 290px,#ffe1aa 301px,#ffc392 312px,#ffaa7e 323px,#ff966d 334px,#ff855f 344px,#ff7653 355px,#ff6949 366px,#ff5e40 377px,#ff5538 388px,#ff4c31 399px,#ff442b 410px,#ff3d25 421px,#ff3720 431px,#ff311b 442px,#ff2c17 453px,#ff2713 464px,#ff2310 475px,#ff1f0d 486px,#ff1b0a 497px,#ff1807 508px,#ff1404 518px,#ff1102 529px,#ff0f00 540px)"></i><i style="top:291px;height:3px;background:linear-gradient(90deg,#00ffd7 202px,#14ffd6 213px,#30ffd4 224px,#4effd3 235px,#6dffd2 246px,#8fffd1 257px,#b3ffcf 268px,#daffce 280px,#fffbc9 291px,#ffd7aa 302px,#ffb992 313px,#ffa27e 324px,#ff8e6d 335px,#ff7d5f 346px,#ff6f53 357px,#ff6349 368px,#ff5840 379px,#ff4f38 390px,#ff4731 402px,#ff3f2b 413px,#ff3825 424px,#ff3220 435px,#ff2d1b 446px,#ff2817 457px,#ff2313 468px,#ff1f10 479px,#ff1b0d 490px,#ff180a 501px,#ff1407 512px,#ff1104 524px,#ff0e02 535px,#ff0c00 546px)"></i><i style="top:294px;height:3px;background:linear-gradient(90deg,#00ffdf 201px,#14ffde 212px,#30ffdd 223px,#4effdc 234px,#6effdb 245px,#90ffda 255px,#b4ffd9 266px,#dbffd7 277px,#fffad2 288px,#ffd5b2 299px,#ffb899 310px,#ffa184 321px,#ff8d73 332px,#ff7d64 343px,#ff6e58 354px,#ff624e 365px,#ff5844 376px,#ff4e3c 387px,#ff4635 398px,#ff3f2e 409px,#ff3829 420px,#ff3223 431px,#ff2c1f 442px,#ff271a 453px,#ff2316 464px,#ff1f13 475px,#ff1b0f 486px,#ff170c 496px,#ff1409 507px,#ff1106 518px,#ff0e04 529px,#ff0b02 540px,#ff0900 551px)"></i><i style="top:297px;height:3px;background:linear-gradient(90deg,#00ffe7 199px,#14ffe6 211px,#32ffe6 222px,#51ffe5 233px,#73ffe4 244px,#96ffe3 255px,#bcffe3 266px,#e5ffe2 278px,#ffeed2 289px,#ffcbb2 300px,#ffaf99 311px,#ff9884 322px,#ff8573 333px,#ff7564 345px,#ff6858 356px,#ff5c4e 367px,#ff5244 378px,#ff493c 389px,#ff4135 400px,#ff3a2e 412px,#ff3329 423px,#ff2e23 434px,#ff281f 445px,#ff231a 456px,#ff1f16 467px,#ff1b13 479px,#ff170f 490px,#ff140c 501px,#ff1109 512px,#ff0e06 523px,#ff0b04 535px,#ff0802 546px,#ff0600 557px)"></i><i style="top:300px;height:3px;background:linear-gradient(90deg,#00fff0 198px,#14ffef 209px,#32ffef 220px,#52ffee 231px,#73ffee 242px,#97ffed 253px,#beffed 264px,#e7ffec 275px,#ffecdb 287px,#ffc9ba 298px,#ffaea0 309px,#ff978a 320px,#ff8479 331px,#ff746a 342px,#ff675d 353px,#ff5b52 364px,#ff5149 375px,#ff4840 386px,#ff4039 397px,#ff3932 408px,#ff332c 419px,#ff2d27 430px,#ff2822 441px,#ff231d 452px,#ff1f19 463px,#ff1a15 474px,#ff1712 485px,#ff130f 496px,#ff100c 507px,#ff0d09 518px,#ff0a06 529px,#ff0804 540px,#ff0502 551px,#ff0300 562px)"></i><i style="top:303px;height:3px;background:linear-gradient(90deg,#00fff9 197px,#15fff9 208px,#32fff8 219px,#52fff8 230px,#74fff8 241px,#98fff8 252px,#bffff8 262px,#e9fff8 273px,#ffeae3 284px,#ffc8c2 295px,#ffaca7 306px,#ff9691 317px,#ff837f 328px,#ff736f 339px,#ff6662 350px,#ff5a57 361px,#ff504d 372px,#ff4744 382px,#ff3f3d 393px,#ff3836 404px,#ff3230 415px,#ff2c2a 426px,#ff2725 437px,#ff2220 448px,#ff1e1c 459px,#ff1a18 470px,#ff1615 481px,#ff1311 492px,#ff100e 503px,#ff0d0b 513px,#ff0a09 524px,#ff0706 535px,#ff0504 546px,#ff0302 557px,#ff0100 568px)"></i><i style="top:306px;height:3px;background:linear-gradient(90deg,#00fcff 196px,#15fcff 207px,#33fcff 218px,#53fcff 228px,#75fbff 239px,#99fbff 250px,#c0fbff 261px,#e9fbff 272px,#ffe6ea 283px,#ffc3c7 294px,#ffa8ac 305px,#ff9295 316px,#ff8083 326px,#ff7073 337px,#ff6366 348px,#ff585a 359px,#ff4e50 370px,#ff4547 381px,#ff3d3f 392px,#ff3638 403px,#ff3032 413px,#ff2a2c 424px,#ff2527 435px,#ff2122 446px,#ff1c1e 457px,#ff181a 468px,#ff1516 479px,#ff1113 490px,#ff0e10 501px,#ff0b0d 511px,#ff090a 522px,#ff0608 533px,#ff0405 544px,#ff0203 555px,#ff0001 566px)"></i><i style="top:309px;height:3px;background:linear-gradient(90deg,#00f3ff 195px,#15f3ff 206px,#32f2ff 217px,#52f2ff 228px,#74f1ff 239px,#98f1ff 250px,#bef0ff 261px,#e8efff 272px,#ffddec 283px,#ffbbc9 294px,#ffa1ad 305px,#ff8c97 316px,#ff7a84 327px,#ff6b74 338px,#ff5e67 349px,#ff535b 360px,#ff4951 371px,#ff4148 382px,#ff3940 393px,#ff3339 404px,#ff2d33 415px,#ff272d 426px,#ff2228 437px,#ff1e23 448px,#ff191f 459px,#ff161b 470px,#ff1217 481px,#ff0f14 492px,#ff0c10 503px,#ff090d 514px,#ff060b 525px,#ff0408 536px,#ff0206 547px,#ff0003 558px)"></i><i style="top:312px;height:3px;background:linear-gradient(90deg,#00eaff 193px,#15eaff 204px,#32e9ff 216px,#52e8ff 227px,#73e7ff 238px,#97e6ff 249px,#bde6ff 260px,#e6e5ff 271px,#ffd4ed 282px,#ffb4ca 294px,#ff9aae 305px,#ff8598 316px,#ff7485 327px,#ff6575 338px,#ff5968 349px,#ff4e5c 360px,#ff4552 372px,#ff3d49 383px,#ff3541 394px,#ff2f3a 405px,#ff2933 416px,#ff242e 427px,#ff1f28 438px,#ff1b24 450px,#ff161f 461px,#ff131b 472px,#ff0f18 483px,#ff0c14 494px,#ff0911 505px,#ff070e 516px,#ff040b 528px,#ff0209 539px,#ff0006 550px)"></i><i style="top:315px;height:3px;background:linear-gradient(90deg,#00e2ff 192px,#14e1ff 203px,#30e0ff 214px,#4edfff 225px,#6edeff 236px,#90ddff 247px,#b5dcff 258px,#dcdaff 269px,#ffd4f9 280px,#ffb4d5 290px,#ff9ab8 301px,#ff85a0 312px,#ff748d 323px,#ff657c 334px,#ff596e 345px,#ff4e62 356px,#ff4558 367px,#ff3d4e 378px,#ff3546 389px,#ff2f3f 400px,#ff2938 411px,#ff2432 422px,#ff1f2d 433px,#ff1a28 443px,#ff1623 454px,#ff131f 465px,#ff0f1b 476px,#ff0c17 487px,#ff0914 498px,#ff0711 509px,#ff040e 520px,#ff020b 531px,#ff0009 542px)"></i><i style="top:318px;height:3px;background:linear-gradient(90deg,#00daff 191px,#14d9ff 202px,#30d7ff 213px,#4ed6ff 224px,#6ed5ff 235px,#90d3ff 246px,#b4d2ff 257px,#dad0ff 268px,#ffcbfa 279px,#ffacd6 290px,#ff93b9 301px,#ff7fa1 313px,#ff6e8e 324px,#ff607d 335px,#ff546f 346px,#ff4a63 357px,#ff4158 368px,#ff394f 379px,#ff3247 390px,#ff2b3f 401px,#ff2639 412px,#ff2033 423px,#ff1c2d 434px,#ff1728 445px,#ff1424 456px,#ff101f 467px,#ff0d1b 478px,#ff0a18 490px,#ff0715 501px,#ff0411 512px,#ff020f 523px,#ff000c 534px)"></i><i style="top:321px;height:3px;background:linear-gradient(90deg,#00d2ff 190px,#13d0ff 200px,#2ecfff 211px,#4bceff 222px,#69ccff 233px,#8acbff 244px,#acc9ff 255px,#d1c7ff 266px,#f8c5ff 276px,#fface1 287px,#ff93c3 298px,#ff7faa 309px,#ff6e96 320px,#ff6085 331px,#ff5476 341px,#ff4a69 352px,#ff415e 363px,#ff3955 374px,#ff324c 385px,#ff2b44 396px,#ff263d 406px,#ff2037 417px,#ff1c31 428px,#ff172c 439px,#ff1427 450px,#ff1023 461px,#ff0d1f 472px,#ff0a1b 482px,#ff0718 493px,#ff0415 504px,#ff0212 515px,#ff000f 526px)"></i><i style="top:324px;height:3px;background:linear-gradient(90deg,#00caff 188px,#13c9ff 199px,#2ec7ff 210px,#4ac5ff 221px,#69c4ff 232px,#89c2ff 243px,#abc0ff 254px,#d0beff 265px,#f6bbff 276px,#ffa4e2 287px,#ff8cc4 298px,#ff78ab 309px,#ff6897 320px,#ff5b85 331px,#ff4f77 342px,#ff456a 353px,#ff3c5f 364px,#ff3455 375px,#ff2e4c 386px,#ff2845 397px,#ff223e 408px,#ff1d38 419px,#ff1932 430px,#ff142d 441px,#ff1128 452px,#ff0d23 463px,#ff0a1f 474px,#ff071c 485px,#ff0418 496px,#ff0215 507px,#ff0012 518px)"></i><i style="top:327px;height:3px;background:linear-gradient(90deg,#00c3ff 187px,#13c1ff 198px,#2ebfff 209px,#4abdff 221px,#69bbff 232px,#89b9ff 243px,#abb7ff 254px,#cfb5ff 265px,#f6b2ff 276px,#ff9ce3 287px,#ff85c4 298px,#ff72ac 310px,#ff6297 321px,#ff5586 332px,#ff4a77 343px,#ff406b 354px,#ff385f 365px,#ff3056 376px,#ff2a4d 387px,#ff2445 399px,#ff1f3e 410px,#ff1a38 421px,#ff1532 432px,#ff112d 443px,#ff0e28 454px,#ff0a24 465px,#ff0720 476px,#ff041c 487px,#ff0219 499px,#ff0015 510px)"></i><i style="top:330px;height:3px;background:linear-gradient(90deg,#00bcff 186px,#12baff 197px,#2cb8ff 208px,#47b6ff 219px,#64b4ff 230px,#83b1ff 240px,#a3afff 251px,#c6adff 262px,#eaaaff 273px,#ff9cee 284px,#ff85cf 295px,#ff72b5 306px,#ff62a0 317px,#ff558e 327px,#ff4a7e 338px,#ff4071 349px,#ff3866 360px,#ff305c 371px,#ff2a53 382px,#ff244a 393px,#ff1f43 404px,#ff1a3d 415px,#ff1537 425px,#ff1131 436px,#ff0e2c 447px,#ff0a28 458px,#ff0724 469px,#ff0420 480px,#ff021c 491px,#ff0019 502px)"></i><i style="top:333px;height:3px;background:linear-gradient(90deg,#00b5ff 185px,#12b3ff 196px,#2cb1ff 207px,#47aeff 218px,#64acff 229px,#82aaff 240px,#a3a7ff 251px,#c5a4ff 262px,#eaa1ff 273px,#ff94ef 284px,#ff7ecf 295px,#ff6cb5 306px,#ff5ca0 317px,#ff508e 328px,#ff457f 339px,#ff3c72 350px,#ff3366 361px,#ff2c5c 372px,#ff2653 383px,#ff204b 394px,#ff1b44 405px,#ff163d 416px,#ff1237 427px,#ff0e32 439px,#ff0b2d 450px,#ff0828 461px,#ff0524 472px,#ff0220 483px,#ff001c 494px)"></i><i style="top:336px;height:3px;background:linear-gradient(90deg,#00aeff 184px,#12acff 195px,#2caaff 206px,#47a7ff 217px,#64a5ff 228px,#82a2ff 239px,#a39fff 251px,#c59cff 262px,#e999ff 273px,#ff8cef 284px,#ff77cf 295px,#ff65b6 307px,#ff57a0 318px,#ff4a8e 329px,#ff407f 340px,#ff3772 351px,#ff2f66 363px,#ff285c 374px,#ff2253 385px,#ff1c4b 396px,#ff1844 407px,#ff133d 419px,#ff0f37 430px,#ff0b32 441px,#ff082d 452px,#ff0528 463px,#ff0224 474px,#ff0020 486px)"></i><i style="top:339px;height:3px;background:linear-gradient(90deg,#00a7ff 182px,#11a5ff 193px,#2aa3ff 204px,#44a0ff 215px,#609eff 226px,#7d9bff 237px,#9b98ff 248px,#bc95ff 259px,#de92ff 270px,#ff8cfb 281px,#ff77da 292px,#ff65c0 303px,#ff57a9 314px,#ff4a97 324px,#ff4087 335px,#ff3779 346px,#ff2f6d 357px,#ff2862 368px,#ff2259 379px,#ff1c51 390px,#ff1849 401px,#ff1342 412px,#ff0f3c 423px,#ff0b36 434px,#ff0831 445px,#ff052c 456px,#ff0228 467px,#ff0024 478px)"></i><i style="top:342px;height:3px;background:linear-gradient(90deg,#00a1ff 181px,#119fff 192px,#2a9cff 203px,#449aff 214px,#6097ff 225px,#7d94ff 237px,#9b91ff 248px,#bc8dff 259px,#de8aff 270px,#ff84fb 281px,#ff6fda 292px,#ff5fc0 303px,#ff51a9 314px,#ff4597 325px,#ff3b87 336px,#ff3279 348px,#ff2b6d 359px,#ff2462 370px,#ff1e59 381px,#ff1951 392px,#ff1449 403px,#ff1042 414px,#ff0c3c 425px,#ff0836 436px,#ff0531 447px,#ff022c 459px,#ff0028 470px)"></i><i style="top:345px;height:3px;background:linear-gradient(90deg,#009bff 180px,#1099ff 191px,#2896ff 201px,#4193ff 212px,#5c90ff 223px,#778dff 234px,#948aff 245px,#b387ff 256px,#d483ff 267px,#f680ff 277px,#ff70e6 288px,#ff5fca 299px,#ff51b3 310px,#ff45a0 321px,#ff3b8f 332px,#ff3281 342px,#ff2b74 353px,#ff2469 364px,#ff1e5f 375px,#ff1957 386px,#ff144f 397px,#ff1048 407px,#ff0c41 418px,#ff083b 429px,#ff0536 440px,#ff0231 451px,#ff002c 462px)"></i><i style="top:348px;height:3px;background:linear-gradient(90deg,#0095ff 179px,#1192ff 190px,#2890ff 201px,#418dff 212px,#5c8aff 223px,#7787ff 234px,#9583ff 245px,#b380ff 256px,#d47cff 267px,#f678ff 278px,#ff68e6 289px,#ff58ca 300px,#ff4bb3 311px,#ff409f 322px,#ff368f 333px,#ff2e81 344px,#ff2674 355px,#ff2069 366px,#ff1a5f 377px,#ff1556 388px,#ff114f 399px,#ff0c48 410px,#ff0941 421px,#ff053b 432px,#ff0236 443px,#ff0031 454px)"></i><i style="top:351px;height:3px;background:linear-gradient(90deg,#008fff 177px,#118cff 189px,#298aff 200px,#4287ff 211px,#5c83ff 222px,#7880ff 233px,#957dff 244px,#b479ff 256px,#d475ff 267px,#f771ff 278px,#ff61e5 289px,#ff52c9 300px,#ff45b2 311px,#ff3a9f 323px,#ff318f 334px,#ff2980 345px,#ff2274 356px,#ff1c69 367px,#ff165f 379px,#ff1156 390px,#ff0d4e 401px,#ff0947 412px,#ff0641 423px,#ff023b 434px,#ff0036 446px)"></i><i style="top:354px;height:3px;background:linear-gradient(90deg,#008aff 176px,#1087ff 187px,#2784ff 198px,#3f81ff 209px,#587eff 220px,#727aff 231px,#8e77ff 241px,#ab73ff 252px,#ca6fff 263px,#eb6bff 274px,#ff61f2 285px,#ff52d5 296px,#ff45bd 307px,#ff3aa8 318px,#ff3197 329px,#ff2988 340px,#ff227b 350px,#ff1c70 361px,#ff1666 372px,#ff115d 383px,#ff0d54 394px,#ff094d 405px,#ff0546 416px,#ff0240 427px,#ff003b 438px)"></i><i style="top:357px;height:3px;background:linear-gradient(90deg,#0084ff 175px,#1081ff 186px,#277eff 197px,#3f7bff 208px,#5878ff 219px,#7374ff 230px,#8e70ff 241px,#ac6dff 252px,#cb68ff 263px,#ec64ff 275px,#ff5af1 286px,#ff4bd4 297px,#ff3fbc 308px,#ff35a8 319px,#ff2c97 330px,#ff2488 341px,#ff1e7b 352px,#ff186f 363px,#ff1265 374px,#ff0e5c 385px,#ff0a54 396px,#ff064d 407px,#ff0246 418px,#ff0040 430px)"></i><i style="top:360px;height:3px;background:linear-gradient(90deg,#007fff 174px,#0f7cff 184px,#2579ff 195px,#3c76ff 206px,#5472ff 217px,#6d6fff 228px,#886bff 238px,#a467ff 249px,#c163ff 260px,#e05fff 271px,#ff5afe 281px,#ff4be0 292px,#ff3fc7 303px,#ff35b2 314px,#ff2ca0 325px,#ff2490 335px,#ff1d83 346px,#ff1877 357px,#ff126c 368px,#ff0e63 378px,#ff0a5a 389px,#ff0653 400px,#ff024c 411px,#ff0046 421px)"></i><i style="top:363px;height:3px;background:linear-gradient(90deg,#007aff 172px,#0f77ff 183px,#2573ff 194px,#3c70ff 205px,#546dff 216px,#6e69ff 227px,#8865ff 238px,#a461ff 249px,#c25dff 260px,#e159ff 271px,#ff53fd 282px,#ff45df 293px,#ff39c6 304px,#ff2fb1 315px,#ff279f 326px,#ff2090 337px,#ff1982 348px,#ff1476 359px,#ff0f6c 370px,#ff0a62 381px,#ff065a 392px,#ff0252 403px,#ff004b 413px)"></i><i style="top:366px;height:3px;background:linear-gradient(90deg,#0075ff 171px,#1071ff 182px,#266eff 194px,#3d6bff 205px,#5567ff 216px,#6e63ff 227px,#895fff 238px,#a55bff 249px,#c357ff 260px,#e252ff 272px,#ff4cfb 283px,#ff3fdd 294px,#ff33c5 305px,#ff2ab0 316px,#ff229e 327px,#ff1b8f 339px,#ff1581 350px,#ff0f75 361px,#ff0b6b 372px,#ff0662 383px,#ff0359 394px,#ff0052 405px)"></i><i style="top:369px;height:3px;background:linear-gradient(90deg,#0070ff 170px,#0f6dff 181px,#2469ff 192px,#3a66ff 202px,#5162ff 213px,#695fff 224px,#825bff 235px,#9d57ff 246px,#b952ff 257px,#d64eff 267px,#f549ff 278px,#ff3fea 289px,#ff33d0 300px,#ff2abb 311px,#ff22a8 322px,#ff1b98 332px,#ff158a 343px,#ff0f7e 354px,#ff0b73 365px,#ff0669 376px,#ff0360 387px,#ff0058 397px)"></i><i style="top:372px;height:3px;background:linear-gradient(90deg,#006bff 169px,#0f68ff 180px,#2464ff 191px,#3a61ff 202px,#525dff 213px,#6a59ff 224px,#8355ff 235px,#9e51ff 246px,#ba4cff 257px,#d848ff 268px,#f743ff 279px,#ff38e8 290px,#ff2dcf 301px,#ff24b9 312px,#ff1da7 323px,#ff1697 334px,#ff1089 345px,#ff0b7d 356px,#ff0772 367px,#ff0368 378px,#ff005f 389px)"></i><i style="top:375px;height:3px;background:linear-gradient(90deg,#0066ff 168px,#0f63ff 179px,#255fff 190px,#3b5cff 201px,#5258ff 213px,#6b54ff 224px,#8550ff 235px,#a04bff 246px,#bc47ff 258px,#da42ff 269px,#f93cff 280px,#ff32e6 291px,#ff28cd 303px,#ff1fb7 314px,#ff18a5 325px,#ff1195 336px,#ff0c87 348px,#ff077b 359px,#ff0370 370px,#ff0067 381px)"></i><i style="top:378px;height:3px;background:linear-gradient(90deg,#0062ff 166px,#0e5eff 177px,#235bff 188px,#3857ff 199px,#4e54ff 210px,#6550ff 221px,#7e4cff 232px,#9747ff 243px,#b243ff 253px,#ce3eff 264px,#eb39ff 275px,#ff32f4 286px,#ff28da 297px,#ff1fc3 308px,#ff18b0 319px,#ff119f 330px,#ff0c91 341px,#ff0784 352px,#ff0379 362px,#ff006f 373px)"></i><i style="top:381px;height:3px;background:linear-gradient(90deg,#005dff 165px,#0e5aff 176px,#2356ff 187px,#3953ff 198px,#4f4fff 210px,#664bff 221px,#7f46ff 232px,#9942ff 243px,#b43dff 254px,#d038ff 265px,#ee33ff 276px,#ff2bf2 287px,#ff22d7 299px,#ff1ac1 310px,#ff13ae 321px,#ff0d9d 332px,#ff088f 343px,#ff0382 354px,#ff0077 365px)"></i><i style="top:384px;height:3px;background:linear-gradient(90deg,#0059ff 164px,#0e56ff 175px,#2152ff 185px,#364eff 196px,#4b4bff 207px,#6147ff 218px,#7843ff 228px,#903eff 239px,#aa3aff 250px,#c435ff 261px,#e030ff 271px,#fd2bff 282px,#ff22e5 293px,#ff1ace 304px,#ff13ba 314px,#ff0da8 325px,#ff0899 336px,#ff038c 347px,#ff0080 357px)"></i><i style="top:387px;height:3px;background:linear-gradient(90deg,#0055ff 163px,#0e51ff 174px,#224eff 185px,#364aff 196px,#4c46ff 207px,#6242ff 218px,#7a3eff 229px,#9239ff 239px,#ac34ff 250px,#c730ff 261px,#e32aff 272px,#ff25fe 283px,#ff1ce2 294px,#ff14cb 305px,#ff0eb7 316px,#ff08a6 327px,#ff0397 338px,#ff008a 349px)"></i><i style="top:390px;height:3px;background:linear-gradient(90deg,#0051ff 161px,#0e4dff 173px,#2249ff 184px,#3745ff 195px,#4d41ff 206px,#643dff 218px,#7b39ff 229px,#9434ff 240px,#ae2fff 251px,#ca2aff 263px,#e625ff 274px,#ff1efa 285px,#ff16df 296px,#ff0fc8 308px,#ff09b4 319px,#ff03a3 330px,#ff0095 341px)"></i><i style="top:393px;height:3px;background:linear-gradient(90deg,#004dff 160px,#0d49ff 171px,#2045ff 182px,#3442ff 193px,#493eff 203px,#5e3aff 214px,#7435ff 225px,#8c31ff 236px,#a42cff 247px,#bd27ff 258px,#d822ff 268px,#f41dff 279px,#ff16ee 290px,#ff0fd6 301px,#ff09c1 312px,#ff03b0 322px,#ff00a0 333px)"></i><i style="top:396px;height:3px;background:linear-gradient(90deg,#0049ff 159px,#0e45ff 170px,#2141ff 181px,#353dff 192px,#4a39ff 203px,#5f35ff 214px,#7631ff 225px,#8e2cff 237px,#a727ff 248px,#c022ff 259px,#dc1dff 270px,#f817ff 281px,#ff10ea 292px,#ff09d2 303px,#ff04be 314px,#ff00ac 325px)"></i><i style="top:399px;height:3px;background:linear-gradient(90deg,#0045ff 158px,#0d41ff 168px,#1f3eff 179px,#323aff 190px,#4536ff 200px,#5a32ff 211px,#6f2eff 222px,#8529ff 232px,#9c25ff 243px,#b420ff 253px,#cd1bff 264px,#e816ff 275px,#ff10fb 285px,#ff09e2 296px,#ff04cc 307px,#ff00ba 317px)"></i><i style="top:402px;height:3px;background:linear-gradient(90deg,#0041ff 156px,#0d3dff 167px,#1f3aff 178px,#3336ff 189px,#4732ff 200px,#5b2eff 211px,#7129ff 222px,#8725ff 233px,#9f20ff 244px,#b71bff 255px,#d116ff 266px,#ec10ff 276px,#ff0af6 287px,#ff04de 298px,#ff00c8 309px)"></i><i style="top:405px;height:3px;background:linear-gradient(90deg,#003dff 155px,#0d3aff 166px,#2036ff 178px,#3432ff 189px,#482eff 200px,#5d29ff 211px,#7325ff 223px,#8a20ff 234px,#a21bff 245px,#bb16ff 256px,#d610ff 268px,#f10bff 279px,#ff04f1 290px,#ff00d8 301px)"></i><i style="top:408px;height:3px;background:linear-gradient(90deg,#003aff 154px,#0c36ff 165px,#1e33ff 175px,#302fff 186px,#432bff 197px,#5727ff 208px,#6c22ff 218px,#811eff 229px,#9719ff 240px,#ae14ff 250px,#c70fff 261px,#e00aff 272px,#fa04ff 282px,#ff00ea 293px)"></i><i style="top:411px;height:3px;background:linear-gradient(90deg,#0036ff 153px,#0d33ff 164px,#1f2fff 175px,#312bff 186px,#4527ff 197px,#5922ff 208px,#6e1eff 219px,#8419ff 230px,#9b14ff 241px,#b30fff 252px,#cb0aff 263px,#e504ff 274px,#ff00fe 285px)"></i><i style="top:414px;height:3px;background:linear-gradient(90deg,#0033ff 152px,#0d2fff 163px,#202bff 174px,#3327ff 186px,#4723ff 197px,#5c1eff 209px,#7119ff 220px,#8814ff 231px,#9f0fff 243px,#b80aff 254px,#d104ff 266px,#ec00ff 277px)"></i><i style="top:417px;height:3px;background:linear-gradient(90deg,#0030ff 150px,#0c2cff 161px,#1d28ff 172px,#2f24ff 183px,#4220ff 194px,#551cff 204px,#6917ff 215px,#7d13ff 226px,#930eff 237px,#a909ff 248px,#c104ff 258px,#d900ff 269px)"></i><i style="top:420px;height:3px;background:linear-gradient(90deg,#002cff 149px,#0d28ff 160px,#1e24ff 172px,#3120ff 183px,#441cff 194px,#5718ff 205px,#6c13ff 216px,#810eff 227px,#9809ff 239px,#af04ff 250px,#c700ff 261px)"></i><i style="top:423px;height:3px;background:linear-gradient(90deg,#0029ff 148px,#0b25ff 158px,#1c22ff 169px,#2d1eff 179px,#3e1aff 190px,#5016ff 200px,#6311ff 211px,#770dff 222px,#8b08ff 232px,#a004ff 243px,#b600ff 253px)"></i><i style="top:426px;height:3px;background:linear-gradient(90deg,#0026ff 147px,#0c22ff 158px,#1d1eff 169px,#2e1aff 179px,#4016ff 190px,#5312ff 201px,#670dff 212px,#7b09ff 223px,#9004ff 234px,#a600ff 245px)"></i><i style="top:429px;height:3px;background:linear-gradient(90deg,#0023ff 145px,#0d1fff 157px,#1e1bff 168px,#3017ff 180px,#4312ff 191px,#570eff 203px,#6b09ff 214px,#8004ff 226px,#9600ff 237px)"></i><i style="top:432px;height:3px;background:linear-gradient(90deg,#0020ff 144px,#0b1cff 155px,#1b18ff 165px,#2c14ff 176px,#3d10ff 187px,#4e0cff 197px,#6108ff 208px,#7403ff 218px,#8700ff 229px)"></i><i style="top:435px;height:3px;background:linear-gradient(90deg,#001dff 143px,#0c19ff 154px,#1c15ff 165px,#2e11ff 176px,#400dff 188px,#5208ff 199px,#6504ff 210px,#7900ff 221px)"></i><i style="top:438px;height:3px;background:linear-gradient(90deg,#001aff 142px,#0d16ff 154px,#1e12ff 165px,#310dff 177px,#4409ff 189px,#5704ff 201px,#6c00ff 213px)"></i><i style="top:441px;height:3px;background:linear-gradient(90deg,#0017ff 141px,#0b13ff 151px,#1b10ff 162px,#2b0cff 173px,#3c07ff 183px,#4d03ff 194px,#5f00ff 205px)"></i><i style="top:444px;height:3px;background:linear-gradient(90deg,#0014ff 139px,#0c10ff 151px,#1d0cff 162px,#2e08ff 174px,#4003ff 185px,#5300ff 197px)"></i><i style="top:447px;height:3px;background:linear-gradient(90deg,#0012ff 138px,#0a0eff 148px,#180bff 158px,#2707ff 169px,#3703ff 179px,#4700ff 189px)"></i><i style="top:450px;height:3px;background:linear-gradient(90deg,#000fff 137px,#0b0bff 148px,#1b07ff 159px,#2b03ff 170px,#3b00ff 181px)"></i><i style="top:453px;height:3px;background:linear-gradient(90deg,#000cff 136px,#0d08ff 148px,#1e04ff 160px,#3100ff 173px)"></i><i style="top:456px;height:3px;background:linear-gradient(90deg,#000aff 134px,#0a06ff 145px,#1803ff 155px,#2600ff 165px)"></i><i style="top:459px;height:3px;background:linear-gradient(90deg,#0007ff 133px,#0c03ff 145px,#1c00ff 157px)"></i><i style="top:462px;height:3px;background:linear-gradient(90deg,#0005ff 132px,#0702ff 140px,#1300ff 149px)"></i><i style="top:465px;height:3px;background:linear-gradient(90deg,#0002ff 131px,#0900ff 141px)"></i></div>
<svg class="a" style="left:0;top:0" width="1920" height="1030"><rect x="1430.9" y="457.4" width="15.2" height="13.6" fill="none" stroke="#f4f4f4" stroke-width="1.7"/><rect x="1430.9" y="457.4" width="15.2" height="13.6" fill="none" stroke="#f4f4f4" stroke-width="1.7"/><rect x="1430.9" y="457.4" width="15.2" height="13.6" fill="none" stroke="#f4f4f4" stroke-width="1.7"/><rect x="1430.9" y="457.4" width="15.2" height="13.6" fill="none" stroke="#f4f4f4" stroke-width="1.7"/><rect x="1430.9" y="457.4" width="15.2" height="13.6" fill="none" stroke="#f4f4f4" stroke-width="1.7"/><rect x="1508.0" y="436.3" width="15.2" height="13.6" fill="none" stroke="#f4f4f4" stroke-width="1.7"/><rect x="1490.3" y="441.2" width="15.2" height="13.6" fill="none" stroke="#f4f4f4" stroke-width="1.7"/><rect x="1375.0" y="495.3" width="15.2" height="13.6" fill="none" stroke="#f4f4f4" stroke-width="1.7"/><rect x="1454.8" y="398.4" width="15.2" height="13.6" fill="none" stroke="#f4f4f4" stroke-width="1.7"/><rect x="1391.0" y="503.1" width="15.2" height="13.6" fill="none" stroke="#f4f4f4" stroke-width="1.7"/><rect x="1386.6" y="437.5" width="15.2" height="13.6" fill="none" stroke="#f4f4f4" stroke-width="1.7"/><rect x="1607.3" y="411.1" width="15.2" height="13.6" fill="none" stroke="#f4f4f4" stroke-width="1.7"/><rect x="1345.8" y="539.9" width="15.2" height="13.6" fill="none" stroke="#f4f4f4" stroke-width="1.7"/><rect x="1563.0" y="467.0" width="15.2" height="13.6" fill="none" stroke="#f4f4f4" stroke-width="1.7"/><rect x="1410.5" y="522.4" width="15.2" height="13.6" fill="none" stroke="#f4f4f4" stroke-width="1.7"/><rect x="1486.7" y="358.7" width="15.2" height="13.6" fill="none" stroke="#f4f4f4" stroke-width="1.7"/><rect x="1573.6" y="391.2" width="15.2" height="13.6" fill="none" stroke="#f4f4f4" stroke-width="1.7"/><rect x="1323.6" y="570.5" width="15.2" height="13.6" fill="none" stroke="#f4f4f4" stroke-width="1.7"/><rect x="1423.8" y="361.1" width="15.2" height="13.6" fill="none" stroke="#f4f4f4" stroke-width="1.7"/><rect x="1629.5" y="464.6" width="15.2" height="13.6" fill="none" stroke="#f4f4f4" stroke-width="1.7"/><rect x="1549.7" y="370.1" width="15.2" height="13.6" fill="none" stroke="#f4f4f4" stroke-width="1.7"/><rect x="1485.0" y="506.8" width="15.2" height="13.6" fill="none" stroke="#f4f4f4" stroke-width="1.7"/><rect x="1337.8" y="492.9" width="15.2" height="13.6" fill="none" stroke="#f4f4f4" stroke-width="1.7"/><rect x="1720.8" y="456.8" width="15.2" height="13.6" fill="none" stroke="#f4f4f4" stroke-width="1.7"/><rect x="1419.4" y="294.3" width="15.2" height="13.6" fill="none" stroke="#f4f4f4" stroke-width="1.7"/><rect x="1286.4" y="619.3" width="15.2" height="13.6" fill="none" stroke="#f4f4f4" stroke-width="1.7"/><rect x="1352.9" y="457.4" width="15.2" height="13.6" fill="none" stroke="#f4f4f4" stroke-width="1.7"/><rect x="1438.0" y="562.7" width="15.2" height="13.6" fill="none" stroke="#f4f4f4" stroke-width="1.7"/><rect x="1524.9" y="351.5" width="15.2" height="13.6" fill="none" stroke="#f4f4f4" stroke-width="1.7"/><rect x="1432.7" y="459.2" width="13.5" height="12.4" fill="none" stroke="#000" stroke-width="2.3"/><ellipse cx="1424.8" cy="474.3" rx="5.4" ry="4.7" fill="#b4b4b4" stroke="#151515" stroke-width="1.1"/><ellipse cx="1425.7" cy="473.1" rx="5.4" ry="4.7" fill="#b0b0b0" stroke="#151515" stroke-width="1.1"/><ellipse cx="1425.7" cy="472.5" rx="5.4" ry="4.7" fill="#acacac" stroke="#151515" stroke-width="1.1"/><ellipse cx="1426.6" cy="472.5" rx="5.4" ry="4.7" fill="#a8a8a8" stroke="#151515" stroke-width="1.1"/><ellipse cx="1426.6" cy="472.5" rx="5.4" ry="4.7" fill="#a4a4a4" stroke="#151515" stroke-width="1.1"/><ellipse cx="1467.4" cy="477.9" rx="5.4" ry="4.7" fill="#000000" stroke="#151515" stroke-width="1.1"/><ellipse cx="1499.3" cy="441.8" rx="5.4" ry="4.7" fill="#6a4c3e" stroke="#151515" stroke-width="1.1"/><ellipse cx="1472.7" cy="451.5" rx="5.4" ry="4.7" fill="#c09484" stroke="#151515" stroke-width="1.1"/><ellipse cx="1377.8" cy="513.5" rx="5.4" ry="4.7" fill="#5c78a0" stroke="#151515" stroke-width="1.1"/><ellipse cx="1459.4" cy="404.5" rx="5.4" ry="4.7" fill="#566640" stroke="#151515" stroke-width="1.1"/><ellipse cx="1391.1" cy="518.9" rx="5.4" ry="4.7" fill="#8484b8" stroke="#151515" stroke-width="1.1"/><ellipse cx="1397.3" cy="456.9" rx="5.4" ry="4.7" fill="#62a898" stroke="#151515" stroke-width="1.1"/><ellipse cx="1591.5" cy="397.9" rx="5.4" ry="4.7" fill="#e08034" stroke="#151515" stroke-width="1.1"/><ellipse cx="1348.6" cy="561.6" rx="5.4" ry="4.7" fill="#404e90" stroke="#151515" stroke-width="1.1"/><ellipse cx="1537.4" cy="476.7" rx="5.4" ry="4.7" fill="#c05464" stroke="#151515" stroke-width="1.1"/><ellipse cx="1396.4" cy="545.4" rx="5.4" ry="4.7" fill="#583a68" stroke="#151515" stroke-width="1.1"/><ellipse cx="1494.8" cy="358.8" rx="5.4" ry="4.7" fill="#a2b24e" stroke="#151515" stroke-width="1.1"/><ellipse cx="1559.6" cy="377.4" rx="5.4" ry="4.7" fill="#e8a434" stroke="#151515" stroke-width="1.1"/><ellipse cx="1327.3" cy="593.5" rx="5.4" ry="4.7" fill="#323e84" stroke="#151515" stroke-width="1.1"/><ellipse cx="1442.5" cy="368.4" rx="5.4" ry="4.7" fill="#4a9a4e" stroke="#151515" stroke-width="1.1"/><ellipse cx="1616.3" cy="470.1" rx="5.4" ry="4.7" fill="#b03444" stroke="#151515" stroke-width="1.1"/><ellipse cx="1542.7" cy="358.2" rx="5.4" ry="4.7" fill="#f0c030" stroke="#151515" stroke-width="1.1"/><ellipse cx="1454.1" cy="528.5" rx="5.4" ry="4.7" fill="#b84e94" stroke="#151515" stroke-width="1.1"/><ellipse cx="1354.8" cy="512.9" rx="5.4" ry="4.7" fill="#0c90a8" stroke="#151515" stroke-width="1.1"/><ellipse cx="1723.6" cy="453.3" rx="5.4" ry="4.7" fill="#f8101c" stroke="#151515" stroke-width="1.1"/><ellipse cx="1451.4" cy="302.2" rx="5.4" ry="4.7" fill="#10f010" stroke="#151515" stroke-width="1.1"/><ellipse cx="1298.0" cy="633.8" rx="5.4" ry="4.7" fill="#1010f0" stroke="#151515" stroke-width="1.1"/><ellipse cx="1369.8" cy="478.6" rx="5.4" ry="4.7" fill="#10f4f4" stroke="#151515" stroke-width="1.1"/><ellipse cx="1406.2" cy="588.7" rx="5.4" ry="4.7" fill="#f410ec" stroke="#151515" stroke-width="1.1"/><ellipse cx="1527.6" cy="343.7" rx="5.4" ry="4.7" fill="#fcf000" stroke="#151515" stroke-width="1.1"/></svg>
<div class="a" style="left:1612px;top:630px;width:291px;height:28px;background:#333"></div>
<div class="t" id="rgbt" style="left:1614.00px;top:634.85px;font-size:21px;color:#f0f0f0;transform:scaleX(1.0808);">RGB Triplet: 255, 255, 0</div>
<div class="a" style="left:1644px;top:158.5px;width:262px;height:199px;background:#2c2c2c"></div>
<div class="a" style="left:1646.5px;top:163px;width:255px;height:192.5px;background:#232323;border:2px solid #8e8e8e;box-sizing:border-box"></div>
<div class="a cs" style="left:1648px;top:165px;width:252px;height:189px;overflow:hidden"><i style="top:0px;height:3px;background:linear-gradient(90deg,#669c00 0px,#6a9c00 18px,#6f9c00 36px,#749c00 54px,#789c00 72px,#7d9c00 90px,#829c00 108px,#879c00 126px,#8c9c00 144px,#919c00 162px,#969c00 180px,#9b9c00 198px,#9c9700 216px,#9c9200 234px,#9c8d00 252px)"></i><i style="top:3px;height:3px;background:linear-gradient(90deg,#669c00 0px,#6b9c00 18px,#6f9c00 36px,#749c00 54px,#799c00 72px,#7e9c00 90px,#839c00 108px,#889c00 126px,#8d9c00 144px,#929c00 162px,#979c00 180px,#9c9b00 198px,#9c9600 216px,#9c9100 234px,#9c8c00 252px)"></i><i style="top:6px;height:3px;background:linear-gradient(90deg,#679c00 0px,#6b9c00 18px,#709c00 36px,#759c00 54px,#7a9c00 72px,#7e9c00 90px,#839c00 108px,#889c00 126px,#8d9c00 144px,#929c00 162px,#989c00 180px,#9c9a00 198px,#9c9500 216px,#9c9000 234px,#9c8c00 252px)"></i><i style="top:9px;height:3px;background:linear-gradient(90deg,#679c00 0px,#6c9c00 18px,#719c00 36px,#759c00 54px,#7a9c00 72px,#7f9c00 90px,#849c00 108px,#899c00 126px,#8e9c00 144px,#939c00 162px,#989c00 180px,#9c9a00 198px,#9c9500 216px,#9c9000 234px,#9c8b00 252px)"></i><i style="top:12px;height:3px;background:linear-gradient(90deg,#689c00 0px,#6c9c00 18px,#719c00 36px,#769c00 54px,#7b9c00 72px,#809c00 90px,#849c00 108px,#899c00 126px,#8f9c00 144px,#949c00 162px,#999c00 180px,#9c9900 198px,#9c9400 216px,#9c8f00 234px,#9c8b00 252px)"></i><i style="top:15px;height:3px;background:linear-gradient(90deg,#689c00 0px,#6d9c00 18px,#729c00 36px,#769c00 54px,#7b9c00 72px,#809c00 90px,#859c00 108px,#8a9c00 126px,#8f9c00 144px,#949c00 162px,#9a9c00 180px,#9c9800 198px,#9c9300 216px,#9c8e00 234px,#9c8a00 252px)"></i><i style="top:18px;height:3px;background:linear-gradient(90deg,#699c00 0px,#6e9c00 18px,#729c00 36px,#779c00 54px,#7c9c00 72px,#819c00 90px,#869c00 108px,#8b9c00 126px,#909c00 144px,#959c00 162px,#9a9c00 180px,#9c9700 198px,#9c9300 216px,#9c8e00 234px,#9c8900 252px)"></i><i style="top:21px;height:3px;background:linear-gradient(90deg,#699c01 0px,#6e9c00 18px,#739c00 36px,#789c00 54px,#7c9c00 72px,#819c00 90px,#869c00 108px,#8b9c00 126px,#919c00 144px,#969c00 162px,#9b9c00 180px,#9c9700 198px,#9c9200 216px,#9c8d00 234px,#9c8900 252px)"></i><i style="top:24px;height:3px;background:linear-gradient(90deg,#6a9c01 0px,#6f9c00 18px,#739c00 36px,#789c00 54px,#7d9c00 72px,#829c00 90px,#879c00 108px,#8c9c00 126px,#919c00 144px,#969c00 162px,#9c9b00 180px,#9c9600 198px,#9c9100 216px,#9c8c00 234px,#9c8800 252px)"></i><i style="top:27px;height:3px;background:linear-gradient(90deg,#6a9c01 0px,#6f9c00 18px,#749c00 36px,#799c00 54px,#7e9c00 72px,#839c00 90px,#889c00 108px,#8d9c00 126px,#929c00 144px,#979c00 162px,#9c9b00 180px,#9c9500 198px,#9c9100 216px,#9c8c00 234px,#9c8700 252px)"></i><i style="top:30px;height:3px;background:linear-gradient(90deg,#6b9c01 0px,#709c00 18px,#759c00 36px,#799c00 54px,#7e9c00 72px,#839c00 90px,#889c00 108px,#8d9c00 126px,#939c00 144px,#989c00 162px,#9c9a00 180px,#9c9500 198px,#9c9000 216px,#9c8b00 234px,#9c8700 252px)"></i><i style="top:33px;height:3px;background:linear-gradient(90deg,#6c9c02 0px,#709c01 18px,#759c00 36px,#7a9c00 54px,#7f9c00 72px,#849c00 90px,#899c00 108px,#8e9c00 126px,#939c00 144px,#999c00 162px,#9c9900 180px,#9c9400 198px,#9c8f00 216px,#9c8b00 234px,#9c8600 252px)"></i><i style="top:36px;height:3px;background:linear-gradient(90deg,#6c9c02 0px,#719c01 18px,#769c00 36px,#7b9c00 54px,#7f9c00 72px,#859c00 90px,#8a9c00 108px,#8f9c00 126px,#949c00 144px,#999c00 162px,#9c9800 180px,#9c9300 198px,#9c8f00 216px,#9c8a00 234px,#9c8600 252px)"></i><i style="top:39px;height:3px;background:linear-gradient(90deg,#6d9c02 0px,#719c01 18px,#769c00 36px,#7b9c00 54px,#809c00 72px,#859c00 90px,#8a9c00 108px,#8f9c00 126px,#959c00 144px,#9a9c00 162px,#9c9800 180px,#9c9300 198px,#9c8e00 216px,#9c8900 234px,#9c8500 252px)"></i><i style="top:42px;height:3px;background:linear-gradient(90deg,#6d9c03 0px,#729c02 18px,#779c01 36px,#7c9c00 54px,#819c00 72px,#869c00 90px,#8b9c00 108px,#909c00 126px,#959c00 144px,#9b9c00 162px,#9c9700 180px,#9c9200 198px,#9c8d00 216px,#9c8900 234px,#9c8400 252px)"></i><i style="top:45px;height:3px;background:linear-gradient(90deg,#6e9c03 0px,#739c02 18px,#779c01 36px,#7c9c00 54px,#819c00 72px,#869c00 90px,#8c9c00 108px,#919c00 126px,#969c00 144px,#9b9c00 162px,#9c9600 180px,#9c9100 198px,#9c8d00 216px,#9c8800 234px,#9c8400 252px)"></i><i style="top:48px;height:3px;background:linear-gradient(90deg,#6e9c03 0px,#739c02 18px,#789c01 36px,#7d9c00 54px,#829c00 72px,#879c00 90px,#8c9c00 108px,#929c00 126px,#979c00 144px,#9c9b00 162px,#9c9600 180px,#9c9100 198px,#9c8c00 216px,#9c8700 234px,#9c8300 252px)"></i><i style="top:51px;height:3px;background:linear-gradient(90deg,#6f9c04 0px,#749c03 18px,#799c01 36px,#7e9c00 54px,#839c00 72px,#889c00 90px,#8d9c00 108px,#929c00 126px,#989c00 144px,#9c9a00 162px,#9c9500 180px,#9c9000 198px,#9c8b00 216px,#9c8700 234px,#9c8300 252px)"></i><i style="top:54px;height:3px;background:linear-gradient(90deg,#6f9c04 0px,#749c03 18px,#799c02 36px,#7e9c01 54px,#839c00 72px,#889c00 90px,#8e9c00 108px,#939c00 126px,#989c00 144px,#9c9900 162px,#9c9400 180px,#9c8f00 198px,#9c8b00 216px,#9c8600 234px,#9c8200 252px)"></i><i style="top:57px;height:3px;background:linear-gradient(90deg,#709c04 0px,#759c03 18px,#7a9c02 36px,#7f9c01 54px,#849c00 72px,#899c00 90px,#8e9c00 108px,#949c00 126px,#999c00 144px,#9c9900 162px,#9c9400 180px,#9c8f00 198px,#9c8a00 216px,#9c8600 234px,#9c8100 252px)"></i><i style="top:60px;height:3px;background:linear-gradient(90deg,#719c05 0px,#759c03 18px,#7a9c02 36px,#7f9c01 54px,#859c00 72px,#8a9c00 90px,#8f9c00 108px,#949c00 126px,#9a9c00 144px,#9c9800 162px,#9c9300 180px,#9c8e00 198px,#9c8900 216px,#9c8500 234px,#9c8100 252px)"></i><i style="top:63px;height:3px;background:linear-gradient(90deg,#719c05 0px,#769c04 18px,#7b9c03 36px,#809c02 54px,#859c01 72px,#8a9c00 90px,#909c00 108px,#959c00 126px,#9a9c00 144px,#9c9700 162px,#9c9200 180px,#9c8d00 198px,#9c8900 216px,#9c8400 234px,#9c8000 252px)"></i><i style="top:66px;height:3px;background:linear-gradient(90deg,#729c05 0px,#779c04 18px,#7c9c03 36px,#819c02 54px,#869c01 72px,#8b9c00 90px,#909c00 108px,#969c00 126px,#9b9c00 144px,#9c9700 162px,#9c9100 180px,#9c8d00 198px,#9c8800 216px,#9c8400 234px,#9c8000 252px)"></i><i style="top:69px;height:3px;background:linear-gradient(90deg,#729c05 0px,#779c04 18px,#7c9c03 36px,#819c02 54px,#869c01 72px,#8c9c00 90px,#919c00 108px,#969c00 126px,#9c9b00 144px,#9c9600 162px,#9c9100 180px,#9c8c00 198px,#9c8700 216px,#9c8300 234px,#9c7f00 252px)"></i><i style="top:72px;height:3px;background:linear-gradient(90deg,#739c06 0px,#789c05 18px,#7d9c04 36px,#829c03 54px,#879c01 72px,#8c9c00 90px,#929c00 108px,#979c00 126px,#9c9a00 144px,#9c9500 162px,#9c9000 180px,#9c8b00 198px,#9c8700 216px,#9c8200 234px,#9c7e00 252px)"></i><i style="top:75px;height:3px;background:linear-gradient(90deg,#739c06 0px,#789c05 18px,#7d9c04 36px,#839c03 54px,#889c02 72px,#8d9c01 90px,#929c00 108px,#989c00 126px,#9c9a00 144px,#9c9400 162px,#9c8f00 180px,#9c8b00 198px,#9c8600 216px,#9c8200 234px,#9c7e00 252px)"></i><i style="top:78px;height:3px;background:linear-gradient(90deg,#749c06 0px,#799c05 18px,#7e9c04 36px,#839c03 54px,#889c02 72px,#8e9c01 90px,#939c00 108px,#999c00 126px,#9c9900 144px,#9c9400 162px,#9c8f00 180px,#9c8a00 198px,#9c8600 216px,#9c8100 234px,#9c7d00 252px)"></i><i style="top:81px;height:3px;background:linear-gradient(90deg,#759c07 0px,#7a9c06 18px,#7f9c05 36px,#849c04 54px,#899c02 72px,#8e9c01 90px,#949c00 108px,#999c00 126px,#9c9800 144px,#9c9300 162px,#9c8e00 180px,#9c8900 198px,#9c8500 216px,#9c8100 234px,#9c7d00 252px)"></i><i style="top:84px;height:3px;background:linear-gradient(90deg,#759c07 0px,#7a9c06 18px,#7f9c05 36px,#859c04 54px,#8a9c03 72px,#8f9c02 90px,#959c00 108px,#9a9c00 126px,#9c9800 144px,#9c9200 162px,#9c8d00 180px,#9c8900 198px,#9c8400 216px,#9c8000 234px,#9c7c00 252px)"></i><i style="top:87px;height:3px;background:linear-gradient(90deg,#769c07 0px,#7b9c06 18px,#809c05 36px,#859c04 54px,#8b9c03 72px,#909c02 90px,#959c01 108px,#9b9c00 126px,#9c9700 144px,#9c9200 162px,#9c8d00 180px,#9c8800 198px,#9c8400 216px,#9c7f00 234px,#9c7b00 252px)"></i><i style="top:90px;height:3px;background:linear-gradient(90deg,#769c08 0px,#7c9c07 18px,#819c06 36px,#869c05 54px,#8b9c03 72px,#919c02 90px,#969c01 108px,#9c9c00 126px,#9c9600 144px,#9c9100 162px,#9c8c00 180px,#9c8700 198px,#9c8300 216px,#9c7f00 234px,#9c7b00 252px)"></i><i style="top:93px;height:3px;background:linear-gradient(90deg,#779c08 0px,#7c9c07 18px,#819c06 36px,#879c05 54px,#8c9c04 72px,#919c03 90px,#979c01 108px,#9c9b00 126px,#9c9500 144px,#9c9000 162px,#9c8b00 180px,#9c8700 198px,#9c8200 216px,#9c7e00 234px,#9c7a00 252px)"></i><i style="top:96px;height:3px;background:linear-gradient(90deg,#789c08 0px,#7d9c07 18px,#829c06 36px,#879c05 54px,#8d9c04 72px,#929c03 90px,#989c02 108px,#9c9a01 126px,#9c9500 144px,#9c9000 162px,#9c8b00 180px,#9c8600 198px,#9c8200 216px,#9c7e00 234px,#9c7a00 252px)"></i><i style="top:99px;height:3px;background:linear-gradient(90deg,#789c09 0px,#7d9c08 18px,#839c07 36px,#889c06 54px,#8d9c04 72px,#939c03 90px,#989c02 108px,#9c9901 126px,#9c9400 144px,#9c8f00 162px,#9c8a00 180px,#9c8600 198px,#9c8100 216px,#9c7d00 234px,#9c7900 252px)"></i><i style="top:102px;height:3px;background:linear-gradient(90deg,#799c09 0px,#7e9c08 18px,#839c07 36px,#899c06 54px,#8e9c05 72px,#939c04 90px,#999c02 108px,#9c9901 126px,#9c9300 144px,#9c8e00 162px,#9c8900 180px,#9c8500 198px,#9c8100 216px,#9c7c00 234px,#9c7900 252px)"></i><i style="top:105px;height:3px;background:linear-gradient(90deg,#7a9c09 0px,#7f9c08 18px,#849c07 36px,#899c06 54px,#8f9c05 72px,#949c04 90px,#9a9c03 108px,#9c9802 126px,#9c9300 144px,#9c8d00 162px,#9c8900 180px,#9c8400 198px,#9c8000 216px,#9c7c00 234px,#9c7800 252px)"></i><i style="top:108px;height:3px;background:linear-gradient(90deg,#7a9c0a 0px,#7f9c09 18px,#859c08 36px,#8a9c07 54px,#8f9c05 72px,#959c04 90px,#9a9c03 108px,#9c9702 126px,#9c9201 144px,#9c8d00 162px,#9c8800 180px,#9c8400 198px,#9c7f00 216px,#9c7b00 234px,#9c7700 252px)"></i><i style="top:111px;height:3px;background:linear-gradient(90deg,#7b9c0a 0px,#809c09 18px,#859c08 36px,#8b9c07 54px,#909c06 72px,#969c05 90px,#9b9c04 108px,#9c9602 126px,#9c9101 144px,#9c8c00 162px,#9c8700 180px,#9c8300 198px,#9c7f00 216px,#9c7b00 234px,#9c7700 252px)"></i><i style="top:114px;height:3px;background:linear-gradient(90deg,#7b9c0b 0px,#819c09 18px,#869c08 36px,#8b9c07 54px,#919c06 72px,#969c05 90px,#9c9b04 108px,#9c9603 126px,#9c9001 144px,#9c8b00 162px,#9c8700 180px,#9c8200 198px,#9c7e00 216px,#9c7a00 234px,#9c7600 252px)"></i><i style="top:117px;height:3px;background:linear-gradient(90deg,#7c9c0b 0px,#819c0a 18px,#879c09 36px,#8c9c08 54px,#929c06 72px,#979c05 90px,#9c9a04 108px,#9c9503 126px,#9c9002 144px,#9c8b01 162px,#9c8600 180px,#9c8200 198px,#9c7e00 216px,#9c7a00 234px,#9c7600 252px)"></i><i style="top:120px;height:3px;background:linear-gradient(90deg,#7d9c0b 0px,#829c0a 18px,#879c09 36px,#8d9c08 54px,#929c07 72px,#989c06 90px,#9c9a04 108px,#9c9403 126px,#9c8f02 144px,#9c8a01 162px,#9c8500 180px,#9c8100 198px,#9c7d00 216px,#9c7900 234px,#9c7500 252px)"></i><i style="top:123px;height:3px;background:linear-gradient(90deg,#7d9c0c 0px,#839c0b 18px,#889c09 36px,#8d9c08 54px,#939c07 72px,#999c06 90px,#9c9905 108px,#9c9304 126px,#9c8e02 144px,#9c8901 162px,#9c8500 180px,#9c8000 198px,#9c7c00 216px,#9c7800 234px,#9c7500 252px)"></i><i style="top:126px;height:3px;background:linear-gradient(90deg,#7e9c0c 0px,#839c0b 18px,#899c0a 36px,#8e9c09 54px,#949c08 72px,#999c06 90px,#9c9805 108px,#9c9304 126px,#9c8e03 144px,#9c8901 162px,#9c8400 180px,#9c8000 198px,#9c7c00 216px,#9c7800 234px,#9c7400 252px)"></i><i style="top:129px;height:3px;background:linear-gradient(90deg,#7f9c0c 0px,#849c0b 18px,#899c0a 36px,#8f9c09 54px,#949c08 72px,#9a9c07 90px,#9c9705 108px,#9c9204 126px,#9c8d03 144px,#9c8802 162px,#9c8401 180px,#9c7f00 198px,#9c7b00 216px,#9c7700 234px,#9c7300 252px)"></i><i style="top:132px;height:3px;background:linear-gradient(90deg,#7f9c0d 0px,#859c0c 18px,#8a9c0b 36px,#909c09 54px,#959c08 72px,#9b9c07 90px,#9c9706 108px,#9c9104 126px,#9c8c03 144px,#9c8702 162px,#9c8301 180px,#9c7f00 198px,#9c7b00 216px,#9c7700 234px,#9c7300 252px)"></i><i style="top:135px;height:3px;background:linear-gradient(90deg,#809c0d 0px,#859c0c 18px,#8b9c0b 36px,#909c0a 54px,#969c09 72px,#9c9b07 90px,#9c9606 108px,#9c9105 126px,#9c8c04 144px,#9c8702 162px,#9c8201 180px,#9c7e00 198px,#9c7a00 216px,#9c7600 234px,#9c7200 252px)"></i><i style="top:138px;height:3px;background:linear-gradient(90deg,#819c0d 0px,#869c0c 18px,#8b9c0b 36px,#919c0a 54px,#979c09 72px,#9c9b08 90px,#9c9506 108px,#9c9005 126px,#9c8b04 144px,#9c8603 162px,#9c8202 180px,#9c7d00 198px,#9c7900 216px,#9c7500 234px,#9c7200 252px)"></i><i style="top:141px;height:3px;background:linear-gradient(90deg,#819c0e 0px,#879c0d 18px,#8c9c0c 36px,#929c0b 54px,#979c09 72px,#9c9a08 90px,#9c9407 108px,#9c8f05 126px,#9c8a04 144px,#9c8503 162px,#9c8102 180px,#9c7d01 198px,#9c7900 216px,#9c7500 234px,#9c7100 252px)"></i><i style="top:144px;height:3px;background:linear-gradient(90deg,#829c0e 0px,#879c0d 18px,#8d9c0c 36px,#939c0b 54px,#989c0a 72px,#9c9908 90px,#9c9407 108px,#9c8e06 126px,#9c8904 144px,#9c8503 162px,#9c8002 180px,#9c7c01 198px,#9c7800 216px,#9c7400 234px,#9c7100 252px)"></i><i style="top:147px;height:3px;background:linear-gradient(90deg,#839c0f 0px,#889c0d 18px,#8e9c0c 36px,#939c0b 54px,#999c0a 72px,#9c9809 90px,#9c9307 108px,#9c8e06 126px,#9c8905 144px,#9c8404 162px,#9c8002 180px,#9c7c01 198px,#9c7800 216px,#9c7400 234px,#9c7000 252px)"></i><i style="top:150px;height:3px;background:linear-gradient(90deg,#839c0f 0px,#899c0e 18px,#8e9c0d 36px,#949c0c 54px,#9a9c0b 72px,#9c9809 90px,#9c9208 108px,#9c8d06 126px,#9c8805 144px,#9c8404 162px,#9c7f03 180px,#9c7b02 198px,#9c7701 216px,#9c7300 234px,#9c7000 252px)"></i><i style="top:153px;height:3px;background:linear-gradient(90deg,#849c0f 0px,#899c0e 18px,#8f9c0d 36px,#959c0c 54px,#9b9c0b 72px,#9c9709 90px,#9c9108 108px,#9c8c07 126px,#9c8705 144px,#9c8304 162px,#9c7e03 180px,#9c7a02 198px,#9c7601 216px,#9c7300 234px,#9c6f00 252px)"></i><i style="top:156px;height:3px;background:linear-gradient(90deg,#859c10 0px,#8a9c0f 18px,#909c0e 36px,#969c0c 54px,#9b9c0b 72px,#9c960a 90px,#9c9108 108px,#9c8c07 126px,#9c8706 144px,#9c8204 162px,#9c7e03 180px,#9c7a02 198px,#9c7601 216px,#9c7200 234px,#9c6f00 252px)"></i><i style="top:159px;height:3px;background:linear-gradient(90deg,#859c10 0px,#8b9c0f 18px,#919c0e 36px,#969c0d 54px,#9c9b0c 72px,#9c950a 90px,#9c9009 108px,#9c8b07 126px,#9c8606 144px,#9c8205 162px,#9c7d04 180px,#9c7902 198px,#9c7501 216px,#9c7200 234px,#9c6e00 252px)"></i><i style="top:162px;height:3px;background:linear-gradient(90deg,#869c10 0px,#8c9c0f 18px,#919c0e 36px,#979c0d 54px,#9c9a0c 72px,#9c950a 90px,#9c8f09 108px,#9c8a08 126px,#9c8506 144px,#9c8105 162px,#9c7d04 180px,#9c7903 198px,#9c7502 216px,#9c7101 234px,#9c6d00 252px)"></i><i style="top:165px;height:3px;background:linear-gradient(90deg,#879c11 0px,#8c9c10 18px,#929c0f 36px,#989c0e 54px,#9c990c 72px,#9c940b 90px,#9c8f09 108px,#9c8a08 126px,#9c8507 144px,#9c8005 162px,#9c7c04 180px,#9c7803 198px,#9c7402 216px,#9c7001 234px,#9c6d00 252px)"></i><i style="top:168px;height:3px;background:linear-gradient(90deg,#879c11 0px,#8d9c10 18px,#939c0f 36px,#999c0e 54px,#9c990d 72px,#9c930b 90px,#9c8e0a 108px,#9c8908 126px,#9c8407 144px,#9c8006 162px,#9c7b04 180px,#9c7703 198px,#9c7402 216px,#9c7001 234px,#9c6c00 252px)"></i><i style="top:171px;height:3px;background:linear-gradient(90deg,#889c12 0px,#8e9c11 18px,#949c0f 36px,#999c0e 54px,#9c980d 72px,#9c920b 90px,#9c8d0a 108px,#9c8808 126px,#9c8307 144px,#9c7f06 162px,#9c7b05 180px,#9c7704 198px,#9c7303 216px,#9c6f01 234px,#9c6c01 252px)"></i><i style="top:174px;height:3px;background:linear-gradient(90deg,#899c12 0px,#8f9c11 18px,#949c10 36px,#9a9c0f 54px,#9c970d 72px,#9c920c 90px,#9c8c0a 108px,#9c8709 126px,#9c8307 144px,#9c7e06 162px,#9c7a05 180px,#9c7604 198px,#9c7203 216px,#9c6f02 234px,#9c6b01 252px)"></i><i style="top:177px;height:3px;background:linear-gradient(90deg,#8a9c12 0px,#8f9c11 18px,#959c10 36px,#9b9c0f 54px,#9c960e 72px,#9c910c 90px,#9c8c0a 108px,#9c8709 126px,#9c8208 144px,#9c7e06 162px,#9c7a05 180px,#9c7604 198px,#9c7203 216px,#9c6e02 234px,#9c6b01 252px)"></i><i style="top:180px;height:3px;background:linear-gradient(90deg,#8a9c13 0px,#909c12 18px,#969c11 36px,#9c9b10 54px,#9c960e 72px,#9c900c 90px,#9c8b0b 108px,#9c8609 126px,#9c8108 144px,#9c7d07 162px,#9c7906 180px,#9c7504 198px,#9c7103 216px,#9c6e02 234px,#9c6a01 252px)"></i><i style="top:183px;height:3px;background:linear-gradient(90deg,#8b9c13 0px,#919c12 18px,#979c11 36px,#9c9b10 54px,#9c950e 72px,#9c8f0d 90px,#9c8a0b 108px,#9c850a 126px,#9c8108 144px,#9c7c07 162px,#9c7806 180px,#9c7405 198px,#9c7104 216px,#9c6d03 234px,#9c6a02 252px)"></i><i style="top:186px;height:3px;background:linear-gradient(90deg,#8c9c14 0px,#929c13 18px,#979c11 36px,#9c9a10 54px,#9c940e 72px,#9c8f0d 90px,#9c8a0b 108px,#9c850a 126px,#9c8009 144px,#9c7c07 162px,#9c7806 180px,#9c7405 198px,#9c7004 216px,#9c6d03 234px,#9c6902 252px)"></i></div>
<div class="a cs" style="left:1648px;top:165px;width:252px;height:189px;overflow:hidden;clip-path:path('M-395.6 -218.6 L1089.8 665.6 L1089.8 2000 L-395.6 2000Z')"><i style="top:0px;height:3px;background:linear-gradient(90deg,#a7ff00 0px,#aeff00 18px,#b6ff00 36px,#beff00 54px,#c5ff00 72px,#cdff00 90px,#d5ff00 108px,#ddff00 126px,#e5ff00 144px,#eeff00 162px,#f6ff00 180px,#ffff00 198px,#fff700 216px,#ffef00 234px,#ffe700 252px)"></i><i style="top:3px;height:3px;background:linear-gradient(90deg,#a8ff00 0px,#afff00 18px,#b7ff00 36px,#beff00 54px,#c6ff00 72px,#ceff00 90px,#d6ff00 108px,#deff00 126px,#e6ff00 144px,#efff00 162px,#f7ff00 180px,#fffe00 198px,#fff600 216px,#ffee00 234px,#ffe600 252px)"></i><i style="top:6px;height:3px;background:linear-gradient(90deg,#a9ff00 0px,#b0ff00 18px,#b8ff00 36px,#bfff00 54px,#c7ff00 72px,#cfff00 90px,#d7ff00 108px,#dfff00 126px,#e8ff00 144px,#f0ff00 162px,#f8ff00 180px,#fffd00 198px,#fff500 216px,#ffed00 234px,#ffe500 252px)"></i><i style="top:9px;height:3px;background:linear-gradient(90deg,#a9ff00 0px,#b1ff00 18px,#b9ff00 36px,#c0ff00 54px,#c8ff00 72px,#d0ff00 90px,#d8ff00 108px,#e0ff00 126px,#e9ff00 144px,#f1ff00 162px,#faff00 180px,#fffc00 198px,#fff300 216px,#ffec00 234px,#ffe400 252px)"></i><i style="top:12px;height:3px;background:linear-gradient(90deg,#aaff00 0px,#b2ff00 18px,#b9ff00 36px,#c1ff00 54px,#c9ff00 72px,#d1ff00 90px,#d9ff00 108px,#e1ff00 126px,#eaff00 144px,#f2ff00 162px,#fbff00 180px,#fffb00 198px,#fff200 216px,#ffeb00 234px,#ffe300 252px)"></i><i style="top:15px;height:3px;background:linear-gradient(90deg,#abff00 0px,#b3ff00 18px,#baff00 36px,#c2ff00 54px,#caff00 72px,#d2ff00 90px,#daff00 108px,#e2ff00 126px,#ebff00 144px,#f3ff00 162px,#fcff00 180px,#fff900 198px,#fff100 216px,#ffe900 234px,#ffe200 252px)"></i><i style="top:18px;height:3px;background:linear-gradient(90deg,#acff00 0px,#b4ff00 18px,#bbff00 36px,#c3ff00 54px,#cbff00 72px,#d3ff00 90px,#dbff00 108px,#e4ff00 126px,#ecff00 144px,#f4ff00 162px,#fdff00 180px,#fff800 198px,#fff000 216px,#ffe800 234px,#ffe100 252px)"></i><i style="top:21px;height:3px;background:linear-gradient(90deg,#adff01 0px,#b4ff00 18px,#bcff00 36px,#c4ff00 54px,#ccff00 72px,#d4ff00 90px,#dcff00 108px,#e5ff00 126px,#edff00 144px,#f6ff00 162px,#feff00 180px,#fff700 198px,#ffef00 216px,#ffe700 234px,#ffe000 252px)"></i><i style="top:24px;height:3px;background:linear-gradient(90deg,#aeff01 0px,#b5ff00 18px,#bdff00 36px,#c5ff00 54px,#cdff00 72px,#d5ff00 90px,#ddff00 108px,#e6ff00 126px,#eeff00 144px,#f7ff00 162px,#ffff00 180px,#fff600 198px,#ffee00 216px,#ffe600 234px,#ffdf00 252px)"></i><i style="top:27px;height:3px;background:linear-gradient(90deg,#afff02 0px,#b6ff00 18px,#beff00 36px,#c6ff00 54px,#ceff00 72px,#d6ff00 90px,#deff00 108px,#e7ff00 126px,#efff00 144px,#f8ff00 162px,#fffd00 180px,#fff500 198px,#ffed00 216px,#ffe500 234px,#ffde00 252px)"></i><i style="top:30px;height:3px;background:linear-gradient(90deg,#afff02 0px,#b7ff01 18px,#bfff00 36px,#c7ff00 54px,#cfff00 72px,#d7ff00 90px,#dfff00 108px,#e8ff00 126px,#f0ff00 144px,#f9ff00 162px,#fffc00 180px,#fff400 198px,#ffec00 216px,#ffe400 234px,#ffdd00 252px)"></i><i style="top:33px;height:3px;background:linear-gradient(90deg,#b0ff03 0px,#b8ff01 18px,#c0ff00 36px,#c8ff00 54px,#d0ff00 72px,#d8ff00 90px,#e1ff00 108px,#e9ff00 126px,#f2ff00 144px,#faff00 162px,#fffb00 180px,#fff300 198px,#ffeb00 216px,#ffe300 234px,#ffdc00 252px)"></i><i style="top:36px;height:3px;background:linear-gradient(90deg,#b1ff03 0px,#b9ff02 18px,#c1ff00 36px,#c9ff00 54px,#d1ff00 72px,#d9ff00 90px,#e2ff00 108px,#eaff00 126px,#f3ff00 144px,#fbff00 162px,#fffa00 180px,#fff200 198px,#ffea00 216px,#ffe200 234px,#ffdb00 252px)"></i><i style="top:39px;height:3px;background:linear-gradient(90deg,#b2ff04 0px,#baff02 18px,#c2ff00 36px,#caff00 54px,#d2ff00 72px,#daff00 90px,#e3ff00 108px,#ebff00 126px,#f4ff00 144px,#fdff00 162px,#fff900 180px,#fff000 198px,#ffe900 216px,#ffe100 234px,#ffda00 252px)"></i><i style="top:42px;height:3px;background:linear-gradient(90deg,#b3ff04 0px,#bbff03 18px,#c3ff01 36px,#cbff00 54px,#d3ff00 72px,#dbff00 90px,#e4ff00 108px,#ecff00 126px,#f5ff00 144px,#feff00 162px,#fff800 180px,#ffef00 198px,#ffe800 216px,#ffe000 234px,#ffd900 252px)"></i><i style="top:45px;height:3px;background:linear-gradient(90deg,#b4ff05 0px,#bcff03 18px,#c4ff01 36px,#ccff00 54px,#d4ff00 72px,#dcff00 90px,#e5ff00 108px,#edff00 126px,#f6ff00 144px,#ffff00 162px,#fff600 180px,#ffee00 198px,#ffe600 216px,#ffdf00 234px,#ffd800 252px)"></i><i style="top:48px;height:3px;background:linear-gradient(90deg,#b5ff05 0px,#bdff04 18px,#c5ff02 36px,#cdff00 54px,#d5ff00 72px,#ddff00 90px,#e6ff00 108px,#efff00 126px,#f7ff00 144px,#fffe00 162px,#fff500 180px,#ffed00 198px,#ffe500 216px,#ffde00 234px,#ffd700 252px)"></i><i style="top:51px;height:3px;background:linear-gradient(90deg,#b6ff06 0px,#beff04 18px,#c6ff02 36px,#ceff01 54px,#d6ff00 72px,#dfff00 90px,#e7ff00 108px,#f0ff00 126px,#f8ff00 144px,#fffd00 162px,#fff400 180px,#ffec00 198px,#ffe400 216px,#ffdd00 234px,#ffd600 252px)"></i><i style="top:54px;height:3px;background:linear-gradient(90deg,#b7ff06 0px,#bfff05 18px,#c7ff03 36px,#cfff01 54px,#d7ff00 72px,#e0ff00 90px,#e8ff00 108px,#f1ff00 126px,#faff00 144px,#fffc00 162px,#fff300 180px,#ffeb00 198px,#ffe300 216px,#ffdc00 234px,#ffd500 252px)"></i><i style="top:57px;height:3px;background:linear-gradient(90deg,#b8ff07 0px,#c0ff05 18px,#c8ff03 36px,#d0ff02 54px,#d8ff00 72px,#e1ff00 90px,#e9ff00 108px,#f2ff00 126px,#fbff00 144px,#fffa00 162px,#fff200 180px,#ffea00 198px,#ffe200 216px,#ffdb00 234px,#ffd400 252px)"></i><i style="top:60px;height:3px;background:linear-gradient(90deg,#b9ff07 0px,#c1ff06 18px,#c9ff04 36px,#d1ff02 54px,#d9ff00 72px,#e2ff00 90px,#eaff00 108px,#f3ff00 126px,#fcff00 144px,#fff900 162px,#fff100 180px,#ffe900 198px,#ffe100 216px,#ffda00 234px,#ffd300 252px)"></i><i style="top:63px;height:3px;background:linear-gradient(90deg,#b9ff08 0px,#c2ff06 18px,#caff04 36px,#d2ff03 54px,#daff01 72px,#e3ff00 90px,#ecff00 108px,#f4ff00 126px,#fdff00 144px,#fff800 162px,#fff000 180px,#ffe800 198px,#ffe000 216px,#ffd900 234px,#ffd200 252px)"></i><i style="top:66px;height:3px;background:linear-gradient(90deg,#baff08 0px,#c3ff07 18px,#cbff05 36px,#d3ff03 54px,#dbff01 72px,#e4ff00 90px,#edff00 108px,#f5ff00 126px,#feff00 144px,#fff700 162px,#ffee00 180px,#ffe700 198px,#ffdf00 216px,#ffd800 234px,#ffd100 252px)"></i><i style="top:69px;height:3px;background:linear-gradient(90deg,#bbff09 0px,#c3ff07 18px,#ccff05 36px,#d4ff04 54px,#dcff02 72px,#e5ff00 90px,#eeff00 108px,#f7ff00 126px,#fffe00 144px,#fff600 162px,#ffed00 180px,#ffe500 198px,#ffde00 216px,#ffd700 234px,#ffd000 252px)"></i><i style="top:72px;height:3px;background:linear-gradient(90deg,#bcff0a 0px,#c4ff08 18px,#cdff06 36px,#d5ff04 54px,#deff02 72px,#e6ff01 90px,#efff00 108px,#f8ff00 126px,#fffd00 144px,#fff400 162px,#ffec00 180px,#ffe400 198px,#ffdd00 216px,#ffd600 234px,#ffcf00 252px)"></i><i style="top:75px;height:3px;background:linear-gradient(90deg,#bdff0a 0px,#c5ff08 18px,#ceff07 36px,#d6ff05 54px,#dfff03 72px,#e7ff01 90px,#f0ff00 108px,#f9ff00 126px,#fffc00 144px,#fff300 162px,#ffeb00 180px,#ffe300 198px,#ffdc00 216px,#ffd500 234px,#ffce00 252px)"></i><i style="top:78px;height:3px;background:linear-gradient(90deg,#beff0b 0px,#c6ff09 18px,#cfff07 36px,#d7ff05 54px,#e0ff03 72px,#e8ff02 90px,#f1ff00 108px,#faff00 126px,#fffb00 144px,#fff200 162px,#ffea00 180px,#ffe200 198px,#ffdb00 216px,#ffd400 234px,#ffcd00 252px)"></i><i style="top:81px;height:3px;background:linear-gradient(90deg,#bfff0b 0px,#c7ff09 18px,#d0ff08 36px,#d8ff06 54px,#e1ff04 72px,#eaff02 90px,#f2ff00 108px,#fbff00 126px,#fffa00 144px,#fff100 162px,#ffe900 180px,#ffe100 198px,#ffda00 216px,#ffd300 234px,#ffcc00 252px)"></i><i style="top:84px;height:3px;background:linear-gradient(90deg,#c0ff0c 0px,#c8ff0a 18px,#d1ff08 36px,#d9ff06 54px,#e2ff05 72px,#ebff03 90px,#f4ff01 108px,#fdff00 126px,#fff800 144px,#fff000 162px,#ffe800 180px,#ffe000 198px,#ffd900 216px,#ffd200 234px,#ffcb00 252px)"></i><i style="top:87px;height:3px;background:linear-gradient(90deg,#c1ff0c 0px,#c9ff0a 18px,#d2ff09 36px,#daff07 54px,#e3ff05 72px,#ecff03 90px,#f5ff01 108px,#feff00 126px,#fff700 144px,#ffef00 162px,#ffe700 180px,#ffdf00 198px,#ffd800 216px,#ffd100 234px,#ffca00 252px)"></i><i style="top:90px;height:3px;background:linear-gradient(90deg,#c2ff0d 0px,#cbff0b 18px,#d3ff09 36px,#dcff07 54px,#e4ff06 72px,#edff04 90px,#f6ff02 108px,#ffff00 126px,#fff600 144px,#ffee00 162px,#ffe600 180px,#ffde00 198px,#ffd700 216px,#ffd000 234px,#ffc900 252px)"></i><i style="top:93px;height:3px;background:linear-gradient(90deg,#c3ff0d 0px,#ccff0c 18px,#d4ff0a 36px,#ddff08 54px,#e5ff06 72px,#eeff04 90px,#f7ff02 108px,#fffe00 126px,#fff500 144px,#ffec00 162px,#ffe500 180px,#ffdd00 198px,#ffd600 216px,#ffcf00 234px,#ffc800 252px)"></i><i style="top:96px;height:3px;background:linear-gradient(90deg,#c4ff0e 0px,#cdff0c 18px,#d5ff0a 36px,#deff09 54px,#e6ff07 72px,#efff05 90px,#f8ff03 108px,#fffc01 126px,#fff400 144px,#ffeb00 162px,#ffe300 180px,#ffdc00 198px,#ffd500 216px,#ffce00 234px,#ffc800 252px)"></i><i style="top:99px;height:3px;background:linear-gradient(90deg,#c5ff0e 0px,#ceff0d 18px,#d6ff0b 36px,#dfff09 54px,#e8ff07 72px,#f1ff05 90px,#faff04 108px,#fffb02 126px,#fff200 144px,#ffea00 162px,#ffe200 180px,#ffdb00 198px,#ffd400 216px,#ffcd00 234px,#ffc700 252px)"></i><i style="top:102px;height:3px;background:linear-gradient(90deg,#c6ff0f 0px,#cfff0d 18px,#d7ff0b 36px,#e0ff0a 54px,#e9ff08 72px,#f2ff06 90px,#fbff04 108px,#fffa02 126px,#fff100 144px,#ffe900 162px,#ffe100 180px,#ffda00 198px,#ffd300 216px,#ffcc00 234px,#ffc600 252px)"></i><i style="top:105px;height:3px;background:linear-gradient(90deg,#c7ff10 0px,#d0ff0e 18px,#d8ff0c 36px,#e1ff0a 54px,#eaff08 72px,#f3ff07 90px,#fcff05 108px,#fff903 126px,#fff001 144px,#ffe800 162px,#ffe000 180px,#ffd900 198px,#ffd200 216px,#ffcb00 234px,#ffc500 252px)"></i><i style="top:108px;height:3px;background:linear-gradient(90deg,#c8ff10 0px,#d1ff0e 18px,#d9ff0d 36px,#e2ff0b 54px,#ebff09 72px,#f4ff07 90px,#fdff05 108px,#fff803 126px,#ffef01 144px,#ffe700 162px,#ffdf00 180px,#ffd800 198px,#ffd100 216px,#ffca00 234px,#ffc400 252px)"></i><i style="top:111px;height:3px;background:linear-gradient(90deg,#c9ff11 0px,#d2ff0f 18px,#daff0d 36px,#e3ff0b 54px,#ecff0a 72px,#f5ff08 90px,#ffff06 108px,#fff604 126px,#ffee02 144px,#ffe600 162px,#ffde00 180px,#ffd700 198px,#ffd000 216px,#ffc900 234px,#ffc300 252px)"></i><i style="top:114px;height:3px;background:linear-gradient(90deg,#caff11 0px,#d3ff10 18px,#dcff0e 36px,#e4ff0c 54px,#edff0a 72px,#f7ff08 90px,#fffe06 108px,#fff504 126px,#ffed02 144px,#ffe500 162px,#ffdd00 180px,#ffd600 198px,#ffcf00 216px,#ffc800 234px,#ffc200 252px)"></i><i style="top:117px;height:3px;background:linear-gradient(90deg,#cbff12 0px,#d4ff10 18px,#ddff0e 36px,#e6ff0d 54px,#efff0b 72px,#f8ff09 90px,#fffd07 108px,#fff405 126px,#ffec03 144px,#ffe401 162px,#ffdc00 180px,#ffd500 198px,#ffce00 216px,#ffc700 234px,#ffc100 252px)"></i><i style="top:120px;height:3px;background:linear-gradient(90deg,#ccff12 0px,#d5ff11 18px,#deff0f 36px,#e7ff0d 54px,#f0ff0b 72px,#f9ff09 90px,#fffc07 108px,#fff305 126px,#ffea03 144px,#ffe201 162px,#ffdb00 180px,#ffd400 198px,#ffcd00 216px,#ffc600 234px,#ffc000 252px)"></i><i style="top:123px;height:3px;background:linear-gradient(90deg,#cdff13 0px,#d6ff11 18px,#dfff0f 36px,#e8ff0e 54px,#f1ff0c 72px,#faff0a 90px,#fffb08 108px,#fff206 126px,#ffe904 144px,#ffe102 162px,#ffda00 180px,#ffd300 198px,#ffcc00 216px,#ffc500 234px,#ffbf00 252px)"></i><i style="top:126px;height:3px;background:linear-gradient(90deg,#cfff14 0px,#d7ff12 18px,#e0ff10 36px,#e9ff0e 54px,#f2ff0c 72px,#fbff0b 90px,#fff908 108px,#fff006 126px,#ffe804 144px,#ffe002 162px,#ffd901 180px,#ffd200 198px,#ffcb00 216px,#ffc400 234px,#ffbe00 252px)"></i><i style="top:129px;height:3px;background:linear-gradient(90deg,#d0ff14 0px,#d8ff12 18px,#e1ff11 36px,#eaff0f 54px,#f3ff0d 72px,#fdff0b 90px,#fff809 108px,#ffef07 126px,#ffe705 144px,#ffdf03 162px,#ffd801 180px,#ffd100 198px,#ffca00 216px,#ffc300 234px,#ffbd00 252px)"></i><i style="top:132px;height:3px;background:linear-gradient(90deg,#d1ff15 0px,#d9ff13 18px,#e2ff11 36px,#ebff0f 54px,#f5ff0e 72px,#feff0c 90px,#fff709 108px,#ffee07 126px,#ffe605 144px,#ffde03 162px,#ffd702 180px,#ffd000 198px,#ffc900 216px,#ffc200 234px,#ffbc00 252px)"></i><i style="top:135px;height:3px;background:linear-gradient(90deg,#d2ff15 0px,#dbff14 18px,#e4ff12 36px,#edff10 54px,#f6ff0e 72px,#ffff0c 90px,#fff60a 108px,#ffed08 126px,#ffe506 144px,#ffdd04 162px,#ffd602 180px,#ffcf00 198px,#ffc800 216px,#ffc200 234px,#ffbb00 252px)"></i><i style="top:138px;height:3px;background:linear-gradient(90deg,#d3ff16 0px,#dcff14 18px,#e5ff12 36px,#eeff11 54px,#f7ff0f 72px,#fffe0d 90px,#fff40b 108px,#ffec08 126px,#ffe406 144px,#ffdc04 162px,#ffd503 180px,#ffce01 198px,#ffc700 216px,#ffc100 234px,#ffbb00 252px)"></i><i style="top:141px;height:3px;background:linear-gradient(90deg,#d4ff17 0px,#ddff15 18px,#e6ff13 36px,#efff11 54px,#f8ff0f 72px,#fffc0d 90px,#fff30b 108px,#ffeb09 126px,#ffe207 144px,#ffdb05 162px,#ffd303 180px,#ffcd01 198px,#ffc600 216px,#ffc000 234px,#ffba00 252px)"></i><i style="top:144px;height:3px;background:linear-gradient(90deg,#d5ff17 0px,#deff15 18px,#e7ff14 36px,#f0ff12 54px,#faff10 72px,#fffb0e 90px,#fff20c 108px,#ffe909 126px,#ffe107 144px,#ffda05 162px,#ffd203 180px,#ffcc02 198px,#ffc500 216px,#ffbf00 234px,#ffb900 252px)"></i><i style="top:147px;height:3px;background:linear-gradient(90deg,#d6ff18 0px,#dfff16 18px,#e8ff14 36px,#f1ff12 54px,#fbff11 72px,#fffa0e 90px,#fff10c 108px,#ffe80a 126px,#ffe008 144px,#ffd906 162px,#ffd104 180px,#ffcb02 198px,#ffc400 216px,#ffbe00 234px,#ffb800 252px)"></i><i style="top:150px;height:3px;background:linear-gradient(90deg,#d7ff18 0px,#e0ff17 18px,#e9ff15 36px,#f3ff13 54px,#fcff11 72px,#fff80f 90px,#fff00d 108px,#ffe70a 126px,#ffdf08 144px,#ffd806 162px,#ffd004 180px,#ffca03 198px,#ffc301 216px,#ffbd00 234px,#ffb700 252px)"></i><i style="top:153px;height:3px;background:linear-gradient(90deg,#d8ff19 0px,#e1ff17 18px,#ebff16 36px,#f4ff14 54px,#fdff12 72px,#fff70f 90px,#ffee0d 108px,#ffe60b 126px,#ffde09 144px,#ffd707 162px,#ffcf05 180px,#ffc903 198px,#ffc201 216px,#ffbc00 234px,#ffb600 252px)"></i><i style="top:156px;height:3px;background:linear-gradient(90deg,#daff1a 0px,#e3ff18 18px,#ecff16 36px,#f5ff14 54px,#ffff12 72px,#fff610 90px,#ffed0e 108px,#ffe50b 126px,#ffdd09 144px,#ffd507 162px,#ffce05 180px,#ffc804 198px,#ffc102 216px,#ffbb00 234px,#ffb500 252px)"></i><i style="top:159px;height:3px;background:linear-gradient(90deg,#dbff1a 0px,#e4ff19 18px,#edff17 36px,#f6ff15 54px,#fffe13 72px,#fff511 90px,#ffec0e 108px,#ffe40c 126px,#ffdc0a 144px,#ffd408 162px,#ffcd06 180px,#ffc704 198px,#ffc002 216px,#ffba01 234px,#ffb400 252px)"></i><i style="top:162px;height:3px;background:linear-gradient(90deg,#dcff1b 0px,#e5ff19 18px,#eeff17 36px,#f8ff16 54px,#fffd14 72px,#fff411 90px,#ffeb0f 108px,#ffe30c 126px,#ffdb0a 144px,#ffd308 162px,#ffcc06 180px,#ffc604 198px,#ffbf03 216px,#ffb901 234px,#ffb300 252px)"></i><i style="top:165px;height:3px;background:linear-gradient(90deg,#ddff1c 0px,#e6ff1a 18px,#efff18 36px,#f9ff16 54px,#fffb14 72px,#fff212 90px,#ffea0f 108px,#ffe10d 126px,#ffda0b 144px,#ffd209 162px,#ffcb07 180px,#ffc505 198px,#ffbe03 216px,#ffb802 234px,#ffb300 252px)"></i><i style="top:168px;height:3px;background:linear-gradient(90deg,#deff1c 0px,#e7ff1b 18px,#f1ff19 36px,#faff17 54px,#fffa15 72px,#fff112 90px,#ffe810 108px,#ffe00d 126px,#ffd90b 144px,#ffd109 162px,#ffca07 180px,#ffc405 198px,#ffbd04 216px,#ffb702 234px,#ffb200 252px)"></i><i style="top:171px;height:3px;background:linear-gradient(90deg,#dfff1d 0px,#e9ff1b 18px,#f2ff19 36px,#fcff18 54px,#fff915 72px,#fff013 90px,#ffe710 108px,#ffdf0e 126px,#ffd70c 144px,#ffd00a 162px,#ffc908 180px,#ffc306 198px,#ffbc04 216px,#ffb602 234px,#ffb101 252px)"></i><i style="top:174px;height:3px;background:linear-gradient(90deg,#e0ff1e 0px,#eaff1c 18px,#f3ff1a 36px,#fdff18 54px,#fff816 72px,#ffef13 90px,#ffe611 108px,#ffde0e 126px,#ffd60c 144px,#ffcf0a 162px,#ffc808 180px,#ffc206 198px,#ffbb05 216px,#ffb603 234px,#ffb001 252px)"></i><i style="top:177px;height:3px;background:linear-gradient(90deg,#e2ff1e 0px,#ebff1c 18px,#f4ff1b 36px,#feff19 54px,#fff616 72px,#ffed14 90px,#ffe511 108px,#ffdd0f 126px,#ffd50d 144px,#ffce0b 162px,#ffc709 180px,#ffc107 198px,#ffbb05 216px,#ffb503 234px,#ffaf02 252px)"></i><i style="top:180px;height:3px;background:linear-gradient(90deg,#e3ff1f 0px,#ecff1d 18px,#f6ff1b 36px,#ffff19 54px,#fff517 72px,#ffec14 90px,#ffe412 108px,#ffdc0f 126px,#ffd40d 144px,#ffcd0b 162px,#ffc609 180px,#ffc007 198px,#ffba05 216px,#ffb404 234px,#ffae02 252px)"></i><i style="top:183px;height:3px;background:linear-gradient(90deg,#e4ff20 0px,#edff1e 18px,#f7ff1c 36px,#fffd1a 54px,#fff417 72px,#ffeb15 90px,#ffe312 108px,#ffdb10 126px,#ffd30e 144px,#ffcc0c 162px,#ffc50a 180px,#ffbf08 198px,#ffb906 216px,#ffb304 234px,#ffad03 252px)"></i><i style="top:186px;height:3px;background:linear-gradient(90deg,#e5ff20 0px,#efff1e 18px,#f8ff1d 36px,#fffc1a 54px,#fff318 72px,#ffea15 90px,#ffe113 108px,#ffda10 126px,#ffd20e 144px,#ffcb0c 162px,#ffc40a 180px,#ffbe08 198px,#ffb806 216px,#ffb205 234px,#ffac03 252px)"></i></div>
<svg class="a" style="left:1640px;top:150px" width="270" height="215"><rect x="124.8" y="101.2" width="15" height="12.5" fill="none" stroke="#f4f4f4" stroke-width="2"/><ellipse cx="106.1" cy="28.9" rx="5" ry="4.4" fill="#f4ec10" stroke="#151515" stroke-width="1.1"/><ellipse cx="180.4" cy="107.5" rx="5.2" ry="4.5" fill="#e8b830" stroke="#151515" stroke-width="1.1"/></svg>
<div class="a" style="left:1155px;top:662.65px;width:7px;height:1.5px;background:#b0b0b0"></div>
<div class="t" id="t75" style="left:1154.80px;top:657.10px;font-size:14px;color:#d0d0d0;transform:scaleX(1.2) translateX(-100%);-webkit-text-stroke:0.25px #d0d0d0">0</div>
<div class="a" style="left:1161.25px;top:663.5px;width:1.5px;height:6.5px;background:#c8c8c8"></div>
<div class="t" id="t76" style="left:1162.00px;top:674.50px;font-size:14px;color:#d0d0d0;transform:scaleX(1.2) translateX(-50%);-webkit-text-stroke:0.25px #d0d0d0">0</div>
<div class="a" style="left:1155px;top:602.47px;width:7px;height:1.5px;background:#b0b0b0"></div>
<div class="t" id="t77" style="left:1154.80px;top:596.92px;font-size:14px;color:#d0d0d0;transform:scaleX(1.2) translateX(-100%);-webkit-text-stroke:0.25px #d0d0d0">0,1</div>
<div class="a" style="left:1249.90px;top:663.5px;width:1.5px;height:6.5px;background:#c8c8c8"></div>
<div class="t" id="t78" style="left:1250.65px;top:674.50px;font-size:14px;color:#d0d0d0;transform:scaleX(1.2) translateX(-50%);-webkit-text-stroke:0.25px #d0d0d0">0,1</div>
<div class="a" style="left:1155px;top:542.29px;width:7px;height:1.5px;background:#b0b0b0"></div>
<div class="t" id="t79" style="left:1154.80px;top:536.74px;font-size:14px;color:#d0d0d0;transform:scaleX(1.2) translateX(-100%);-webkit-text-stroke:0.25px #d0d0d0">0,2</div>
<div class="a" style="left:1338.56px;top:663.5px;width:1.5px;height:6.5px;background:#c8c8c8"></div>
<div class="t" id="t80" style="left:1339.31px;top:674.50px;font-size:14px;color:#d0d0d0;transform:scaleX(1.2) translateX(-50%);-webkit-text-stroke:0.25px #d0d0d0">0,2</div>
<div class="a" style="left:1155px;top:482.11px;width:7px;height:1.5px;background:#b0b0b0"></div>
<div class="t" id="t81" style="left:1154.80px;top:476.56px;font-size:14px;color:#d0d0d0;transform:scaleX(1.2) translateX(-100%);-webkit-text-stroke:0.25px #d0d0d0">0,3</div>
<div class="a" style="left:1427.22px;top:663.5px;width:1.5px;height:6.5px;background:#c8c8c8"></div>
<div class="t" id="t82" style="left:1427.97px;top:674.50px;font-size:14px;color:#d0d0d0;transform:scaleX(1.2) translateX(-50%);-webkit-text-stroke:0.25px #d0d0d0">0,3</div>
<div class="a" style="left:1155px;top:421.93px;width:7px;height:1.5px;background:#b0b0b0"></div>
<div class="t" id="t83" style="left:1154.80px;top:416.38px;font-size:14px;color:#d0d0d0;transform:scaleX(1.2) translateX(-100%);-webkit-text-stroke:0.25px #d0d0d0">0,4</div>
<div class="a" style="left:1515.87px;top:663.5px;width:1.5px;height:6.5px;background:#c8c8c8"></div>
<div class="t" id="t84" style="left:1516.62px;top:674.50px;font-size:14px;color:#d0d0d0;transform:scaleX(1.2) translateX(-50%);-webkit-text-stroke:0.25px #d0d0d0">0,4</div>
<div class="a" style="left:1155px;top:361.75px;width:7px;height:1.5px;background:#b0b0b0"></div>
<div class="t" id="t85" style="left:1154.80px;top:356.20px;font-size:14px;color:#d0d0d0;transform:scaleX(1.2) translateX(-100%);-webkit-text-stroke:0.25px #d0d0d0">0,5</div>
<div class="a" style="left:1604.53px;top:663.5px;width:1.5px;height:6.5px;background:#c8c8c8"></div>
<div class="t" id="t86" style="left:1605.28px;top:674.50px;font-size:14px;color:#d0d0d0;transform:scaleX(1.2) translateX(-50%);-webkit-text-stroke:0.25px #d0d0d0">0,5</div>
<div class="a" style="left:1155px;top:301.57px;width:7px;height:1.5px;background:#b0b0b0"></div>
<div class="t" id="t87" style="left:1154.80px;top:296.02px;font-size:14px;color:#d0d0d0;transform:scaleX(1.2) translateX(-100%);-webkit-text-stroke:0.25px #d0d0d0">0,6</div>
<div class="a" style="left:1693.18px;top:663.5px;width:1.5px;height:6.5px;background:#c8c8c8"></div>
<div class="t" id="t88" style="left:1693.93px;top:674.50px;font-size:14px;color:#d0d0d0;transform:scaleX(1.2) translateX(-50%);-webkit-text-stroke:0.25px #d0d0d0">0,6</div>
<div class="a" style="left:1155px;top:241.39px;width:7px;height:1.5px;background:#b0b0b0"></div>
<div class="t" id="t89" style="left:1154.80px;top:235.84px;font-size:14px;color:#d0d0d0;transform:scaleX(1.2) translateX(-100%);-webkit-text-stroke:0.25px #d0d0d0">0,7</div>
<div class="a" style="left:1781.84px;top:663.5px;width:1.5px;height:6.5px;background:#c8c8c8"></div>
<div class="t" id="t90" style="left:1782.59px;top:674.50px;font-size:14px;color:#d0d0d0;transform:scaleX(1.2) translateX(-50%);-webkit-text-stroke:0.25px #d0d0d0">0,7</div>
<div class="a" style="left:1155px;top:181.21px;width:7px;height:1.5px;background:#b0b0b0"></div>
<div class="t" id="t91" style="left:1154.80px;top:175.66px;font-size:14px;color:#d0d0d0;transform:scaleX(1.2) translateX(-100%);-webkit-text-stroke:0.25px #d0d0d0">0,8</div>
<div class="a" style="left:1870.49px;top:663.5px;width:1.5px;height:6.5px;background:#c8c8c8"></div>
<div class="t" id="t92" style="left:1871.24px;top:674.50px;font-size:14px;color:#d0d0d0;transform:scaleX(1.2) translateX(-50%);-webkit-text-stroke:0.25px #d0d0d0">0,8</div>
<div class="a" style="left:370px;top:715.4px;width:1485.8px;height:14.6px;background:#2b2b2b"></div>
<div class="a" style="left:370px;top:730px;width:1485.8px;height:14.4px;background:#1a1a1a"></div>
<div class="a" style="left:370px;top:715.4px;width:8.7px;height:29px;background:#000"></div>
<div class="a" style="left:370px;top:744.40px;width:1485.8px;height:26.30px;background:#3c3c3c"></div>
<div class="a" style="left:370px;top:770.70px;width:1485.8px;height:26.30px;background:#7f7f7f"></div>
<div class="a" style="left:370px;top:797.00px;width:1485.8px;height:26.30px;background:#3c3c3c"></div>
<div class="a" style="left:370px;top:823.30px;width:1485.8px;height:28.00px;background:#7f7f7f"></div>
<div class="a" style="left:370px;top:851.30px;width:1485.8px;height:26.30px;background:#3c3c3c"></div>
<div class="a" style="left:370px;top:877.60px;width:1485.8px;height:26.40px;background:#7f7f7f"></div>
<div class="a" style="left:370px;top:904.00px;width:1485.8px;height:25.80px;background:#3c3c3c"></div>
<div class="a" style="left:370px;top:744.4px;width:8.7px;height:185.42999999999998px;background:#262626"></div>
<div class="t" style="left:450.7px;top:724.5px;font-size:14px;color:#e4e4e4;transform:scaleX(0.65);-webkit-text-stroke:0.25px #e4e4e4">White</div>
<div class="t" style="left:492.0px;top:724.5px;font-size:14px;color:#e4e4e4;transform:scaleX(0.65);-webkit-text-stroke:0.25px #e4e4e4">Gray 80</div>
<div class="t" style="left:534.0px;top:724.5px;font-size:14px;color:#e4e4e4;transform:scaleX(0.65);-webkit-text-stroke:0.25px #e4e4e4">Gray 65</div>
<div class="t" style="left:575.3px;top:724.5px;font-size:14px;color:#e4e4e4;transform:scaleX(0.65);-webkit-text-stroke:0.25px #e4e4e4">Gray 50</div>
<div class="t" style="left:617.7px;top:724.5px;font-size:14px;color:#e4e4e4;transform:scaleX(0.65);-webkit-text-stroke:0.25px #e4e4e4">Gray 35</div>
<div class="t" style="left:659.4px;top:724.5px;font-size:14px;color:#e4e4e4;transform:scaleX(0.65);-webkit-text-stroke:0.25px #e4e4e4">Black</div>
<div class="t" style="left:689.6px;top:724.5px;font-size:14px;color:#e4e4e4;transform:scaleX(0.65);-webkit-text-stroke:0.25px #e4e4e4">Dark Skin</div>
<div class="t" style="left:734.4px;top:724.5px;font-size:14px;color:#e4e4e4;transform:scaleX(0.65);-webkit-text-stroke:0.25px #e4e4e4">Light Skin</div>
<div class="t" style="left:779.0px;top:724.5px;font-size:14px;color:#e4e4e4;transform:scaleX(0.65);-webkit-text-stroke:0.25px #e4e4e4">Blue Sky</div>
<div class="t" style="left:819.8px;top:724.5px;font-size:14px;color:#e4e4e4;transform:scaleX(0.65);-webkit-text-stroke:0.25px #e4e4e4">Foliage</div>
<div class="t" style="left:855.2px;top:724.5px;font-size:14px;color:#e4e4e4;transform:scaleX(0.65);-webkit-text-stroke:0.25px #e4e4e4">Blue Flower</div>
<div class="t" style="left:910.0px;top:724.5px;font-size:14px;color:#e4e4e4;transform:scaleX(0.65);-webkit-text-stroke:0.25px #e4e4e4">Bluish Green</div>
<div class="t" style="left:968.3px;top:724.5px;font-size:14px;color:#e4e4e4;transform:scaleX(0.65);-webkit-text-stroke:0.25px #e4e4e4">Orange</div>
<div class="t" style="left:1010.3px;top:724.5px;font-size:14px;color:#e4e4e4;transform:scaleX(0.65);-webkit-text-stroke:0.25px #e4e4e4">Purplish Blue</div>
<div class="t" style="left:1069.9px;top:724.5px;font-size:14px;color:#e4e4e4;transform:scaleX(0.65);-webkit-text-stroke:0.25px #e4e4e4">Moderate Red</div>
<div class="t" style="left:1135.2px;top:724.5px;font-size:14px;color:#e4e4e4;transform:scaleX(0.65);-webkit-text-stroke:0.25px #e4e4e4">Purple</div>
<div class="t" style="left:1171.4px;top:724.5px;font-size:14px;color:#e4e4e4;transform:scaleX(0.65);-webkit-text-stroke:0.25px #e4e4e4">Yellow Green</div>
<div class="t" style="left:1231.4px;top:724.5px;font-size:14px;color:#e4e4e4;transform:scaleX(0.65);-webkit-text-stroke:0.25px #e4e4e4">Orange Yellow</div>
<div class="t" style="left:1296.7px;top:724.5px;font-size:14px;color:#e4e4e4;transform:scaleX(0.65);-webkit-text-stroke:0.25px #e4e4e4">Blue</div>
<div class="t" style="left:1332.3px;top:724.5px;font-size:14px;color:#e4e4e4;transform:scaleX(0.65);-webkit-text-stroke:0.25px #e4e4e4">Green</div>
<div class="t" style="left:1374.7px;top:724.5px;font-size:14px;color:#e4e4e4;transform:scaleX(0.65);-webkit-text-stroke:0.25px #e4e4e4">Red</div>
<div class="t" style="left:1410.2px;top:724.5px;font-size:14px;color:#e4e4e4;transform:scaleX(0.65);-webkit-text-stroke:0.25px #e4e4e4">Yellow</div>
<div class="t" style="left:1451.8px;top:724.5px;font-size:14px;color:#e4e4e4;transform:scaleX(0.65);-webkit-text-stroke:0.25px #e4e4e4">Magenta</div>
<div class="t" style="left:1494.4px;top:724.5px;font-size:14px;color:#e4e4e4;transform:scaleX(0.65);-webkit-text-stroke:0.25px #e4e4e4">Cyan</div>
<div class="t" style="left:1530.6px;top:724.5px;font-size:14px;color:#e4e4e4;transform:scaleX(0.65);-webkit-text-stroke:0.25px #e4e4e4">100% Red</div>
<div class="t" style="left:1577.0px;top:724.5px;font-size:14px;color:#e4e4e4;transform:scaleX(0.65);-webkit-text-stroke:0.25px #e4e4e4">100% Green</div>
<div class="t" style="left:1633.4px;top:724.5px;font-size:14px;color:#e4e4e4;transform:scaleX(0.65);-webkit-text-stroke:0.25px #e4e4e4">100% Blue</div>
<div class="t" style="left:1682.5px;top:724.5px;font-size:14px;color:#e4e4e4;transform:scaleX(0.65);-webkit-text-stroke:0.25px #e4e4e4">100% Cyan</div>
<div class="t" style="left:1733.7px;top:724.5px;font-size:14px;color:#e4e4e4;transform:scaleX(0.65);-webkit-text-stroke:0.25px #e4e4e4">100% Magenta</div>
<div class="t" style="left:1801.5px;top:724.5px;font-size:14px;color:#e4e4e4;transform:scaleX(0.65);-webkit-text-stroke:0.25px #e4e4e4">100% Yellow</div>
<div class="t" style="left:381.0px;top:750.7px;font-size:15.5px;color:#ececec;transform:scaleX(0.59);-webkit-text-stroke:0.25px #ececec">x: CIE31</div>
<div class="t" style="left:450.7px;top:750.7px;font-size:15.5px;color:#ececec;transform:scaleX(0.633);-webkit-text-stroke:0.25px #ececec">0,297</div>
<div class="t" style="left:492.0px;top:750.7px;font-size:15.5px;color:#ececec;transform:scaleX(0.633);-webkit-text-stroke:0.25px #ececec">0,298</div>
<div class="t" style="left:534.0px;top:750.7px;font-size:15.5px;color:#ececec;transform:scaleX(0.633);-webkit-text-stroke:0.25px #ececec">0,298</div>
<div class="t" style="left:575.3px;top:750.7px;font-size:15.5px;color:#ececec;transform:scaleX(0.633);-webkit-text-stroke:0.25px #ececec">0,299</div>
<div class="t" style="left:617.7px;top:750.7px;font-size:15.5px;color:#ececec;transform:scaleX(0.633);-webkit-text-stroke:0.25px #ececec">0,299</div>
<div class="t" style="left:659.4px;top:750.7px;font-size:15.5px;color:#ececec;transform:scaleX(0.633);-webkit-text-stroke:0.25px #ececec">0,345</div>
<div class="t" style="left:689.6px;top:750.7px;font-size:15.5px;color:#ececec;transform:scaleX(0.633);-webkit-text-stroke:0.25px #ececec">0,381</div>
<div class="t" style="left:734.4px;top:750.7px;font-size:15.5px;color:#ececec;transform:scaleX(0.633);-webkit-text-stroke:0.25px #ececec">0,351</div>
<div class="t" style="left:779.0px;top:750.7px;font-size:15.5px;color:#ececec;transform:scaleX(0.633);-webkit-text-stroke:0.25px #ececec">0,244</div>
<div class="t" style="left:819.8px;top:750.7px;font-size:15.5px;color:#ececec;transform:scaleX(0.633);-webkit-text-stroke:0.25px #ececec">0,336</div>
<div class="t" style="left:855.2px;top:750.7px;font-size:15.5px;color:#ececec;transform:scaleX(0.633);-webkit-text-stroke:0.25px #ececec">0,259</div>
<div class="t" style="left:910.0px;top:750.7px;font-size:15.5px;color:#ececec;transform:scaleX(0.633);-webkit-text-stroke:0.25px #ececec">0,266</div>
<div class="t" style="left:968.3px;top:750.7px;font-size:15.5px;color:#ececec;transform:scaleX(0.633);-webkit-text-stroke:0.25px #ececec">0,485</div>
<div class="t" style="left:1010.3px;top:750.7px;font-size:15.5px;color:#ececec;transform:scaleX(0.633);-webkit-text-stroke:0.25px #ececec">0,211</div>
<div class="t" style="left:1069.9px;top:750.7px;font-size:15.5px;color:#ececec;transform:scaleX(0.633);-webkit-text-stroke:0.25px #ececec">0,424</div>
<div class="t" style="left:1135.2px;top:750.7px;font-size:15.5px;color:#ececec;transform:scaleX(0.633);-webkit-text-stroke:0.25px #ececec">0,265</div>
<div class="t" style="left:1171.4px;top:750.7px;font-size:15.5px;color:#ececec;transform:scaleX(0.633);-webkit-text-stroke:0.25px #ececec">0,376</div>
<div class="t" style="left:1231.4px;top:750.7px;font-size:15.5px;color:#ececec;transform:scaleX(0.633);-webkit-text-stroke:0.25px #ececec">0,449</div>
<div class="t" style="left:1296.7px;top:750.7px;font-size:15.5px;color:#ececec;transform:scaleX(0.633);-webkit-text-stroke:0.25px #ececec">0,187</div>
<div class="t" style="left:1332.3px;top:750.7px;font-size:15.5px;color:#ececec;transform:scaleX(0.633);-webkit-text-stroke:0.25px #ececec">0,317</div>
<div class="t" style="left:1374.7px;top:750.7px;font-size:15.5px;color:#ececec;transform:scaleX(0.633);-webkit-text-stroke:0.25px #ececec">0,513</div>
<div class="t" style="left:1410.2px;top:750.7px;font-size:15.5px;color:#ececec;transform:scaleX(0.633);-webkit-text-stroke:0.25px #ececec">0,430</div>
<div class="t" style="left:1451.8px;top:750.7px;font-size:15.5px;color:#ececec;transform:scaleX(0.633);-webkit-text-stroke:0.25px #ececec">0,330</div>
<div class="t" style="left:1494.4px;top:750.7px;font-size:15.5px;color:#ececec;transform:scaleX(0.633);-webkit-text-stroke:0.25px #ececec">0,218</div>
<div class="t" style="left:1530.6px;top:750.7px;font-size:15.5px;color:#ececec;transform:scaleX(0.633);-webkit-text-stroke:0.25px #ececec">0,634</div>
<div class="t" style="left:1577.0px;top:750.7px;font-size:15.5px;color:#ececec;transform:scaleX(0.633);-webkit-text-stroke:0.25px #ececec">0,327</div>
<div class="t" style="left:1633.4px;top:750.7px;font-size:15.5px;color:#ececec;transform:scaleX(0.633);-webkit-text-stroke:0.25px #ececec">0,154</div>
<div class="t" style="left:1682.5px;top:750.7px;font-size:15.5px;color:#ececec;transform:scaleX(0.633);-webkit-text-stroke:0.25px #ececec">0,235</div>
<div class="t" style="left:1733.7px;top:750.7px;font-size:15.5px;color:#ececec;transform:scaleX(0.633);-webkit-text-stroke:0.25px #ececec">0,276</div>
<div class="t" style="left:1801.5px;top:750.7px;font-size:15.5px;color:#ececec;transform:scaleX(0.633);-webkit-text-stroke:0.25px #ececec">0,413</div>
<div class="t" style="left:381.0px;top:777.0px;font-size:15.5px;color:#ececec;transform:scaleX(0.59);-webkit-text-stroke:0.25px #ececec">y: CIE31</div>
<div class="t" style="left:450.7px;top:777.0px;font-size:15.5px;color:#ececec;transform:scaleX(0.633);-webkit-text-stroke:0.25px #ececec">0,312</div>
<div class="t" style="left:492.0px;top:777.0px;font-size:15.5px;color:#ececec;transform:scaleX(0.633);-webkit-text-stroke:0.25px #ececec">0,314</div>
<div class="t" style="left:534.0px;top:777.0px;font-size:15.5px;color:#ececec;transform:scaleX(0.633);-webkit-text-stroke:0.25px #ececec">0,315</div>
<div class="t" style="left:575.3px;top:777.0px;font-size:15.5px;color:#ececec;transform:scaleX(0.633);-webkit-text-stroke:0.25px #ececec">0,315</div>
<div class="t" style="left:617.7px;top:777.0px;font-size:15.5px;color:#ececec;transform:scaleX(0.633);-webkit-text-stroke:0.25px #ececec">0,315</div>
<div class="t" style="left:659.4px;top:777.0px;font-size:15.5px;color:#ececec;transform:scaleX(0.633);-webkit-text-stroke:0.25px #ececec">0,306</div>
<div class="t" style="left:689.6px;top:777.0px;font-size:15.5px;color:#ececec;transform:scaleX(0.633);-webkit-text-stroke:0.25px #ececec">0,366</div>
<div class="t" style="left:734.4px;top:777.0px;font-size:15.5px;color:#ececec;transform:scaleX(0.633);-webkit-text-stroke:0.25px #ececec">0,350</div>
<div class="t" style="left:779.0px;top:777.0px;font-size:15.5px;color:#ececec;transform:scaleX(0.633);-webkit-text-stroke:0.25px #ececec">0,247</div>
<div class="t" style="left:819.8px;top:777.0px;font-size:15.5px;color:#ececec;transform:scaleX(0.633);-webkit-text-stroke:0.25px #ececec">0,428</div>
<div class="t" style="left:855.2px;top:777.0px;font-size:15.5px;color:#ececec;transform:scaleX(0.633);-webkit-text-stroke:0.25px #ececec">0,238</div>
<div class="t" style="left:910.0px;top:777.0px;font-size:15.5px;color:#ececec;transform:scaleX(0.633);-webkit-text-stroke:0.25px #ececec">0,341</div>
<div class="t" style="left:968.3px;top:777.0px;font-size:15.5px;color:#ececec;transform:scaleX(0.633);-webkit-text-stroke:0.25px #ececec">0,439</div>
<div class="t" style="left:1010.3px;top:777.0px;font-size:15.5px;color:#ececec;transform:scaleX(0.633);-webkit-text-stroke:0.25px #ececec">0,167</div>
<div class="t" style="left:1069.9px;top:777.0px;font-size:15.5px;color:#ececec;transform:scaleX(0.633);-webkit-text-stroke:0.25px #ececec">0,308</div>
<div class="t" style="left:1135.2px;top:777.0px;font-size:15.5px;color:#ececec;transform:scaleX(0.633);-webkit-text-stroke:0.25px #ececec">0,194</div>
<div class="t" style="left:1171.4px;top:777.0px;font-size:15.5px;color:#ececec;transform:scaleX(0.633);-webkit-text-stroke:0.25px #ececec">0,504</div>
<div class="t" style="left:1231.4px;top:777.0px;font-size:15.5px;color:#ececec;transform:scaleX(0.633);-webkit-text-stroke:0.25px #ececec">0,473</div>
<div class="t" style="left:1296.7px;top:777.0px;font-size:15.5px;color:#ececec;transform:scaleX(0.633);-webkit-text-stroke:0.25px #ececec">0,114</div>
<div class="t" style="left:1332.3px;top:777.0px;font-size:15.5px;color:#ececec;transform:scaleX(0.633);-webkit-text-stroke:0.25px #ececec">0,488</div>
<div class="t" style="left:1374.7px;top:777.0px;font-size:15.5px;color:#ececec;transform:scaleX(0.633);-webkit-text-stroke:0.25px #ececec">0,319</div>
<div class="t" style="left:1410.2px;top:777.0px;font-size:15.5px;color:#ececec;transform:scaleX(0.633);-webkit-text-stroke:0.25px #ececec">0,505</div>
<div class="t" style="left:1451.8px;top:777.0px;font-size:15.5px;color:#ececec;transform:scaleX(0.633);-webkit-text-stroke:0.25px #ececec">0,222</div>
<div class="t" style="left:1494.4px;top:777.0px;font-size:15.5px;color:#ececec;transform:scaleX(0.633);-webkit-text-stroke:0.25px #ececec">0,248</div>
<div class="t" style="left:1530.6px;top:777.0px;font-size:15.5px;color:#ececec;transform:scaleX(0.633);-webkit-text-stroke:0.25px #ececec">0,347</div>
<div class="t" style="left:1577.0px;top:777.0px;font-size:15.5px;color:#ececec;transform:scaleX(0.633);-webkit-text-stroke:0.25px #ececec">0,598</div>
<div class="t" style="left:1633.4px;top:777.0px;font-size:15.5px;color:#ececec;transform:scaleX(0.633);-webkit-text-stroke:0.25px #ececec">0,047</div>
<div class="t" style="left:1682.5px;top:777.0px;font-size:15.5px;color:#ececec;transform:scaleX(0.633);-webkit-text-stroke:0.25px #ececec">0,305</div>
<div class="t" style="left:1733.7px;top:777.0px;font-size:15.5px;color:#ececec;transform:scaleX(0.633);-webkit-text-stroke:0.25px #ececec">0,122</div>
<div class="t" style="left:1801.5px;top:777.0px;font-size:15.5px;color:#ececec;transform:scaleX(0.633);-webkit-text-stroke:0.25px #ececec">0,529</div>
<div class="t" style="left:381.0px;top:803.3px;font-size:15.5px;color:#ececec;transform:scaleX(0.59);-webkit-text-stroke:0.25px #ececec">Y</div>
<div class="t" style="left:450.7px;top:803.3px;font-size:15.5px;color:#ececec;transform:scaleX(0.633);-webkit-text-stroke:0.25px #ececec">272,007</div>
<div class="t" style="left:492.0px;top:803.3px;font-size:15.5px;color:#ececec;transform:scaleX(0.633);-webkit-text-stroke:0.25px #ececec">214,601</div>
<div class="t" style="left:534.0px;top:803.3px;font-size:15.5px;color:#ececec;transform:scaleX(0.633);-webkit-text-stroke:0.25px #ececec">174,391</div>
<div class="t" style="left:575.3px;top:803.3px;font-size:15.5px;color:#ececec;transform:scaleX(0.633);-webkit-text-stroke:0.25px #ececec">132,147</div>
<div class="t" style="left:617.7px;top:803.3px;font-size:15.5px;color:#ececec;transform:scaleX(0.633);-webkit-text-stroke:0.25px #ececec">94,977</div>
<div class="t" style="left:659.4px;top:803.3px;font-size:15.5px;color:#ececec;transform:scaleX(0.633);-webkit-text-stroke:0.25px #ececec">0,584</div>
<div class="t" style="left:689.6px;top:803.3px;font-size:15.5px;color:#ececec;transform:scaleX(0.633);-webkit-text-stroke:0.25px #ececec">24,647</div>
<div class="t" style="left:734.4px;top:803.3px;font-size:15.5px;color:#ececec;transform:scaleX(0.633);-webkit-text-stroke:0.25px #ececec">97,434</div>
<div class="t" style="left:779.0px;top:803.3px;font-size:15.5px;color:#ececec;transform:scaleX(0.633);-webkit-text-stroke:0.25px #ececec">52,826</div>
<div class="t" style="left:819.8px;top:803.3px;font-size:15.5px;color:#ececec;transform:scaleX(0.633);-webkit-text-stroke:0.25px #ececec">33,509</div>
<div class="t" style="left:855.2px;top:803.3px;font-size:15.5px;color:#ececec;transform:scaleX(0.633);-webkit-text-stroke:0.25px #ececec">67,465</div>
<div class="t" style="left:910.0px;top:803.3px;font-size:15.5px;color:#ececec;transform:scaleX(0.633);-webkit-text-stroke:0.25px #ececec">116,586</div>
<div class="t" style="left:968.3px;top:803.3px;font-size:15.5px;color:#ececec;transform:scaleX(0.633);-webkit-text-stroke:0.25px #ececec">75,017</div>
<div class="t" style="left:1010.3px;top:803.3px;font-size:15.5px;color:#ececec;transform:scaleX(0.633);-webkit-text-stroke:0.25px #ececec">30,723</div>
<div class="t" style="left:1069.9px;top:803.3px;font-size:15.5px;color:#ececec;transform:scaleX(0.633);-webkit-text-stroke:0.25px #ececec">46,104</div>
<div class="t" style="left:1135.2px;top:803.3px;font-size:15.5px;color:#ececec;transform:scaleX(0.633);-webkit-text-stroke:0.25px #ececec">15,316</div>
<div class="t" style="left:1171.4px;top:803.3px;font-size:15.5px;color:#ececec;transform:scaleX(0.633);-webkit-text-stroke:0.25px #ececec">117,761</div>
<div class="t" style="left:1231.4px;top:803.3px;font-size:15.5px;color:#ececec;transform:scaleX(0.633);-webkit-text-stroke:0.25px #ececec">119,440</div>
<div class="t" style="left:1296.7px;top:803.3px;font-size:15.5px;color:#ececec;transform:scaleX(0.633);-webkit-text-stroke:0.25px #ececec">15,493</div>
<div class="t" style="left:1332.3px;top:803.3px;font-size:15.5px;color:#ececec;transform:scaleX(0.633);-webkit-text-stroke:0.25px #ececec">65,901</div>
<div class="t" style="left:1374.7px;top:803.3px;font-size:15.5px;color:#ececec;transform:scaleX(0.633);-webkit-text-stroke:0.25px #ececec">26,966</div>
<div class="t" style="left:1410.2px;top:803.3px;font-size:15.5px;color:#ececec;transform:scaleX(0.633);-webkit-text-stroke:0.25px #ececec">168,493</div>
<div class="t" style="left:1451.8px;top:803.3px;font-size:15.5px;color:#ececec;transform:scaleX(0.633);-webkit-text-stroke:0.25px #ececec">45,962</div>
<div class="t" style="left:1494.4px;top:803.3px;font-size:15.5px;color:#ececec;transform:scaleX(0.633);-webkit-text-stroke:0.25px #ececec">54,695</div>
<div class="t" style="left:1530.6px;top:803.3px;font-size:15.5px;color:#ececec;transform:scaleX(0.633);-webkit-text-stroke:0.25px #ececec">46,582</div>
<div class="t" style="left:1577.0px;top:803.3px;font-size:15.5px;color:#ececec;transform:scaleX(0.633);-webkit-text-stroke:0.25px #ececec">208,771</div>
<div class="t" style="left:1633.4px;top:803.3px;font-size:15.5px;color:#ececec;transform:scaleX(0.633);-webkit-text-stroke:0.25px #ececec">18,432</div>
<div class="t" style="left:1682.5px;top:803.3px;font-size:15.5px;color:#ececec;transform:scaleX(0.633);-webkit-text-stroke:0.25px #ececec">225,492</div>
<div class="t" style="left:1733.7px;top:803.3px;font-size:15.5px;color:#ececec;transform:scaleX(0.633);-webkit-text-stroke:0.25px #ececec">64,310</div>
<div class="t" style="left:1801.5px;top:803.3px;font-size:15.5px;color:#ececec;transform:scaleX(0.633);-webkit-text-stroke:0.25px #ececec">254,316</div>
<div class="t" style="left:381.0px;top:829.6px;font-size:15.5px;color:#ececec;transform:scaleX(0.59);-webkit-text-stroke:0.25px #ececec">Target x:CIE31</div>
<div class="t" style="left:450.7px;top:829.6px;font-size:15.5px;color:#ececec;transform:scaleX(0.633);-webkit-text-stroke:0.25px #ececec">0,313</div>
<div class="t" style="left:492.0px;top:829.6px;font-size:15.5px;color:#ececec;transform:scaleX(0.633);-webkit-text-stroke:0.25px #ececec">0,313</div>
<div class="t" style="left:534.0px;top:829.6px;font-size:15.5px;color:#ececec;transform:scaleX(0.633);-webkit-text-stroke:0.25px #ececec">0,313</div>
<div class="t" style="left:575.3px;top:829.6px;font-size:15.5px;color:#ececec;transform:scaleX(0.633);-webkit-text-stroke:0.25px #ececec">0,313</div>
<div class="t" style="left:617.7px;top:829.6px;font-size:15.5px;color:#ececec;transform:scaleX(0.633);-webkit-text-stroke:0.25px #ececec">0,313</div>
<div class="t" style="left:659.4px;top:829.6px;font-size:15.5px;color:#ececec;transform:scaleX(0.633);-webkit-text-stroke:0.25px #ececec">0,313</div>
<div class="t" style="left:689.6px;top:829.6px;font-size:15.5px;color:#ececec;transform:scaleX(0.633);-webkit-text-stroke:0.25px #ececec">0,400</div>
<div class="t" style="left:734.4px;top:829.6px;font-size:15.5px;color:#ececec;transform:scaleX(0.633);-webkit-text-stroke:0.25px #ececec">0,380</div>
<div class="t" style="left:779.0px;top:829.6px;font-size:15.5px;color:#ececec;transform:scaleX(0.633);-webkit-text-stroke:0.25px #ececec">0,250</div>
<div class="t" style="left:819.8px;top:829.6px;font-size:15.5px;color:#ececec;transform:scaleX(0.633);-webkit-text-stroke:0.25px #ececec">0,340</div>
<div class="t" style="left:855.2px;top:829.6px;font-size:15.5px;color:#ececec;transform:scaleX(0.633);-webkit-text-stroke:0.25px #ececec">0,268</div>
<div class="t" style="left:910.0px;top:829.6px;font-size:15.5px;color:#ececec;transform:scaleX(0.633);-webkit-text-stroke:0.25px #ececec">0,263</div>
<div class="t" style="left:968.3px;top:829.6px;font-size:15.5px;color:#ececec;transform:scaleX(0.633);-webkit-text-stroke:0.25px #ececec">0,512</div>
<div class="t" style="left:1010.3px;top:829.6px;font-size:15.5px;color:#ececec;transform:scaleX(0.633);-webkit-text-stroke:0.25px #ececec">0,217</div>
<div class="t" style="left:1069.9px;top:829.6px;font-size:15.5px;color:#ececec;transform:scaleX(0.633);-webkit-text-stroke:0.25px #ececec">0,462</div>
<div class="t" style="left:1135.2px;top:829.6px;font-size:15.5px;color:#ececec;transform:scaleX(0.633);-webkit-text-stroke:0.25px #ececec">0,290</div>
<div class="t" style="left:1171.4px;top:829.6px;font-size:15.5px;color:#ececec;transform:scaleX(0.633);-webkit-text-stroke:0.25px #ececec">0,376</div>
<div class="t" style="left:1231.4px;top:829.6px;font-size:15.5px;color:#ececec;transform:scaleX(0.633);-webkit-text-stroke:0.25px #ececec">0,474</div>
<div class="t" style="left:1296.7px;top:829.6px;font-size:15.5px;color:#ececec;transform:scaleX(0.633);-webkit-text-stroke:0.25px #ececec">0,192</div>
<div class="t" style="left:1332.3px;top:829.6px;font-size:15.5px;color:#ececec;transform:scaleX(0.633);-webkit-text-stroke:0.25px #ececec">0,305</div>
<div class="t" style="left:1374.7px;top:829.6px;font-size:15.5px;color:#ececec;transform:scaleX(0.633);-webkit-text-stroke:0.25px #ececec">0,537</div>
<div class="t" style="left:1410.2px;top:829.6px;font-size:15.5px;color:#ececec;transform:scaleX(0.633);-webkit-text-stroke:0.25px #ececec">0,447</div>
<div class="t" style="left:1451.8px;top:829.6px;font-size:15.5px;color:#ececec;transform:scaleX(0.633);-webkit-text-stroke:0.25px #ececec">0,374</div>
<div class="t" style="left:1494.4px;top:829.6px;font-size:15.5px;color:#ececec;transform:scaleX(0.633);-webkit-text-stroke:0.25px #ececec">0,208</div>
<div class="t" style="left:1530.6px;top:829.6px;font-size:15.5px;color:#ececec;transform:scaleX(0.633);-webkit-text-stroke:0.25px #ececec">0,640</div>
<div class="t" style="left:1577.0px;top:829.6px;font-size:15.5px;color:#ececec;transform:scaleX(0.633);-webkit-text-stroke:0.25px #ececec">0,300</div>
<div class="t" style="left:1633.4px;top:829.6px;font-size:15.5px;color:#ececec;transform:scaleX(0.633);-webkit-text-stroke:0.25px #ececec">0,150</div>
<div class="t" style="left:1682.5px;top:829.6px;font-size:15.5px;color:#ececec;transform:scaleX(0.633);-webkit-text-stroke:0.25px #ececec">0,225</div>
<div class="t" style="left:1733.7px;top:829.6px;font-size:15.5px;color:#ececec;transform:scaleX(0.633);-webkit-text-stroke:0.25px #ececec">0,321</div>
<div class="t" style="left:1801.5px;top:829.6px;font-size:15.5px;color:#ececec;transform:scaleX(0.633);-webkit-text-stroke:0.25px #ececec">0,419</div>
<div class="t" style="left:381.0px;top:857.6px;font-size:15.5px;color:#ececec;transform:scaleX(0.59);-webkit-text-stroke:0.25px #ececec">Target y:CIE31</div>
<div class="t" style="left:450.7px;top:857.6px;font-size:15.5px;color:#ececec;transform:scaleX(0.633);-webkit-text-stroke:0.25px #ececec">0,329</div>
<div class="t" style="left:492.0px;top:857.6px;font-size:15.5px;color:#ececec;transform:scaleX(0.633);-webkit-text-stroke:0.25px #ececec">0,329</div>
<div class="t" style="left:534.0px;top:857.6px;font-size:15.5px;color:#ececec;transform:scaleX(0.633);-webkit-text-stroke:0.25px #ececec">0,329</div>
<div class="t" style="left:575.3px;top:857.6px;font-size:15.5px;color:#ececec;transform:scaleX(0.633);-webkit-text-stroke:0.25px #ececec">0,329</div>
<div class="t" style="left:617.7px;top:857.6px;font-size:15.5px;color:#ececec;transform:scaleX(0.633);-webkit-text-stroke:0.25px #ececec">0,329</div>
<div class="t" style="left:659.4px;top:857.6px;font-size:15.5px;color:#ececec;transform:scaleX(0.633);-webkit-text-stroke:0.25px #ececec">0,329</div>
<div class="t" style="left:689.6px;top:857.6px;font-size:15.5px;color:#ececec;transform:scaleX(0.633);-webkit-text-stroke:0.25px #ececec">0,364</div>
<div class="t" style="left:734.4px;top:857.6px;font-size:15.5px;color:#ececec;transform:scaleX(0.633);-webkit-text-stroke:0.25px #ececec">0,356</div>
<div class="t" style="left:779.0px;top:857.6px;font-size:15.5px;color:#ececec;transform:scaleX(0.633);-webkit-text-stroke:0.25px #ececec">0,266</div>
<div class="t" style="left:819.8px;top:857.6px;font-size:15.5px;color:#ececec;transform:scaleX(0.633);-webkit-text-stroke:0.25px #ececec">0,427</div>
<div class="t" style="left:855.2px;top:857.6px;font-size:15.5px;color:#ececec;transform:scaleX(0.633);-webkit-text-stroke:0.25px #ececec">0,253</div>
<div class="t" style="left:910.0px;top:857.6px;font-size:15.5px;color:#ececec;transform:scaleX(0.633);-webkit-text-stroke:0.25px #ececec">0,362</div>
<div class="t" style="left:968.3px;top:857.6px;font-size:15.5px;color:#ececec;transform:scaleX(0.633);-webkit-text-stroke:0.25px #ececec">0,406</div>
<div class="t" style="left:1010.3px;top:857.6px;font-size:15.5px;color:#ececec;transform:scaleX(0.633);-webkit-text-stroke:0.25px #ececec">0,192</div>
<div class="t" style="left:1069.9px;top:857.6px;font-size:15.5px;color:#ececec;transform:scaleX(0.633);-webkit-text-stroke:0.25px #ececec">0,313</div>
<div class="t" style="left:1135.2px;top:857.6px;font-size:15.5px;color:#ececec;transform:scaleX(0.633);-webkit-text-stroke:0.25px #ececec">0,221</div>
<div class="t" style="left:1171.4px;top:857.6px;font-size:15.5px;color:#ececec;transform:scaleX(0.633);-webkit-text-stroke:0.25px #ececec">0,493</div>
<div class="t" style="left:1231.4px;top:857.6px;font-size:15.5px;color:#ececec;transform:scaleX(0.633);-webkit-text-stroke:0.25px #ececec">0,439</div>
<div class="t" style="left:1296.7px;top:857.6px;font-size:15.5px;color:#ececec;transform:scaleX(0.633);-webkit-text-stroke:0.25px #ececec">0,141</div>
<div class="t" style="left:1332.3px;top:857.6px;font-size:15.5px;color:#ececec;transform:scaleX(0.633);-webkit-text-stroke:0.25px #ececec">0,489</div>
<div class="t" style="left:1374.7px;top:857.6px;font-size:15.5px;color:#ececec;transform:scaleX(0.633);-webkit-text-stroke:0.25px #ececec">0,317</div>
<div class="t" style="left:1410.2px;top:857.6px;font-size:15.5px;color:#ececec;transform:scaleX(0.633);-webkit-text-stroke:0.25px #ececec">0,474</div>
<div class="t" style="left:1451.8px;top:857.6px;font-size:15.5px;color:#ececec;transform:scaleX(0.633);-webkit-text-stroke:0.25px #ececec">0,247</div>
<div class="t" style="left:1494.4px;top:857.6px;font-size:15.5px;color:#ececec;transform:scaleX(0.633);-webkit-text-stroke:0.25px #ececec">0,270</div>
<div class="t" style="left:1530.6px;top:857.6px;font-size:15.5px;color:#ececec;transform:scaleX(0.633);-webkit-text-stroke:0.25px #ececec">0,330</div>
<div class="t" style="left:1577.0px;top:857.6px;font-size:15.5px;color:#ececec;transform:scaleX(0.633);-webkit-text-stroke:0.25px #ececec">0,600</div>
<div class="t" style="left:1633.4px;top:857.6px;font-size:15.5px;color:#ececec;transform:scaleX(0.633);-webkit-text-stroke:0.25px #ececec">0,060</div>
<div class="t" style="left:1682.5px;top:857.6px;font-size:15.5px;color:#ececec;transform:scaleX(0.633);-webkit-text-stroke:0.25px #ececec">0,329</div>
<div class="t" style="left:1733.7px;top:857.6px;font-size:15.5px;color:#ececec;transform:scaleX(0.633);-webkit-text-stroke:0.25px #ececec">0,154</div>
<div class="t" style="left:1801.5px;top:857.6px;font-size:15.5px;color:#ececec;transform:scaleX(0.633);-webkit-text-stroke:0.25px #ececec">0,505</div>
<div class="t" style="left:381.0px;top:883.9px;font-size:15.5px;color:#ececec;transform:scaleX(0.59);-webkit-text-stroke:0.25px #ececec">Target Y</div>
<div class="t" style="left:450.7px;top:883.9px;font-size:15.5px;color:#ececec;transform:scaleX(0.633);-webkit-text-stroke:0.25px #ececec">272,007</div>
<div class="t" style="left:492.0px;top:883.9px;font-size:15.5px;color:#ececec;transform:scaleX(0.633);-webkit-text-stroke:0.25px #ececec">215,238</div>
<div class="t" style="left:534.0px;top:883.9px;font-size:15.5px;color:#ececec;transform:scaleX(0.633);-webkit-text-stroke:0.25px #ececec">173,431</div>
<div class="t" style="left:575.3px;top:883.9px;font-size:15.5px;color:#ececec;transform:scaleX(0.633);-webkit-text-stroke:0.25px #ececec">133,561</div>
<div class="t" style="left:617.7px;top:883.9px;font-size:15.5px;color:#ececec;transform:scaleX(0.633);-webkit-text-stroke:0.25px #ececec">93,003</div>
<div class="t" style="left:659.4px;top:883.9px;font-size:15.5px;color:#ececec;transform:scaleX(0.633);-webkit-text-stroke:0.25px #ececec">0,000</div>
<div class="t" style="left:689.6px;top:883.9px;font-size:15.5px;color:#ececec;transform:scaleX(0.633);-webkit-text-stroke:0.25px #ececec">27,400</div>
<div class="t" style="left:734.4px;top:883.9px;font-size:15.5px;color:#ececec;transform:scaleX(0.633);-webkit-text-stroke:0.25px #ececec">94,917</div>
<div class="t" style="left:779.0px;top:883.9px;font-size:15.5px;color:#ececec;transform:scaleX(0.633);-webkit-text-stroke:0.25px #ececec">50,861</div>
<div class="t" style="left:819.8px;top:883.9px;font-size:15.5px;color:#ececec;transform:scaleX(0.633);-webkit-text-stroke:0.25px #ececec">35,449</div>
<div class="t" style="left:855.2px;top:883.9px;font-size:15.5px;color:#ececec;transform:scaleX(0.633);-webkit-text-stroke:0.25px #ececec">63,428</div>
<div class="t" style="left:910.0px;top:883.9px;font-size:15.5px;color:#ececec;transform:scaleX(0.633);-webkit-text-stroke:0.25px #ececec">113,897</div>
<div class="t" style="left:968.3px;top:883.9px;font-size:15.5px;color:#ececec;transform:scaleX(0.633);-webkit-text-stroke:0.25px #ececec">77,108</div>
<div class="t" style="left:1010.3px;top:883.9px;font-size:15.5px;color:#ececec;transform:scaleX(0.633);-webkit-text-stroke:0.25px #ececec">31,971</div>
<div class="t" style="left:1069.9px;top:883.9px;font-size:15.5px;color:#ececec;transform:scaleX(0.633);-webkit-text-stroke:0.25px #ececec">50,799</div>
<div class="t" style="left:1135.2px;top:883.9px;font-size:15.5px;color:#ececec;transform:scaleX(0.633);-webkit-text-stroke:0.25px #ececec">18,155</div>
<div class="t" style="left:1171.4px;top:883.9px;font-size:15.5px;color:#ececec;transform:scaleX(0.633);-webkit-text-stroke:0.25px #ececec">116,302</div>
<div class="t" style="left:1231.4px;top:883.9px;font-size:15.5px;color:#ececec;transform:scaleX(0.633);-webkit-text-stroke:0.25px #ececec">115,638</div>
<div class="t" style="left:1296.7px;top:883.9px;font-size:15.5px;color:#ececec;transform:scaleX(0.633);-webkit-text-stroke:0.25px #ececec">16,981</div>
<div class="t" style="left:1332.3px;top:883.9px;font-size:15.5px;color:#ececec;transform:scaleX(0.633);-webkit-text-stroke:0.25px #ececec">62,489</div>
<div class="t" style="left:1374.7px;top:883.9px;font-size:15.5px;color:#ececec;transform:scaleX(0.633);-webkit-text-stroke:0.25px #ececec">31,722</div>
<div class="t" style="left:1410.2px;top:883.9px;font-size:15.5px;color:#ececec;transform:scaleX(0.633);-webkit-text-stroke:0.25px #ececec">160,385</div>
<div class="t" style="left:1451.8px;top:883.9px;font-size:15.5px;color:#ececec;transform:scaleX(0.633);-webkit-text-stroke:0.25px #ececec">51,208</div>
<div class="t" style="left:1494.4px;top:883.9px;font-size:15.5px;color:#ececec;transform:scaleX(0.633);-webkit-text-stroke:0.25px #ececec">52,818</div>
<div class="t" style="left:1530.6px;top:883.9px;font-size:15.5px;color:#ececec;transform:scaleX(0.633);-webkit-text-stroke:0.25px #ececec">57,844</div>
<div class="t" style="left:1577.0px;top:883.9px;font-size:15.5px;color:#ececec;transform:scaleX(0.633);-webkit-text-stroke:0.25px #ececec">194,528</div>
<div class="t" style="left:1633.4px;top:883.9px;font-size:15.5px;color:#ececec;transform:scaleX(0.633);-webkit-text-stroke:0.25px #ececec">19,635</div>
<div class="t" style="left:1682.5px;top:883.9px;font-size:15.5px;color:#ececec;transform:scaleX(0.633);-webkit-text-stroke:0.25px #ececec">214,163</div>
<div class="t" style="left:1733.7px;top:883.9px;font-size:15.5px;color:#ececec;transform:scaleX(0.633);-webkit-text-stroke:0.25px #ececec">77,479</div>
<div class="t" style="left:1801.5px;top:883.9px;font-size:15.5px;color:#ececec;transform:scaleX(0.633);-webkit-text-stroke:0.25px #ececec">252,372</div>
<div class="t" style="left:381.0px;top:910.3px;font-size:15.5px;color:#ececec;transform:scaleX(0.59);-webkit-text-stroke:0.25px #ececec">ΔE 2000</div>
<div class="t" style="left:450.7px;top:910.3px;font-size:15.5px;color:#ececec;transform:scaleX(0.633);-webkit-text-stroke:0.25px #ececec">7,963</div>
<div class="t" style="left:492.0px;top:910.3px;font-size:15.5px;color:#ececec;transform:scaleX(0.633);-webkit-text-stroke:0.25px #ececec">6,695</div>
<div class="t" style="left:534.0px;top:910.3px;font-size:15.5px;color:#ececec;transform:scaleX(0.633);-webkit-text-stroke:0.25px #ececec">6,165</div>
<div class="t" style="left:575.3px;top:910.3px;font-size:15.5px;color:#ececec;transform:scaleX(0.633);-webkit-text-stroke:0.25px #ececec">5,627</div>
<div class="t" style="left:617.7px;top:910.3px;font-size:15.5px;color:#ececec;transform:scaleX(0.633);-webkit-text-stroke:0.25px #ececec">5,066</div>
<div class="t" style="left:659.4px;top:910.3px;font-size:15.5px;color:#ececec;transform:scaleX(0.633);-webkit-text-stroke:0.25px #ececec">2,469</div>
<div class="t" style="left:689.6px;top:910.3px;font-size:15.5px;color:#ececec;transform:scaleX(0.633);-webkit-text-stroke:0.25px #ececec">4,378</div>
<div class="t" style="left:734.4px;top:910.3px;font-size:15.5px;color:#ececec;transform:scaleX(0.633);-webkit-text-stroke:0.25px #ececec">6,384</div>
<div class="t" style="left:779.0px;top:910.3px;font-size:15.5px;color:#ececec;transform:scaleX(0.633);-webkit-text-stroke:0.25px #ececec">5,372</div>
<div class="t" style="left:819.8px;top:910.3px;font-size:15.5px;color:#ececec;transform:scaleX(0.633);-webkit-text-stroke:0.25px #ececec">1,191</div>
<div class="t" style="left:855.2px;top:910.3px;font-size:15.5px;color:#ececec;transform:scaleX(0.633);-webkit-text-stroke:0.25px #ececec">3,192</div>
<div class="t" style="left:910.0px;top:910.3px;font-size:15.5px;color:#ececec;transform:scaleX(0.633);-webkit-text-stroke:0.25px #ececec">5,266</div>
<div class="t" style="left:968.3px;top:910.3px;font-size:15.5px;color:#ececec;transform:scaleX(0.633);-webkit-text-stroke:0.25px #ececec">10,110</div>
<div class="t" style="left:1010.3px;top:910.3px;font-size:15.5px;color:#ececec;transform:scaleX(0.633);-webkit-text-stroke:0.25px #ececec">5,724</div>
<div class="t" style="left:1069.9px;top:910.3px;font-size:15.5px;color:#ececec;transform:scaleX(0.633);-webkit-text-stroke:0.25px #ececec">4,771</div>
<div class="t" style="left:1135.2px;top:910.3px;font-size:15.5px;color:#ececec;transform:scaleX(0.633);-webkit-text-stroke:0.25px #ececec">3,873</div>
<div class="t" style="left:1171.4px;top:910.3px;font-size:15.5px;color:#ececec;transform:scaleX(0.633);-webkit-text-stroke:0.25px #ececec">1,269</div>
<div class="t" style="left:1231.4px;top:910.3px;font-size:15.5px;color:#ececec;transform:scaleX(0.633);-webkit-text-stroke:0.25px #ececec">10,505</div>
<div class="t" style="left:1296.7px;top:910.3px;font-size:15.5px;color:#ececec;transform:scaleX(0.633);-webkit-text-stroke:0.25px #ececec">5,841</div>
<div class="t" style="left:1332.3px;top:910.3px;font-size:15.5px;color:#ececec;transform:scaleX(0.633);-webkit-text-stroke:0.25px #ececec">2,120</div>
<div class="t" style="left:1374.7px;top:910.3px;font-size:15.5px;color:#ececec;transform:scaleX(0.633);-webkit-text-stroke:0.25px #ececec">3,703</div>
<div class="t" style="left:1410.2px;top:910.3px;font-size:15.5px;color:#ececec;transform:scaleX(0.633);-webkit-text-stroke:0.25px #ececec">7,741</div>
<div class="t" style="left:1451.8px;top:910.3px;font-size:15.5px;color:#ececec;transform:scaleX(0.633);-webkit-text-stroke:0.25px #ececec">6,196</div>
<div class="t" style="left:1494.4px;top:910.3px;font-size:15.5px;color:#ececec;transform:scaleX(0.633);-webkit-text-stroke:0.25px #ececec">7,919</div>
<div class="t" style="left:1530.6px;top:910.3px;font-size:15.5px;color:#ececec;transform:scaleX(0.633);-webkit-text-stroke:0.25px #ececec">7,096</div>
<div class="t" style="left:1577.0px;top:910.3px;font-size:15.5px;color:#ececec;transform:scaleX(0.633);-webkit-text-stroke:0.25px #ececec">4,522</div>
<div class="t" style="left:1633.4px;top:910.3px;font-size:15.5px;color:#ececec;transform:scaleX(0.633);-webkit-text-stroke:0.25px #ececec">5,797</div>
<div class="t" style="left:1682.5px;top:910.3px;font-size:15.5px;color:#ececec;transform:scaleX(0.633);-webkit-text-stroke:0.25px #ececec">8,903</div>
<div class="t" style="left:1733.7px;top:910.3px;font-size:15.5px;color:#ececec;transform:scaleX(0.633);-webkit-text-stroke:0.25px #ececec">6,410</div>
<div class="t" style="left:1801.5px;top:910.3px;font-size:15.5px;color:#ececec;transform:scaleX(0.633);-webkit-text-stroke:0.25px #ececec">3,746</div>
<div class="a" style="left:0px;top:953px;width:1516px;height:60.5px;background:#2c2c2c"></div>
<div class="a" style="left:0;top:0;width:1516px;height:1030px;overflow:hidden"><div class="a" style="left:-45px;top:953px;width:62.5px;height:60.5px;background:linear-gradient(#ababab,#979797 35%,#7a7a7a 75%,#666);border-radius:6px 6px 0 0"></div>
<div class="a" style="left:-38.8px;top:959px;width:49.7px;height:29.7px;background:#8a5a48;border-radius:4px;box-shadow:inset 1px 1px 1px rgba(0,0,0,.28)"></div>
<div class="t" id="tile0" style="left:-43.75px;top:995.38px;font-size:14.5px;color:#2a2a2a;transform:scaleX(0.9545);-webkit-text-stroke:0.45px #2a2a2a">Dark Skin</div>
<div class="a" style="left:20px;top:953px;width:62.5px;height:60.5px;background:linear-gradient(#ababab,#979797 35%,#7a7a7a 75%,#666);border-radius:6px 6px 0 0"></div>
<div class="a" style="left:26.2px;top:959px;width:49.7px;height:29.7px;background:#c99b85;border-radius:4px;box-shadow:inset 1px 1px 1px rgba(0,0,0,.28)"></div>
<div class="t" id="tile1" style="left:21.55px;top:995.38px;font-size:14.5px;color:#2a2a2a;transform:scaleX(0.9327);-webkit-text-stroke:0.45px #2a2a2a">Light Skin</div>
<div class="a" style="left:85px;top:953px;width:62.5px;height:60.5px;background:linear-gradient(#ababab,#979797 35%,#7a7a7a 75%,#666);border-radius:6px 6px 0 0"></div>
<div class="a" style="left:91.2px;top:959px;width:49.7px;height:29.7px;background:#5f80aa;border-radius:4px;box-shadow:inset 1px 1px 1px rgba(0,0,0,.28)"></div>
<div class="t" id="tile2" style="left:90.55px;top:995.38px;font-size:14.5px;color:#2a2a2a;transform:scaleX(0.8981);-webkit-text-stroke:0.45px #2a2a2a">Blue Sky</div>
<div class="a" style="left:150px;top:953px;width:62.5px;height:60.5px;background:linear-gradient(#ababab,#979797 35%,#7a7a7a 75%,#666);border-radius:6px 6px 0 0"></div>
<div class="a" style="left:156.2px;top:959px;width:49.7px;height:29.7px;background:#5a6e42;border-radius:4px;box-shadow:inset 1px 1px 1px rgba(0,0,0,.28)"></div>
<div class="t" id="tile3" style="left:159.60px;top:995.38px;font-size:14.5px;color:#2a2a2a;transform:scaleX(0.9104);-webkit-text-stroke:0.45px #2a2a2a">Foliage</div>
<div class="a" style="left:215px;top:953px;width:62.5px;height:60.5px;background:linear-gradient(#ababab,#979797 35%,#7a7a7a 75%,#666);border-radius:6px 6px 0 0"></div>
<div class="a" style="left:221.2px;top:959px;width:49.7px;height:14.6px;background:#8482bc;border-radius:4px;box-shadow:inset 1px 1px 1px rgba(0,0,0,.28)"></div>
<div class="t" id="t97" style="left:225.10px;top:980.17px;font-size:14.5px;color:#2a2a2a;-webkit-text-stroke:0.45px #2a2a2a">Blue</div>
<div class="t" id="t98" style="left:225.10px;top:995.57px;font-size:14.5px;color:#2a2a2a;-webkit-text-stroke:0.45px #2a2a2a">Flower</div>
<div class="a" style="left:280px;top:953px;width:62.5px;height:60.5px;background:linear-gradient(#ababab,#979797 35%,#7a7a7a 75%,#666);border-radius:6px 6px 0 0"></div>
<div class="a" style="left:286.2px;top:959px;width:49.7px;height:14.6px;background:#60c2ac;border-radius:4px;box-shadow:inset 1px 1px 1px rgba(0,0,0,.28)"></div>
<div class="t" id="t99" style="left:292.05px;top:980.17px;font-size:14.5px;color:#2a2a2a;-webkit-text-stroke:0.45px #2a2a2a">Bluish</div>
<div class="t" id="t100" style="left:292.05px;top:995.57px;font-size:14.5px;color:#2a2a2a;-webkit-text-stroke:0.45px #2a2a2a">Green</div>
<div class="a" style="left:345px;top:953px;width:62.5px;height:60.5px;background:linear-gradient(#ababab,#979797 35%,#7a7a7a 75%,#666);border-radius:6px 6px 0 0"></div>
<div class="a" style="left:351.2px;top:959px;width:49.7px;height:29.7px;background:#e07a28;border-radius:4px;box-shadow:inset 1px 1px 1px rgba(0,0,0,.28)"></div>
<div class="t" id="tile6" style="left:353.65px;top:995.38px;font-size:14.5px;color:#2a2a2a;transform:scaleX(0.9344);-webkit-text-stroke:0.45px #2a2a2a">Orange</div>
<div class="a" style="left:410px;top:953px;width:62.5px;height:60.5px;background:linear-gradient(#ababab,#979797 35%,#7a7a7a 75%,#666);border-radius:6px 6px 0 0"></div>
<div class="a" style="left:416.2px;top:959px;width:49.7px;height:14.6px;background:#4a5cac;border-radius:4px;box-shadow:inset 1px 1px 1px rgba(0,0,0,.28)"></div>
<div class="t" id="t102" style="left:415.95px;top:980.17px;font-size:14.5px;color:#2a2a2a;-webkit-text-stroke:0.45px #2a2a2a">Purplish</div>
<div class="t" id="t103" style="left:415.95px;top:995.57px;font-size:14.5px;color:#2a2a2a;-webkit-text-stroke:0.45px #2a2a2a">Blue</div>
<div class="a" style="left:475px;top:953px;width:62.5px;height:60.5px;background:linear-gradient(#ababab,#979797 35%,#7a7a7a 75%,#666);border-radius:6px 6px 0 0"></div>
<div class="a" style="left:481.2px;top:959px;width:49.7px;height:14.6px;background:#c85262;border-radius:4px;box-shadow:inset 1px 1px 1px rgba(0,0,0,.28)"></div>
<div class="t" id="t104" style="left:476.00px;top:980.17px;font-size:14.5px;color:#2a2a2a;-webkit-text-stroke:0.45px #2a2a2a">Moderate</div>
<div class="t" id="t105" style="left:476.00px;top:995.57px;font-size:14.5px;color:#2a2a2a;-webkit-text-stroke:0.45px #2a2a2a">Red</div>
<div class="a" style="left:540px;top:953px;width:62.5px;height:60.5px;background:linear-gradient(#ababab,#979797 35%,#7a7a7a 75%,#666);border-radius:6px 6px 0 0"></div>
<div class="a" style="left:546.2px;top:959px;width:49.7px;height:29.7px;background:#5c3c72;border-radius:4px;box-shadow:inset 1px 1px 1px rgba(0,0,0,.28)"></div>
<div class="t" id="tile9" style="left:551.25px;top:995.38px;font-size:14.5px;color:#2a2a2a;transform:scaleX(0.9542);-webkit-text-stroke:0.45px #2a2a2a">Purple</div>
<div class="a" style="left:605px;top:953px;width:62.5px;height:60.5px;background:linear-gradient(#ababab,#979797 35%,#7a7a7a 75%,#666);border-radius:6px 6px 0 0"></div>
<div class="a" style="left:611.2px;top:959px;width:49.7px;height:14.6px;background:#a0c244;border-radius:4px;box-shadow:inset 1px 1px 1px rgba(0,0,0,.28)"></div>
<div class="t" id="t107" style="left:615.45px;top:980.17px;font-size:14.5px;color:#2a2a2a;-webkit-text-stroke:0.45px #2a2a2a">Yellow</div>
<div class="t" id="t108" style="left:615.45px;top:995.57px;font-size:14.5px;color:#2a2a2a;-webkit-text-stroke:0.45px #2a2a2a">Green</div>
<div class="a" style="left:670px;top:953px;width:62.5px;height:60.5px;background:linear-gradient(#ababab,#979797 35%,#7a7a7a 75%,#666);border-radius:6px 6px 0 0"></div>
<div class="a" style="left:676.2px;top:959px;width:49.7px;height:14.6px;background:#f0a430;border-radius:4px;box-shadow:inset 1px 1px 1px rgba(0,0,0,.28)"></div>
<div class="t" id="t109" style="left:678.90px;top:980.17px;font-size:14.5px;color:#2a2a2a;-webkit-text-stroke:0.45px #2a2a2a">Orange</div>
<div class="t" id="t110" style="left:678.90px;top:995.57px;font-size:14.5px;color:#2a2a2a;-webkit-text-stroke:0.45px #2a2a2a">Yellow</div>
<div class="a" style="left:735px;top:953px;width:62.5px;height:60.5px;background:linear-gradient(#ababab,#979797 35%,#7a7a7a 75%,#666);border-radius:6px 6px 0 0"></div>
<div class="a" style="left:741.2px;top:959px;width:49.7px;height:29.7px;background:#3446a8;border-radius:4px;box-shadow:inset 1px 1px 1px rgba(0,0,0,.28)"></div>
<div class="t" id="tile12" style="left:752.85px;top:995.38px;font-size:14.5px;color:#2a2a2a;transform:scaleX(0.9231);-webkit-text-stroke:0.45px #2a2a2a">Blue</div>
<div class="a" style="left:800px;top:953px;width:62.5px;height:60.5px;background:linear-gradient(#ababab,#979797 35%,#7a7a7a 75%,#666);border-radius:6px 6px 0 0"></div>
<div class="a" style="left:806.2px;top:959px;width:49.7px;height:29.7px;background:#46a050;border-radius:4px;box-shadow:inset 1px 1px 1px rgba(0,0,0,.28)"></div>
<div class="t" id="tile13" style="left:812.55px;top:995.38px;font-size:14.5px;color:#2a2a2a;transform:scaleX(0.9278);-webkit-text-stroke:0.45px #2a2a2a">Green</div>
<div class="a" style="left:865px;top:953px;width:62.5px;height:60.5px;background:linear-gradient(#ababab,#979797 35%,#7a7a7a 75%,#666);border-radius:6px 6px 0 0"></div>
<div class="a" style="left:871.2px;top:959px;width:49.7px;height:29.7px;background:#b8343e;border-radius:4px;box-shadow:inset 1px 1px 1px rgba(0,0,0,.28)"></div>
<div class="t" id="tile14" style="left:885.05px;top:995.38px;font-size:14.5px;color:#2a2a2a;transform:scaleX(0.8418);-webkit-text-stroke:0.45px #2a2a2a">Red</div>
<div class="a" style="left:930px;top:953px;width:62.5px;height:60.5px;background:linear-gradient(#ababab,#979797 35%,#7a7a7a 75%,#666);border-radius:6px 6px 0 0"></div>
<div class="a" style="left:936.2px;top:959px;width:49.7px;height:29.7px;background:#f0c828;border-radius:4px;box-shadow:inset 1px 1px 1px rgba(0,0,0,.28)"></div>
<div class="t" id="tile15" style="left:940.95px;top:995.38px;font-size:14.5px;color:#2a2a2a;transform:scaleX(0.9809);-webkit-text-stroke:0.45px #2a2a2a">Yellow</div>
<div class="a" style="left:995px;top:953px;width:62.5px;height:60.5px;background:linear-gradient(#ababab,#979797 35%,#7a7a7a 75%,#666);border-radius:6px 6px 0 0"></div>
<div class="a" style="left:1001.2px;top:959px;width:49.7px;height:29.7px;background:#c2569c;border-radius:4px;box-shadow:inset 1px 1px 1px rgba(0,0,0,.28)"></div>
<div class="t" id="tile16" style="left:999.05px;top:995.38px;font-size:14.5px;color:#2a2a2a;transform:scaleX(0.9639);-webkit-text-stroke:0.45px #2a2a2a">Magenta</div>
<div class="a" style="left:1060px;top:953px;width:62.5px;height:60.5px;background:linear-gradient(#ababab,#979797 35%,#7a7a7a 75%,#666);border-radius:6px 6px 0 0"></div>
<div class="a" style="left:1066.2px;top:959px;width:49.7px;height:29.7px;background:#0890b0;border-radius:4px;box-shadow:inset 1px 1px 1px rgba(0,0,0,.28)"></div>
<div class="t" id="tile17" style="left:1076.25px;top:995.38px;font-size:14.5px;color:#2a2a2a;transform:scaleX(0.8860);-webkit-text-stroke:0.45px #2a2a2a">Cyan</div>
<div class="a" style="left:1125px;top:953px;width:62.5px;height:60.5px;background:linear-gradient(#ababab,#979797 35%,#7a7a7a 75%,#666);border-radius:6px 6px 0 0"></div>
<div class="a" style="left:1131.2px;top:959px;width:49.7px;height:29.7px;background:#ff0000;border-radius:4px;box-shadow:inset 1px 1px 1px rgba(0,0,0,.28)"></div>
<div class="t" id="tile18" style="left:1126.65px;top:995.38px;font-size:14.5px;color:#2a2a2a;transform:scaleX(0.8742);-webkit-text-stroke:0.45px #2a2a2a">100% Red</div>
<div class="a" style="left:1190px;top:953px;width:62.5px;height:60.5px;background:linear-gradient(#ababab,#979797 35%,#7a7a7a 75%,#666);border-radius:6px 6px 0 0"></div>
<div class="a" style="left:1196.2px;top:959px;width:49.7px;height:14.6px;background:#00ff00;border-radius:4px;box-shadow:inset 1px 1px 1px rgba(0,0,0,.28)"></div>
<div class="t" id="t118" style="left:1202.55px;top:980.17px;font-size:14.5px;color:#2a2a2a;-webkit-text-stroke:0.45px #2a2a2a">100%</div>
<div class="t" id="t119" style="left:1202.55px;top:995.57px;font-size:14.5px;color:#2a2a2a;-webkit-text-stroke:0.45px #2a2a2a">Green</div>
<div class="a" style="left:1255px;top:953px;width:62.5px;height:60.5px;background:linear-gradient(#ababab,#979797 35%,#7a7a7a 75%,#666);border-radius:6px 6px 0 0"></div>
<div class="a" style="left:1261.2px;top:959px;width:49.7px;height:14.6px;background:#0000ff;border-radius:4px;box-shadow:inset 1px 1px 1px rgba(0,0,0,.28)"></div>
<div class="t" id="t120" style="left:1268.75px;top:980.17px;font-size:14.5px;color:#2a2a2a;-webkit-text-stroke:0.45px #2a2a2a">100%</div>
<div class="t" id="t121" style="left:1268.75px;top:995.57px;font-size:14.5px;color:#2a2a2a;-webkit-text-stroke:0.45px #2a2a2a">Blue</div>
<div class="a" style="left:1320px;top:953px;width:62.5px;height:60.5px;background:linear-gradient(#ababab,#979797 35%,#7a7a7a 75%,#666);border-radius:6px 6px 0 0"></div>
<div class="a" style="left:1326.2px;top:959px;width:49.7px;height:14.6px;background:#00ffff;border-radius:4px;box-shadow:inset 1px 1px 1px rgba(0,0,0,.28)"></div>
<div class="t" id="t122" style="left:1334.40px;top:980.17px;font-size:14.5px;color:#2a2a2a;-webkit-text-stroke:0.45px #2a2a2a">100%</div>
<div class="t" id="t123" style="left:1334.40px;top:995.57px;font-size:14.5px;color:#2a2a2a;-webkit-text-stroke:0.45px #2a2a2a">Cyan</div>
<div class="a" style="left:1385px;top:953px;width:62.5px;height:60.5px;background:linear-gradient(#ababab,#979797 35%,#7a7a7a 75%,#666);border-radius:6px 6px 0 0"></div>
<div class="a" style="left:1391.2px;top:959px;width:49.7px;height:14.6px;background:#ff00ff;border-radius:4px;box-shadow:inset 1px 1px 1px rgba(0,0,0,.28)"></div>
<div class="t" id="t124" style="left:1389.05px;top:980.17px;font-size:14.5px;color:#2a2a2a;-webkit-text-stroke:0.45px #2a2a2a">100%</div>
<div class="t" id="t125" style="left:1389.05px;top:995.57px;font-size:14.5px;color:#2a2a2a;-webkit-text-stroke:0.45px #2a2a2a">Magenta</div>
<div class="a" style="left:1450px;top:953px;width:62.5px;height:60.5px;background:linear-gradient(#262626,#121212);border-radius:6px 6px 0 0"></div>
<div class="a" style="left:1456.2px;top:959px;width:49.7px;height:14.6px;background:#ffff00;border-radius:4px;box-shadow:inset 1px 1px 1px rgba(0,0,0,.28)"></div>
<div class="t" id="t126" style="left:1460.95px;top:980.17px;font-size:14.5px;color:#ffffff;font-weight:bold;-webkit-text-stroke:0.45px #ffffff">100%</div>
<div class="t" id="t127" style="left:1460.95px;top:995.57px;font-size:14.5px;color:#ffffff;font-weight:bold;-webkit-text-stroke:0.45px #ffffff">Yellow</div></div>
<div class="a" style="left:0px;top:1013.5px;width:1516px;height:16.5px;background:#606060"></div>
<div class="a" style="left:1px;top:1015px;width:15px;height:14px;background:#6e6e6e;border-radius:3px"></div>
<svg class="a" style="left:1px;top:1015px" width="15" height="14"><path d="M10 3 V11 L4.5 7 Z" fill="#3a3a3a"/></svg>
<div class="a" style="left:352px;top:1015.5px;width:1148px;height:12px;background:#4a4a4a;border-radius:6px"></div>
<div class="a" style="left:1500px;top:1015px;width:14px;height:14px;background:#6e6e6e;border-radius:3px"></div>
<svg class="a" style="left:1500px;top:1015px" width="14" height="14"><path d="M4.5 3 V11 L10 7 Z" fill="#3a3a3a"/></svg>
<div class="a" style="left:1514px;top:950px;width:406px;height:80px;background:#2a2a2a"></div>
<div class="a" style="left:1516.4px;top:952.7px;width:59.6px;height:22.3px;background:linear-gradient(#b4b4b4,#9a9a9a 50%,#888);border-radius:6px 6px 0 0"></div>
<div class="a" style="left:1516.4px;top:976.8px;width:59.6px;height:51.8px;background:linear-gradient(#b4b4b4,#9a9a9a 50%,#888);border-radius:0 0 6px 6px"></div>
<svg class="a" style="left:1537.0px;top:953.0px" width="20.0" height="20.0"><defs><linearGradient id="cg1547_963" x1="0" y1="0" x2="0" y2="1"><stop offset="0" stop-color="#8a8a8a"/><stop offset="1" stop-color="#b8b8b8"/></linearGradient></defs><circle cx="10" cy="10" r="9" fill="url(#cg1547_963)"/><g transform="translate(10 10)"><path d="M-5 2.5 L5 2.5 L0 -3 Z" fill="#2a2a2a"/></g></svg>
<div class="a" style="left:1526px;top:982.7px;width:39.6px;height:39.3px;border:3px solid #2a2a2a;border-radius:6px;box-sizing:border-box;background:linear-gradient(#a8a8a8,#8c8c8c)"></div>
<div class="a" style="left:1537px;top:993.6px;width:17.7px;height:17.4px;background:linear-gradient(#1c1c1c 55%,#000 55%)"></div>
<div class="a" style="left:1577.7px;top:952.7px;width:57.3px;height:37.2px;background:linear-gradient(#b4b4b4,#9a9a9a 50%,#888);border-radius:6px 0 0 0"></div>
<svg class="a" style="left:1592.5px;top:957.7px" width="27.0" height="27.0"><defs><linearGradient id="cg1606_971" x1="0" y1="0" x2="0" y2="1"><stop offset="0" stop-color="#8a8a8a"/><stop offset="1" stop-color="#b8b8b8"/></linearGradient></defs><circle cx="13.5" cy="13.5" r="12.5" fill="url(#cg1606_971)"/><g transform="translate(13.5 13.5)"><rect x="-5" y="-5" width="10" height="10" fill="#2a2a2a"/></g></svg>
<div class="a" style="left:1636px;top:952.7px;width:55.0px;height:37.2px;background:linear-gradient(#b4b4b4,#9a9a9a 50%,#888);border-radius:0"></div>
<svg class="a" style="left:1649.5px;top:957.7px" width="27.0" height="27.0"><defs><linearGradient id="cg1663_971" x1="0" y1="0" x2="0" y2="1"><stop offset="0" stop-color="#8a8a8a"/><stop offset="1" stop-color="#b8b8b8"/></linearGradient></defs><circle cx="13.5" cy="13.5" r="12.5" fill="url(#cg1663_971)"/><g transform="translate(13.5 13.5)"><path d="M-4 -6 L7 0 L-4 6 Z" fill="#2a2a2a"/></g></svg>
<div class="a" style="left:1692px;top:952.7px;width:55.0px;height:37.2px;background:linear-gradient(#b4b4b4,#9a9a9a 50%,#888);border-radius:0"></div>
<svg class="a" style="left:1706.5px;top:957.7px" width="27.0" height="27.0"><defs><linearGradient id="cg1720_971" x1="0" y1="0" x2="0" y2="1"><stop offset="0" stop-color="#8a8a8a"/><stop offset="1" stop-color="#b8b8b8"/></linearGradient></defs><circle cx="13.5" cy="13.5" r="12.5" fill="url(#cg1720_971)"/><g transform="translate(13.5 13.5)"><path d="M-4.5 -6.5 H-6.5 V6.5 H-4.5 M4.5 -6.5 H6.5 V6.5 H4.5" fill="none" stroke="#2a2a2a" stroke-width="2"/><circle cx="-2" cy="0" r="1" fill="#2a2a2a"/><circle cx="2" cy="0" r="1" fill="#2a2a2a"/></g></svg>
<div class="a" style="left:1748px;top:952.7px;width:55.6px;height:37.2px;background:linear-gradient(#b4b4b4,#9a9a9a 50%,#888);border-radius:0"></div>
<svg class="a" style="left:1762.5px;top:957.7px" width="27.0" height="27.0"><defs><linearGradient id="cg1776_971" x1="0" y1="0" x2="0" y2="1"><stop offset="0" stop-color="#8a8a8a"/><stop offset="1" stop-color="#b8b8b8"/></linearGradient></defs><circle cx="13.5" cy="13.5" r="12.5" fill="url(#cg1776_971)"/><g transform="translate(13.5 13.5)"><path d="M0 0 C-2 -3.6 -8 -3.6 -8 0 C-8 3.6 -2 3.6 0 0 C2 -3.6 8 -3.6 8 0 C8 3.6 2 3.6 0 0 Z" fill="none" stroke="#2a2a2a" stroke-width="2.2" transform="translate(0 1)"/></g></svg>
<div class="a" style="left:1804.6px;top:952.7px;width:55.4px;height:37.2px;background:linear-gradient(#3a3a3a,#2c2c2c);border-radius:0"></div>
<svg class="a" style="left:1818.5px;top:957.7px" width="27.0" height="27.0"><defs><linearGradient id="cg1832_971" x1="0" y1="0" x2="0" y2="1"><stop offset="0" stop-color="#242424"/><stop offset="1" stop-color="#3a3a3a"/></linearGradient></defs><circle cx="13.5" cy="13.5" r="12.5" fill="url(#cg1832_971)"/><g transform="translate(13.5 13.5)"><path d="M-6 -1 A6 6 0 0 1 5 -3 M6 1 A6 6 0 0 1 -5 3" fill="none" stroke="#1a1a1a" stroke-width="2.5"/><path d="M3 -6 L7 -2 L2 -1 Z M-3 6 L-7 2 L-2 1 Z" fill="#1a1a1a"/></g></svg>
<div class="a" style="left:1861px;top:952.7px;width:59.0px;height:37.2px;background:linear-gradient(#3a3a3a,#2c2c2c);border-radius:0 6px 0 0"></div>
<svg class="a" style="left:1875.5px;top:957.7px" width="27.0" height="27.0"><defs><linearGradient id="cg1889_971" x1="0" y1="0" x2="0" y2="1"><stop offset="0" stop-color="#242424"/><stop offset="1" stop-color="#3a3a3a"/></linearGradient></defs><circle cx="13.5" cy="13.5" r="12.5" fill="url(#cg1889_971)"/><g transform="translate(13.5 13.5)"></g></svg>
<div class="a" style="left:1577.7px;top:991.4px;width:169.9px;height:37.6px;background:linear-gradient(#b4b4b4,#9a9a9a 50%,#888);border-radius:6px 0 0 6px"></div>
<div class="a" style="left:1749px;top:991.4px;width:169px;height:37.6px;background:linear-gradient(#b4b4b4,#9a9a9a 50%,#888);border-radius:0 6px 6px 0"></div>
<svg class="a" style="left:1603.0px;top:997.0px" width="26.0" height="26.0"><defs><linearGradient id="cg1616_1010" x1="0" y1="0" x2="0" y2="1"><stop offset="0" stop-color="#8a8a8a"/><stop offset="1" stop-color="#b8b8b8"/></linearGradient></defs><circle cx="13" cy="13" r="12" fill="url(#cg1616_1010)"/><g transform="translate(13 13)"><path d="M-0.5 -5.5 L-5.5 0 L-0.5 5.5 M5 -5.5 L0 0 L5 5.5" fill="none" stroke="#2a2a2a" stroke-width="1.9"/></g></svg>
<svg class="a" style="left:1869.4px;top:997.0px" width="26.0" height="26.0"><defs><linearGradient id="cg1882_1010" x1="0" y1="0" x2="0" y2="1"><stop offset="0" stop-color="#8a8a8a"/><stop offset="1" stop-color="#b8b8b8"/></linearGradient></defs><circle cx="13" cy="13" r="12" fill="url(#cg1882_1010)"/><g transform="translate(13 13)"><path d="M0.5 -5.5 L5.5 0 L0.5 5.5 M-5 -5.5 L0 0 L-5 5.5" fill="none" stroke="#2a2a2a" stroke-width="1.9"/></g></svg>
<div class="t" id="back" style="left:1650.00px;top:997.23px;font-size:27.5px;color:#2a2a2a;transform:scaleX(1.0141);-webkit-text-stroke:1px #2a2a2a">Back</div>
<div class="t" id="next" style="left:1783.00px;top:997.23px;font-size:27.5px;color:#2a2a2a;transform:scaleX(1.1283);-webkit-text-stroke:1px #2a2a2a">Next</div>
</body></html>
